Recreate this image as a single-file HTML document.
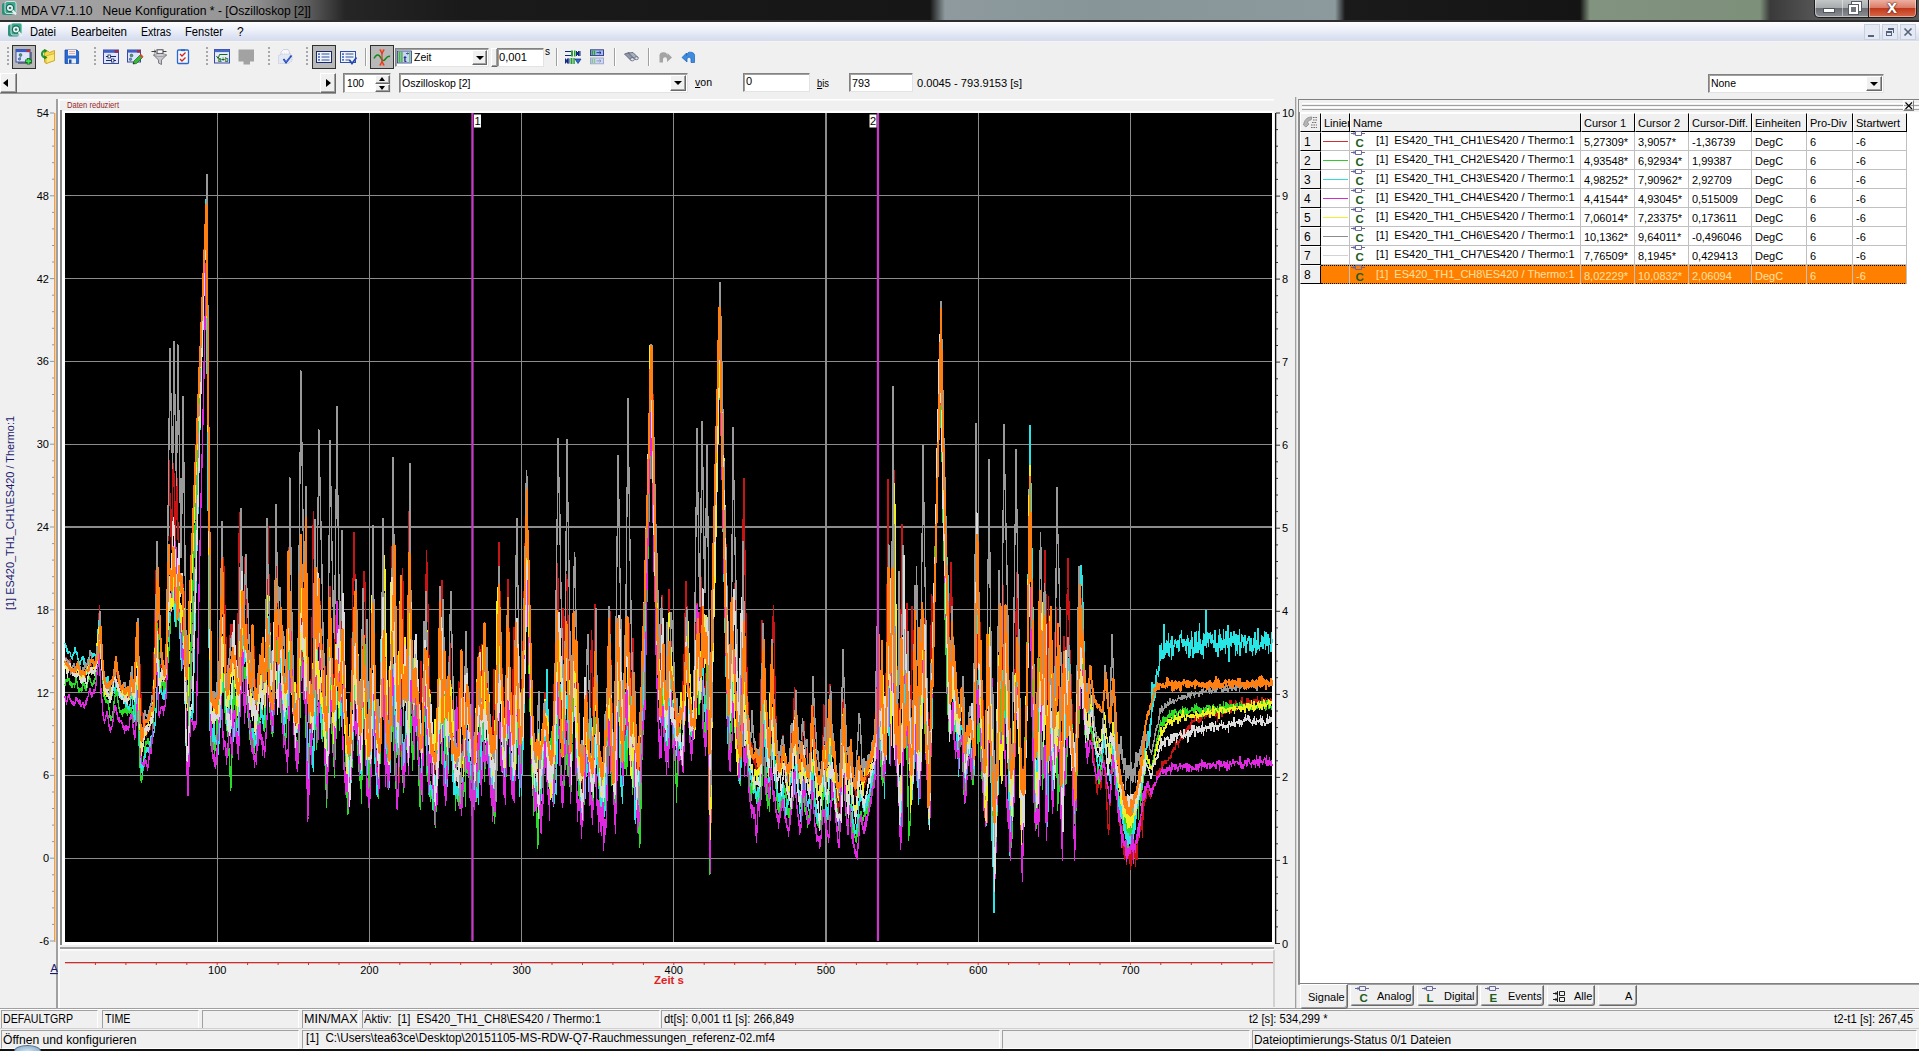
<!DOCTYPE html>
<html lang="de">
<head>
<meta charset="utf-8">
<title>MDA V7.1.10 Neue Konfiguration * - [Oszilloskop [2]]</title>
<style>
*{box-sizing:border-box;margin:0;padding:0}
html,body{width:1919px;height:1051px;overflow:hidden;background:#f0f0f0}
body{position:relative;font-family:"Liberation Sans",sans-serif;font-size:12px;color:#000}
.a{position:absolute}
.t{position:absolute;white-space:nowrap;line-height:1;transform-origin:0 0}
#title{left:0;top:0;width:1919px;height:21px;background:
 linear-gradient(90deg,#3c3c3c 0px,#2a2a2a 300px,#1a1a1a 460px,#161616 930px,#8e9a9e 945px,#879598 1100px,#8c9a9e 1335px,#1a1a1a 1345px,#141414 1580px,#82937f 1590px,#7d907a 1760px,#3a3a3a 1770px,#555 1815px)}
#titleglow{left:0;top:0;width:345px;height:21px;background:linear-gradient(90deg,rgba(185,185,185,.85) 0,rgba(175,175,175,.8) 250px,rgba(140,140,140,.5) 310px,rgba(80,80,80,0) 345px)}
#tline{left:0;top:20px;width:1919px;height:2px;background:#2e2e2e}
#menu{left:0;top:22px;width:1919px;height:19px;background:linear-gradient(#fdfdff 0%,#eef1f9 40%,#dde3f2 75%,#d6dcec 100%)}
#menuline{left:0;top:41px;width:1919px;height:1px;background:#f5f5f5}
.m{top:26px;font-size:12px}
.sunk{position:absolute;background:#fff;border:1px solid;border-color:#828282 #e3e3e3 #e3e3e3 #828282;box-shadow:inset 1px 1px 0 #a0a0a0}
.btn{position:absolute;background:#f0f0f0;border:1px solid;border-color:#fff #696969 #696969 #fff;box-shadow:inset -1px -1px 0 #a0a0a0}
.pressed{position:absolute;background:#b9b9b9;border:1px solid #303030}
.vsep{position:absolute;width:1px;background:#a0a0a0;box-shadow:1px 0 0 #fff}
.grip{position:absolute;width:2px;height:20px;background:repeating-linear-gradient(#a8a8a8 0 2px,transparent 2px 4px)}
.sb{position:absolute;font-size:12px;top:1013px}
.pan{position:absolute;border:1px solid;border-color:#a0a0a0 #fff #fff #a0a0a0;height:19px}
.hd{position:absolute;top:113px;height:19px;background:#f0f0f0;border:1px solid;border-color:#fff #000 #000 #fff;font-size:11px;padding:3px 0 0 2px;white-space:nowrap;overflow:hidden}
.rh{position:absolute;left:1300px;width:21px;height:19px;background:#f0f0f0;border:1px solid;border-color:#fff #000 #000 #fff;font-size:12px;padding:2px 0 0 3px}
.row{position:absolute;left:1321px;width:586px;height:19px;border-bottom:1px solid #c0c0c0;font-size:11px;white-space:nowrap}
.row span{position:absolute;top:4px;white-space:nowrap}
.row i{position:absolute;left:2px;top:9px;width:25px;height:1px}
.row b{position:absolute;left:30px;top:-1px;width:20px;height:19px;font-weight:normal}
.cl{position:absolute;top:132px;width:1px;height:152px;background:#c0c0c0}
.tab{position:absolute;top:985px;height:21px;background:#f0f0f0;border:1px solid;border-color:#f0f0f0 #696969 #696969 #fff;box-shadow:inset -1px -1px 0 #a0a0a0;border-radius:0 0 3px 3px;font-size:11px;white-space:nowrap}
.tab span{position:absolute;top:4px}
svg{position:absolute;left:0;top:0}
</style>
</head>
<body>
<!-- title bar -->
<div class="a" id="title"></div>
<div class="a" id="titleglow"></div>
<div class="a" id="tline"></div>
<div class="t" id="ttxt" style="transform:scaleX(1.011);left:21px;top:5px;font-size:12px;color:#000">MDA V7.1.10&nbsp;&nbsp; Neue Konfiguration * - [Oszilloskop [2]]</div>
<!-- window buttons -->
<div class="a" style="left:1814px;top:0;width:29px;height:18px;border:1px solid #1c1c1c;border-top:0;border-radius:0 0 0 5px;background:linear-gradient(#c2c6c6,#a6aaaa 48%,#6c7076 50%,#8c9094);box-shadow:inset 1px -1px 0 rgba(255,255,255,.45)"></div>
<div class="a" style="left:1842px;top:0;width:27px;height:18px;border:1px solid #1c1c1c;border-top:0;border-left:0;background:linear-gradient(#c2c6c6,#a6aaaa 48%,#6c7076 50%,#8c9094);box-shadow:inset 1px -1px 0 rgba(255,255,255,.45)"></div>
<div class="a" style="left:1869px;top:0;width:48px;height:18px;border:1px solid #1c1c1c;border-top:0;border-left:0;border-radius:0 0 5px 0;background:linear-gradient(#eeb0a0,#d87a66 48%,#c23a1c 50%,#d8684a);box-shadow:inset 1px -1px 0 rgba(255,255,255,.45),inset -1px 0 0 rgba(255,255,255,.45)"></div>
<div class="a" style="left:1823px;top:8px;width:12px;height:5px;background:#fff;border:1px solid #50545c"></div>
<div class="a" style="left:1852px;top:2px;width:9px;height:9px;border:2px solid #fff;outline:1px solid #585c64"></div>
<div class="a" style="left:1849px;top:5px;width:9px;height:9px;border:2.5px solid #fff;outline:1px solid #585c64;background:#70747a"></div>
<div class="t" style="left:1887px;top:-2px;font-size:18px;font-weight:bold;color:#fff;text-shadow:0 0 2px #501008,0 0 1px #501008">x</div>
<!-- menu bar -->
<div class="a" id="menu"></div>
<div class="a" id="menuline"></div>
<div class="t m" id="m1" style="transform:scaleX(0.928);left:30px">Datei</div>
<div class="t m" id="m2" style="transform:scaleX(0.965);left:71px">Bearbeiten</div>
<div class="t m" id="m3" style="transform:scaleX(0.882);left:141px">Extras</div>
<div class="t m" id="m4" style="transform:scaleX(0.934);left:185px">Fenster</div>
<div class="t m" id="m5" style="left:237px">?</div>
<!-- toolbar icons -->
<svg style="left:0;top:0;z-index:3;pointer-events:none" width="720" height="75" viewBox="0 0 720 75">
<!-- app icons (title + menu) -->
<g id="appico">
<rect x="2" y="3" width="11" height="12" rx="2" fill="#2f8f7d"/><rect x="5" y="1.5" width="11" height="12" rx="2" fill="#3aa890" stroke="#e8f4f0" stroke-width=".8"/><circle cx="10" cy="8" r="3.6" fill="#eef6f4" stroke="#1d6a5a" stroke-width="1.2"/><path d="M12.5 10.5 L16 14.5" stroke="#e8f0ee" stroke-width="2"/><circle cx="10" cy="8" r="1.3" fill="#2a7a6a"/>
</g>
<g transform="translate(6,21.5)">
<rect x="2" y="3" width="11" height="12" rx="2" fill="#2f8f7d"/><rect x="5" y="1.5" width="11" height="12" rx="2" fill="#3aa890" stroke="#e8f4f0" stroke-width=".8"/><circle cx="10" cy="8" r="3.6" fill="#eef6f4" stroke="#1d6a5a" stroke-width="1.2"/><path d="M12.5 10.5 L16 14.5" stroke="#e8f0ee" stroke-width="2"/><circle cx="10" cy="8" r="1.3" fill="#2a7a6a"/>
</g>
<!-- 1 window+plus -->
<rect x="18" y="52" width="14" height="12" fill="#707078"/>
<rect x="16" y="49.5" width="14" height="12.5" fill="#dfe6fb" stroke="#3c50a8" stroke-width="1"/><rect x="16" y="49.5" width="14" height="2.6" fill="#3c5ac8"/><rect x="26.5" y="49.5" width="3.5" height="2.6" fill="#b03838"/>
<circle cx="20.5" cy="55" r="1.4" fill="#50a050" stroke="#305080" stroke-width=".6"/><circle cx="19.5" cy="59" r="1.2" fill="#7090c0" stroke="#305080" stroke-width=".6"/><path d="M21 56.5 L20 58" stroke="#305080" stroke-width=".6"/>
<path d="M28.5 58 V64.5 M25.2 61.2 H31.8" stroke="#0a6a1a" stroke-width="3.4"/><path d="M28.5 58.8 V63.7 M26 61.2 H31" stroke="#48e058" stroke-width="1.8"/>
<!-- 2 folder -->
<path d="M44.5 52.5 L48 51 L49.5 52.5 L54.5 50.5 V60.5 L46 63.5 L44.5 62 Z" fill="#f4d84a" stroke="#c09a18" stroke-width=".8"/><path d="M46 56 L54.5 53.5 V60.5 L46 63.5 Z" fill="#fbe878" stroke="#c09a18" stroke-width=".6"/>
<path d="M45.5 50.5 A3.4 3.4 0 1 0 45.5 57.5" fill="none" stroke="#2c9a2c" stroke-width="2.2"/><path d="M44 49 L47.5 50.5 L44.5 53 Z M44 59.5 L47.5 57.5 L44.5 55.5 Z" fill="#1c8a1c"/>
<!-- 3 floppy -->
<path d="M65 50 H77 L78.6 51.6 V63.5 H65 Z" fill="#2a6ad0" stroke="#1848a0" stroke-width=".8"/><rect x="68" y="50" width="8" height="5.5" fill="#f4f0f0"/><path d="M69 51.5 H75 M69 53.5 H75" stroke="#d89090" stroke-width=".7"/><rect x="68" y="58.5" width="8" height="5" fill="#e8eef8"/><rect x="69" y="59.5" width="2.5" height="4" fill="#2050a8"/>
<!-- 4 window sliders -->
<rect x="103.5" y="50" width="15" height="13.5" fill="#dfe6fb" stroke="#3848a0" stroke-width="1"/><rect x="103.5" y="50" width="15" height="2.8" fill="#4060c8"/><rect x="114.5" y="50" width="4" height="2.8" fill="#903050"/>
<path d="M106 56.5 H116 M106 60.5 H116" stroke="#182868" stroke-width="1.2"/><rect x="108" y="55" width="2.4" height="3" fill="#fff" stroke="#182868" stroke-width=".8"/><rect x="111.5" y="59" width="2.4" height="3" fill="#fff" stroke="#182868" stroke-width=".8"/>
<!-- 5 window pencil -->
<rect x="127.5" y="50" width="13" height="12" fill="#dfe6fb" stroke="#3848a0" stroke-width="1"/><rect x="127.5" y="50" width="13" height="2.6" fill="#4060c8"/><rect x="137" y="50" width="3.5" height="2.6" fill="#a03040"/>
<circle cx="131.5" cy="55.5" r="1.4" fill="#50a050" stroke="#305080" stroke-width=".6"/><circle cx="130.5" cy="59.3" r="1.2" fill="#7090c0" stroke="#305080" stroke-width=".6"/>
<path d="M133 64 L134 61 L140 55 L142.5 57.5 L136.5 63.5 Z" fill="#38b838" stroke="#186818" stroke-width=".7"/><path d="M139.5 55.5 L141 54 L143.5 56.5 L142 58 Z" fill="#e04828"/><path d="M133 64 L133.6 62.2 L134.8 63.4 Z" fill="#202020"/>
<!-- 6 funnel -->
<path d="M151.5 51.5 H156 M154.3 50 L156 51.5 L154.3 53" stroke="#404048" stroke-width="1" fill="none"/><rect x="157" y="49.8" width="6" height="3.6" fill="#fff" stroke="#404048" stroke-width="1"/><path d="M163 51.5 H166.5" stroke="#404048" stroke-width="1"/>
<path d="M153.5 55 H166.5 L161.5 60 V64.5 L158.5 63 V60 Z" fill="#c8c8cc" stroke="#707078" stroke-width=".9"/><ellipse cx="160" cy="55" rx="6.5" ry="1.2" fill="#e8e8ec" stroke="#707078" stroke-width=".7"/>
<!-- 7 checklist -->
<rect x="177.5" y="50" width="11" height="13.5" rx="1" fill="#f4f8ff" stroke="#2868d0" stroke-width="1.3"/><rect x="181" y="49.3" width="4" height="1.8" fill="#2868d0"/>
<path d="M180 54 L182 56 L185.5 52.5 M180 59 L182 61 L185.5 57.5" stroke="#d02818" stroke-width="1.3" fill="none"/>
<!-- 8 a+b window -->
<rect x="214.5" y="49.5" width="15" height="13.5" fill="#e4ecfc" stroke="#3848a0" stroke-width="1"/><rect x="214.5" y="49.5" width="15" height="2.6" fill="#4868c8"/>
<path d="M216.5 56 L218.2 58.5 L219.5 54.5 H227.5" stroke="#186818" stroke-width="1" fill="none"/><text x="218" y="62" font-family="Liberation Sans,sans-serif" font-weight="bold" font-size="6.5" fill="#186818" textLength="10.5" lengthAdjust="spacingAndGlyphs">a+b</text>
<!-- 9 grey disabled -->
<path d="M238.5 49.5 H254 V61.5 H250 V64.5 H243.5 V61.5 H238.5 Z" fill="#a2a2a2"/>
<!-- 10 printer + check -->
<path d="M281 52 L283.5 49.5 H288 L289.5 52 V55 H281 Z" fill="#f8f8fc" stroke="#c0c4d8" stroke-width=".7"/><path d="M278.5 55.5 L282 54 H291 L292 56 V61 L288 63.5 H278.5 Z" fill="#e4e8f4" stroke="#b8bcd0" stroke-width=".7" stroke-dasharray="1.2 .8"/>
<path d="M283.5 59 L286 62.5 L291.5 55.5" stroke="#2048b0" stroke-width="1.8" fill="none"/><path d="M284.5 60 L286 62 L290 57" stroke="#4878e0" stroke-width=".8" fill="none"/>
<!-- 11 list -->
<rect x="316.5" y="51.5" width="15" height="11" fill="#f0f4ff" stroke="#182868" stroke-width="1"/><rect x="318" y="53.3" width="2" height="1.6" fill="#4868c8"/><rect x="318" y="56.2" width="2" height="1.6" fill="#4868c8"/><rect x="318" y="59.1" width="2" height="1.6" fill="#4868c8"/>
<path d="M321.5 54 H329.5 M321.5 57 H329.5 M321.5 60 H329.5" stroke="#3050a0" stroke-width="1"/>
<!-- 12 list + check -->
<rect x="340.5" y="51.5" width="15" height="11" fill="#f0f4ff" stroke="#3050a0" stroke-width="1"/><rect x="342" y="53.3" width="2" height="1.6" fill="#4868c8"/><rect x="342" y="56.2" width="2" height="1.6" fill="#4868c8"/><rect x="342" y="59.1" width="2" height="1.6" fill="#4868c8"/>
<path d="M345.5 54 H353.5 M345.5 57 H353.5 M345.5 60 H350" stroke="#3050a0" stroke-width="1"/><path d="M349.5 60 L352 63.5 L356.5 57.5" stroke="#2048b0" stroke-width="1.8" fill="none"/>
<!-- 13 wave -->
<path d="M374 58.5 C376 54.5 378.5 54 380 56.5 S383 62 385 59.5 S388 55.5 390 56.5" stroke="#108818" stroke-width="1.5" fill="none"/>
<path d="M382 50 V65" stroke="#e03820" stroke-width="1.2"/><path d="M379.8 49.5 L382 53.5 L384.2 49.5 M379.8 65.5 L382 61.5 L384.2 65.5" stroke="#e03820" stroke-width="1.3" fill="#f08060"/>
<!-- 14 combo icon -->
<rect x="397.5" y="51" width="14" height="12" fill="#c8d4f4" stroke="#283880" stroke-width=".8"/><rect x="398.5" y="51.5" width="2" height="11" fill="#48b048"/><rect x="401.2" y="51.5" width="1.4" height="11" fill="#48b048"/><rect x="409" y="51.5" width="1.6" height="11" fill="#78c078"/>
<text x="403.5" y="61.5" font-family="Liberation Sans,sans-serif" font-weight="bold" font-size="9" fill="#182878">t</text><path d="M406 53.5 H408.5 M407.5 52.5 L408.6 53.5 L407.5 54.5" stroke="#182878" stroke-width=".7" fill="none"/>
<!-- 15 -->
<path d="M565 51.5 H571 M565 55.5 H571" stroke="#102880" stroke-width="1"/><rect x="571" y="50.5" width="2" height="6" fill="#28a038"/><rect x="574" y="50.5" width="1.5" height="6" fill="#28a038"/><path d="M576.5 51 V56 M576.5 53.5 L579 51 V56 Z M580 51 V56" stroke="#102880" stroke-width="1" fill="#102880"/>
<path d="M565.5 58.5 V63.5 M565.5 61 L568 58.5 V63.5 Z M569 58.5 V63.5" stroke="#102880" stroke-width="1" fill="#102880"/><rect x="570.5" y="58" width="2" height="6" fill="#28a038"/><rect x="573.3" y="58" width="1.5" height="6" fill="#28a038"/><path d="M575 59 H581 L578 63.5 Z" fill="#2870d8" stroke="#102880" stroke-width=".7"/>
<!-- 16 -->
<rect x="590.5" y="49.8" width="13" height="5.8" fill="#a8b8f0" stroke="#283880" stroke-width=".9"/><rect x="591.5" y="50.5" width="1.8" height="4.4" fill="#28a038"/><rect x="594" y="50.5" width="1.2" height="4.4" fill="#28a038"/><path d="M596.5 52.7 H601 M599.5 51.3 L601 52.7 L599.5 54.1" stroke="#102880" stroke-width=".9" fill="none"/>
<rect x="590.5" y="58" width="13" height="5.8" fill="#d0d8f4" stroke="#98a4c8" stroke-width=".9"/><rect x="591.5" y="58.7" width="1.8" height="4.4" fill="#88c890"/><rect x="594" y="58.7" width="1.2" height="4.4" fill="#88c890"/><path d="M596.5 60.9 H601 M599.5 59.5 L601 60.9 L599.5 62.3" stroke="#8090c0" stroke-width=".9" fill="none"/>
<!-- 17 binoculars -->
<path d="M624.5 54 L629 52.5 L634.5 58.5 L631 60.5 Z" fill="#9098a8" stroke="#505868" stroke-width=".8"/><path d="M628.5 53 L633 52.5 L638 57.5 L635 59.5 Z" fill="#a8b0c0" stroke="#505868" stroke-width=".8"/><ellipse cx="632.3" cy="59.3" rx="2" ry="1.6" fill="#dce4f4" stroke="#505868" stroke-width=".7"/><ellipse cx="636.5" cy="58.2" rx="1.8" ry="1.5" fill="#dce4f4" stroke="#505868" stroke-width=".7"/>
<!-- 18 redo grey -->
<path d="M659.5 62.5 V57 A4 4 0 0 1 667.5 55.5 L667.5 53 L672 57.5 L667 62 V59 A2 2 0 0 0 663 59.5 V62.5 Z" fill="#a4a4a4"/>
<!-- 19 undo blue -->
<path d="M694.5 62.5 V57 A4 4 0 0 0 686.5 55.5 L686.5 53 L682 57.5 L687 62 V59 A2 2 0 0 1 691 59.5 V62.5 Z" fill="#3c8ce0" stroke="#1c60b8" stroke-width=".7"/>
</svg>

<!-- toolbar row 1 -->
<div class="grip" style="left:7px;top:47px"></div>
<div class="pressed" style="left:12px;top:45px;width:24px;height:24px"></div>
<div class="grip" style="left:94px;top:47px"></div>
<div class="grip" style="left:206px;top:47px"></div>
<div class="grip" style="left:268px;top:47px"></div>
<div class="grip" style="left:306px;top:47px"></div>
<div class="pressed" style="left:312px;top:45px;width:24px;height:24px"></div>
<div class="vsep" style="left:365px;top:48px;height:18px"></div>
<div class="pressed" style="left:370px;top:45px;width:24px;height:24px"></div>
<div class="sunk" style="left:395px;top:48px;width:94px;height:19px"></div>
<div class="btn" style="left:472px;top:50px;width:15px;height:15px"></div>
<div class="a" style="left:476px;top:56px;border:4px solid transparent;border-top:4px solid #000;border-bottom:0"></div>
<div class="t" id="zeit" style="transform:scaleX(0.954);left:414px;top:52px;font-size:11px">Zeit</div>
<div class="btn" style="left:491px;top:48px;width:7px;height:19px"></div>
<div class="sunk" style="left:497px;top:48px;width:47px;height:19px"></div>
<div class="t" id="v001" style="transform:scaleX(1.017);left:499px;top:52px;font-size:11px">0,001</div>
<div class="t" style="left:545px;top:47px;font-size:10px">s</div>
<div class="vsep" style="left:556px;top:48px;height:18px"></div>
<div class="vsep" style="left:614px;top:48px;height:18px"></div>
<div class="vsep" style="left:648px;top:48px;height:18px"></div>
<!-- toolbar row 2 -->
<div class="a" style="left:0;top:73px;width:336px;height:21px;background:#f0f0f0;border-bottom:2px solid #9a9a9a"></div>
<div class="btn" style="left:0;top:73px;width:17px;height:20px"></div>
<div class="a" style="left:3px;top:79px;border:4px solid transparent;border-right:5px solid #000;border-left:0"></div>
<div class="btn" style="left:320px;top:73px;width:16px;height:20px"></div>
<div class="a" style="left:326px;top:79px;border:4px solid transparent;border-left:5px solid #000;border-right:0"></div>
<div class="sunk" style="left:343px;top:73px;width:48px;height:20px"></div>
<div class="t" id="v100" style="transform:scaleX(0.926);left:347px;top:78px;font-size:11px">100</div>
<div class="btn" style="left:375px;top:75px;width:15px;height:9px"></div>
<div class="btn" style="left:375px;top:84px;width:15px;height:8px"></div>
<div class="a" style="left:379px;top:77px;border:3.5px solid transparent;border-bottom:4px solid #000;border-top:0"></div>
<div class="a" style="left:379px;top:86px;border:3.5px solid transparent;border-top:4px solid #000;border-bottom:0"></div>
<div class="sunk" style="left:399px;top:73px;width:289px;height:20px"></div>
<div class="t" id="osz" style="transform:scaleX(0.958);left:402px;top:78px;font-size:11px">Oszilloskop [2]</div>
<div class="btn" style="left:670px;top:75px;width:16px;height:16px"></div>
<div class="a" style="left:674px;top:81px;border:4px solid transparent;border-top:4px solid #000;border-bottom:0"></div>
<div class="t" id="von" style="transform:scaleX(0.958);left:695px;top:77px;font-size:11px"><u>v</u>on</div>
<div class="sunk" style="left:743px;top:73px;width:67px;height:19px"></div>
<div class="t" style="left:746px;top:76px;font-size:11px">0</div>
<div class="t" id="bis" style="transform:scaleX(0.852);left:817px;top:78px;font-size:11px"><u>b</u>is</div>
<div class="sunk" style="left:849px;top:73px;width:64px;height:19px"></div>
<div class="t" id="v793" style="transform:scaleX(0.98);left:852px;top:78px;font-size:11px">793</div>
<div class="t" id="rng" style="transform:scaleX(1.01);left:917px;top:78px;font-size:11px">0.0045 - 793.9153 [s]</div>
<div class="sunk" style="left:1708px;top:74px;width:176px;height:19px"></div>
<div class="t" id="none" style="transform:scaleX(0.951);left:1711px;top:78px;font-size:11px">None</div>
<div class="btn" style="left:1866px;top:76px;width:16px;height:15px"></div>
<div class="a" style="left:1870px;top:82px;border:4px solid transparent;border-top:4px solid #000;border-bottom:0"></div>
<!-- MDI buttons -->
<div class="a" style="left:1864px;top:24px;width:16px;height:16px;border:1px solid #c8d0e0;background:#e4e9f4"></div>
<div class="a" style="left:1882px;top:24px;width:16px;height:16px;border:1px solid #c8d0e0;background:#e4e9f4"></div>
<div class="a" style="left:1900px;top:24px;width:16px;height:16px;border:1px solid #c8d0e0;background:#e4e9f4"></div>
<div class="a" style="left:1868px;top:35px;width:6px;height:2px;background:#55627c"></div>
<div class="a" style="left:1886px;top:31px;width:6px;height:5px;border:1px solid #55627c;border-top-width:2px"></div>
<div class="a" style="left:1888px;top:28px;width:6px;height:5px;border:1px solid #55627c;border-top-width:2px;border-left:0;border-bottom:0"></div>
<svg class="a" style="left:1903px;top:27px" width="10" height="10" viewBox="0 0 10 10"><path d="M1.5 1.5 L8.5 8.5 M8.5 1.5 L1.5 8.5" stroke="#55627c" stroke-width="1.6"/></svg>


<svg width="1296" height="1010" viewBox="0 0 1296 1010" font-family="Liberation Sans, sans-serif">
<rect x="56" y="99" width="2" height="909" fill="#a0a0a0"/>
<rect x="58" y="99" width="2" height="909" fill="#fbfbfb"/>
<rect x="58" y="99" width="1216" height="1.5" fill="#fff"/>
<rect x="60" y="110" width="2" height="835" fill="#868686"/>
<rect x="62" y="111" width="1212" height="834" fill="#fff"/>
<rect x="60" y="947" width="1214" height="2" fill="#a0a0a0"/>
<rect x="60" y="949" width="1214" height="1.6" fill="#fff"/>
<rect x="65" y="113" width="1207" height="829" fill="#000"/>
<text x="67" y="108" font-size="8.5" fill="#982828" textLength="52" lengthAdjust="spacingAndGlyphs">Daten reduziert</text>
<path d="M217.2 113V942 M369.4 113V942 M521.6 113V942 M673.8 113V942 M826.0 113V942 M978.2 113V942 M1130.4 113V942 M65 858.2H1272 M65 775.4H1272 M65 692.6H1272 M65 609.8H1272 M65 527.0H1272 M65 444.2H1272 M65 361.4H1272 M65 278.6H1272 M65 195.8H1272" stroke="#8c8c8c" stroke-width="1.2" fill="none" shape-rendering="crispEdges"/>
<polyline points="65,660.0 65.5,660.0 66,657.1 66.5,663.4 67,660.7 67.5,662.7 68,660.8 68.5,664.3 69,663.4 69.5,666.4 70,659.5 70.5,667.0 71,666.2 71.5,669.7 72,667.9 72.5,674.6 73,672.8 73.5,674.4 74,674.5 74.5,676.5 75,675.2 75.5,675.4 76,672.7 76.5,675.0 77,672.3 77.5,675.7 78,672.6 78.5,675.4 79,672.4 79.5,676.4 80,672.9 80.5,673.1 81,670.0 81.5,672.0 82,672.1 82.5,673.1 83,672.0 83.5,677.9 84,675.3 84.5,680.6 85,677.1 85.5,677.6 86,671.6 86.5,670.1 87,665.9 87.5,668.1 88,666.3 88.5,665.1 89,659.4 89.5,661.9 90,659.8 90.5,663.5 91,664.3 91.5,668.5 92,668.9 92.5,670.8 93,668.4 93.5,669.7 94,667.8 94.5,669.2 95,665.4 95.5,663.7 96,659.5 96.5,661.1 97,658.0 97.5,653.4 98,639.1 98.5,632.2 99,617.9 99.5,606.1 100,618.2 100.5,631.8 101,640.7 101.5,656.0 102,661.2 102.5,670.3 103,672.0 103.5,681.6 104,685.4 104.5,691.2 105,690.2 105.5,691.4 106,687.0 106.5,687.6 107,683.5 107.5,684.1 108,679.4 108.5,682.7 109,683.5 109.5,688.1 110,687.8 110.5,692.9 111,689.9 111.5,695.1 112,695.1 112.5,693.2 113,683.7 113.5,679.1 114,678.8 114.5,682.5 115,670.3 115.5,672.8 116,668.0 116.5,667.8 117,671.0 117.5,680.3 118,679.4 118.5,684.3 119,683.1 119.5,687.1 120,686.6 120.5,690.5 121,692.1 121.5,699.6 122,695.1 122.5,695.6 123,692.9 123.5,693.1 124,690.8 124.5,693.1 125,691.1 125.5,692.7 126,692.4 126.5,695.7 127,692.7 127.5,696.9 128,693.5 128.5,692.9 129,689.8 129.5,692.4 130,689.7 130.5,692.0 131,685.8 131.5,682.3 132,677.1 132.5,686.0 133,685.9 133.5,689.3 134,688.9 134.5,698.8 135,695.8 135.5,701.6 136,704.8 136.5,713.4 137,711.9 137.5,711.2 138,695.1 138.5,688.1 139,670.8 139.5,657.8 140,667.3 140.5,690.5 141,696.1 141.5,709.9 142,712.7 142.5,721.4 143,721.6 143.5,724.9 144,721.5 144.5,725.5 145,722.7 145.5,730.4 146,731.9 146.5,736.5 147,732.2 147.5,732.7 148,731.3 148.5,730.6 149,728.8 149.5,730.0 150,727.1 150.5,728.9 151,721.8 151.5,721.4 152,712.4 152.5,704.8 153,691.3 153.5,678.6 154,658.4 154.5,642.7 155,618.4 155.5,597.3 156,570.6 156.5,583.0 157,600.7 157.5,619.7 158,632.2 158.5,647.8 159,654.3 159.5,667.0 160,664.7 160.5,666.9 161,665.2 161.5,669.9 162,668.9 162.5,671.2 163,668.8 163.5,673.9 164,673.3 164.5,682.7 165,674.7 165.5,682.1 166,676.5 166.5,655.9 167,610.7 167.5,572.7 168,526.2 168.5,489.8 169,460.4 169.5,482.3 170,498.6 170.5,519.5 171,528.6 171.5,549.1 172,517.5 172.5,494.8 173,463.0 173.5,464.4 174,476.6 174.5,504.2 175,521.6 175.5,542.5 176,509.1 176.5,487.1 177,478.9 177.5,507.6 178,529.0 178.5,556.2 179,577.9 179.5,606.3 180,613.4 180.5,630.9 181,636.6 181.5,647.8 182,646.4 182.5,623.4 183,597.7 183.5,585.0 184,593.9 184.5,621.6 185,643.0 185.5,660.5 186,673.8 186.5,686.5 187,666.5 187.5,662.4 188,640.6 188.5,629.7 189,615.4 189.5,607.0 190,592.0 190.5,583.7 191,569.7 191.5,562.1 192,547.0 192.5,540.4 193,518.4 193.5,515.3 194,496.0 194.5,492.0 195,472.8 195.5,470.4 196,447.1 196.5,439.6 197,426.5 197.5,423.8 198,405.6 198.5,397.1 199,379.4 199.5,370.7 200,353.0 200.5,344.8 201,331.3 201.5,324.2 202,304.4 202.5,302.8 203,277.5 203.5,275.3 204,249.1 204.5,248.4 205,229.2 205.5,231.6 206,205.0 206.5,256.4 207,322.1 207.5,394.7 208,459.0 208.5,526.3 209,585.4 209.5,648.4 210,689.8 210.5,707.5 211,706.1 211.5,709.8 212,704.3 212.5,707.2 213,703.2 213.5,711.8 214,704.2 214.5,707.6 215,695.0 215.5,715.6 216,700.4 216.5,704.4 217,691.8 217.5,720.2 218,704.4 218.5,708.4 219,700.8 219.5,697.4 220,680.3 220.5,665.2 221,644.9 221.5,631.4 222,607.0 222.5,585.0 223,557.1 223.5,563.8 224,566.6 224.5,609.2 225,605.1 225.5,632.7 226,639.6 226.5,666.5 227,666.5 227.5,679.6 228,671.6 228.5,686.1 229,661.4 229.5,655.0 230,635.1 230.5,641.3 231,624.2 231.5,628.8 232,624.3 232.5,654.1 233,655.8 233.5,665.8 234,666.3 234.5,677.2 235,669.9 235.5,688.0 236,674.8 236.5,701.7 237,672.5 237.5,664.0 238,623.8 238.5,594.9 239,546.5 239.5,512.5 240,518.5 240.5,547.0 241,559.2 241.5,593.5 242,598.3 242.5,631.3 243,636.8 243.5,624.5 244,596.6 244.5,582.1 245,557.8 245.5,589.0 246,591.6 246.5,625.8 247,624.9 247.5,649.4 248,657.5 248.5,677.1 249,677.0 249.5,690.5 250,694.7 250.5,701.9 251,697.6 251.5,695.7 252,672.5 252.5,665.4 253,636.7 253.5,637.4 254,651.0 254.5,673.8 255,682.0 255.5,697.8 256,704.4 256.5,718.7 257,700.3 257.5,714.6 258,706.3 258.5,714.3 259,688.5 259.5,689.6 260,680.1 260.5,675.1 261,659.8 261.5,650.7 262,652.2 262.5,673.9 263,668.5 263.5,692.3 264,683.0 264.5,701.9 265,689.2 265.5,695.4 266,660.3 266.5,638.9 267,599.9 267.5,575.7 268,526.7 268.5,562.3 269,580.1 269.5,617.7 270,625.8 270.5,665.1 271,660.0 271.5,685.5 272,671.8 272.5,671.2 273,650.4 273.5,676.1 274,685.4 274.5,677.1 275,638.2 275.5,617.7 276,582.2 276.5,551.6 277,553.7 277.5,582.2 278,594.9 278.5,624.8 279,636.4 279.5,654.8 280,617.7 280.5,634.3 281,632.4 281.5,652.9 282,655.2 282.5,673.6 283,675.3 283.5,693.6 284,689.4 284.5,698.7 285,689.1 285.5,704.0 286,684.6 286.5,674.0 287,639.8 287.5,614.8 288,582.5 288.5,548.1 289,563.8 289.5,601.1 290,601.1 290.5,633.4 291,641.5 291.5,662.2 292,662.2 292.5,697.2 293,690.1 293.5,701.3 294,712.3 294.5,731.6 295,731.3 295.5,734.8 296,712.2 296.5,708.6 297,685.9 297.5,682.2 298,666.2 298.5,658.5 299,633.8 299.5,634.8 300,607.0 300.5,636.4 301,607.6 301.5,606.1 302,626.6 302.5,654.6 303,661.8 303.5,682.0 304,667.6 304.5,659.5 305,636.1 305.5,607.3 306,566.3 306.5,580.7 307,621.7 307.5,671.8 308,670.6 308.5,706.6 309,708.6 309.5,728.2 310,717.5 310.5,736.3 311,687.2 311.5,666.5 312,623.8 312.5,605.2 313,533.4 313.5,511.4 314,541.1 314.5,587.1 315,621.0 315.5,657.2 316,682.1 316.5,700.4 317,654.2 317.5,638.9 318,595.4 318.5,587.1 319,582.6 319.5,613.5 320,601.9 320.5,628.3 321,628.4 321.5,651.4 322,644.5 322.5,670.4 323,674.3 323.5,685.4 324,688.5 324.5,680.2 325,666.8 325.5,701.4 326,714.7 326.5,735.2 327,726.8 327.5,754.6 328,708.0 328.5,688.4 329,643.4 329.5,627.6 330,586.6 330.5,618.4 331,623.4 331.5,662.8 332,681.0 332.5,712.1 333,722.1 333.5,716.1 334,681.1 334.5,663.6 335,632.0 335.5,634.8 336,616.0 336.5,637.3 337,644.7 337.5,681.0 338,656.4 338.5,689.6 339,673.2 339.5,669.3 340,661.7 340.5,665.1 341,624.1 341.5,615.0 342,600.9 342.5,647.2 343,666.3 343.5,704.7 344,698.0 344.5,709.8 345,712.6 345.5,732.2 346,732.5 346.5,748.3 347,747.0 347.5,760.3 348,743.9 348.5,759.1 349,738.2 349.5,760.5 350,744.6 350.5,734.8 351,692.9 351.5,692.1 352,647.2 352.5,623.5 353,580.7 353.5,573.8 354,532.4 354.5,566.9 355,577.6 355.5,585.6 356,609.5 356.5,651.9 357,660.5 357.5,694.6 358,703.7 358.5,732.1 359,714.3 359.5,748.9 360,738.3 360.5,743.7 361,713.5 361.5,702.8 362,659.6 362.5,658.7 363,633.6 363.5,644.2 364,571.1 364.5,575.6 365,585.5 365.5,625.7 366,627.0 366.5,655.7 367,650.2 367.5,689.7 368,692.7 368.5,717.6 369,710.5 369.5,749.3 370,734.5 370.5,747.0 371,693.3 371.5,700.1 372,648.3 372.5,627.3 373,586.2 373.5,621.6 374,632.2 374.5,663.2 375,666.0 375.5,694.6 376,706.0 376.5,748.2 377,729.5 377.5,765.8 378,755.1 378.5,761.6 379,753.7 379.5,766.8 380,748.2 380.5,754.3 381,733.9 381.5,724.1 382,694.6 382.5,688.7 383,652.4 383.5,655.8 384,599.2 384.5,627.0 385,647.5 385.5,687.7 386,682.6 386.5,709.2 387,697.2 387.5,742.4 388,723.7 388.5,736.3 389,670.3 389.5,690.6 390,693.9 390.5,689.4 391,653.9 391.5,625.9 392,561.1 392.5,522.8 393,552.1 393.5,619.0 394,645.3 394.5,676.5 395,676.2 395.5,713.2 396,699.6 396.5,730.9 397,721.7 397.5,750.4 398,743.1 398.5,754.0 399,751.6 399.5,782.0 400,745.3 400.5,737.7 401,692.6 401.5,673.1 402,595.4 402.5,568.3 403,588.0 403.5,638.8 404,651.9 404.5,693.7 405,701.3 405.5,692.6 406,669.5 406.5,678.3 407,676.7 407.5,709.3 408,665.1 408.5,616.8 409,530.0 409.5,483.3 410,513.5 410.5,577.3 411,610.1 411.5,658.5 412,679.2 412.5,723.2 413,714.0 413.5,741.7 414,723.6 414.5,710.8 415,680.8 415.5,664.6 416,650.3 416.5,680.1 417,683.7 417.5,701.7 418,704.3 418.5,724.1 419,702.7 419.5,746.3 420,731.0 420.5,706.5 421,661.6 421.5,687.6 422,685.1 422.5,729.0 423,703.9 423.5,706.9 424,673.4 424.5,708.1 425,680.5 425.5,649.8 426,589.8 426.5,550.5 427,567.3 427.5,608.0 428,604.1 428.5,652.0 429,656.0 429.5,709.9 430,690.6 430.5,708.3 431,716.3 431.5,753.3 432,754.9 432.5,775.5 433,767.2 433.5,782.5 434,775.7 434.5,786.7 435,759.9 435.5,767.4 436,760.0 436.5,777.4 437,735.9 437.5,744.8 438,713.0 438.5,707.3 439,673.6 439.5,679.3 440,645.7 440.5,648.9 441,614.0 441.5,593.1 442,580.7 442.5,641.4 443,658.9 443.5,707.1 444,709.8 444.5,743.5 445,744.8 445.5,771.3 446,746.8 446.5,754.8 447,723.1 447.5,728.2 448,696.9 448.5,697.7 449,659.7 449.5,651.2 450,643.8 450.5,678.3 451,687.2 451.5,709.3 452,700.7 452.5,727.1 453,728.4 453.5,754.5 454,734.6 454.5,762.3 455,749.3 455.5,764.1 456,749.6 456.5,760.3 457,750.2 457.5,764.7 458,726.8 458.5,730.2 459,682.0 459.5,715.4 460,727.4 460.5,747.3 461,744.2 461.5,767.5 462,763.1 462.5,767.5 463,739.1 463.5,738.3 464,701.3 464.5,716.0 465,695.1 465.5,682.9 466,673.6 466.5,700.1 467,691.3 467.5,721.2 468,703.9 468.5,725.8 469,723.3 469.5,745.1 470,741.2 470.5,751.8 471,740.1 471.5,755.9 472,751.4 472.5,761.9 473,749.0 473.5,774.2 474,748.1 474.5,767.1 475,753.9 475.5,767.0 476,761.1 476.5,773.8 477,751.5 477.5,738.3 478,712.5 478.5,700.9 479,658.2 479.5,646.5 480,650.8 480.5,675.2 481,686.0 481.5,672.5 482,644.7 482.5,650.8 483,645.8 483.5,669.6 484,671.1 484.5,706.4 485,694.4 485.5,695.8 486,670.8 486.5,666.0 487,676.8 487.5,705.4 488,695.1 488.5,723.9 489,707.5 489.5,736.6 490,732.5 490.5,749.3 491,752.6 491.5,768.7 492,755.5 492.5,758.0 493,723.1 493.5,705.2 494,669.9 494.5,678.8 495,700.1 495.5,724.4 496,717.5 496.5,717.9 497,667.4 497.5,647.6 498,613.3 498.5,584.7 499,542.8 499.5,581.1 500,595.6 500.5,624.9 501,636.2 501.5,672.3 502,668.4 502.5,698.1 503,687.7 503.5,724.9 504,708.0 504.5,736.1 505,730.0 505.5,720.7 506,684.2 506.5,660.6 507,619.2 507.5,609.5 508,579.8 508.5,621.8 509,631.8 509.5,669.5 510,668.8 510.5,696.0 511,696.4 511.5,735.1 512,731.0 512.5,726.6 513,682.1 513.5,649.3 514,627.2 514.5,661.7 515,676.3 515.5,708.9 516,684.4 516.5,672.7 517,634.0 517.5,635.2 518,644.4 518.5,685.9 519,668.5 519.5,698.4 520,706.5 520.5,721.4 521,717.3 521.5,718.4 522,683.1 522.5,673.5 523,648.8 523.5,629.3 524,599.2 524.5,578.7 525,550.1 525.5,532.1 526,496.5 526.5,491.1 527,498.8 527.5,548.9 528,561.7 528.5,594.3 529,605.7 529.5,648.9 530,650.1 530.5,691.9 531,692.6 531.5,736.4 532,737.2 532.5,755.6 533,753.6 533.5,766.0 534,758.7 534.5,766.0 535,746.7 535.5,763.9 536,750.7 536.5,763.5 537,746.6 537.5,763.8 538,759.1 538.5,790.6 539,744.6 539.5,774.5 540,759.5 540.5,775.8 541,760.7 541.5,763.2 542,747.7 542.5,745.6 543,725.0 543.5,730.5 544,704.5 544.5,729.4 545,692.8 545.5,708.5 546,698.9 546.5,732.5 547,725.0 547.5,749.4 548,747.4 548.5,769.9 549,755.2 549.5,780.9 550,760.9 550.5,770.3 551,749.4 551.5,777.0 552,762.1 552.5,780.3 553,744.0 553.5,734.3 554,689.4 554.5,675.6 555,689.8 555.5,706.5 556,654.8 556.5,623.1 557,566.1 557.5,563.7 558,585.7 558.5,654.5 559,662.4 559.5,696.5 560,689.5 560.5,725.6 561,711.7 561.5,739.5 562,696.9 562.5,662.6 563,608.2 563.5,644.6 564,659.1 564.5,655.9 565,619.5 565.5,611.2 566,574.3 566.5,577.4 567,580.5 567.5,609.5 568,617.5 568.5,648.9 569,644.6 569.5,680.5 570,656.9 570.5,697.9 571,702.1 571.5,723.7 572,724.2 572.5,717.1 573,686.5 573.5,688.1 574,635.8 574.5,632.4 575,643.0 575.5,669.0 576,673.1 576.5,715.0 577,699.9 577.5,725.3 578,732.7 578.5,761.2 579,739.9 579.5,772.5 580,770.1 580.5,782.1 581,767.7 581.5,782.0 582,764.6 582.5,793.5 583,797.0 583.5,809.1 584,773.4 584.5,756.6 585,713.1 585.5,729.5 586,695.0 586.5,691.3 587,691.8 587.5,715.6 588,720.4 588.5,746.5 589,746.2 589.5,762.1 590,715.7 590.5,697.5 591,661.4 591.5,630.9 592,644.1 592.5,691.5 593,715.1 593.5,717.4 594,677.8 594.5,681.3 595,604.4 595.5,632.3 596,626.1 596.5,689.7 597,711.2 597.5,753.5 598,775.1 598.5,779.9 599,770.2 599.5,795.3 600,771.1 600.5,784.0 601,769.1 601.5,798.3 602,769.3 602.5,792.3 603,772.7 603.5,785.9 604,776.6 604.5,788.8 605,776.8 605.5,788.5 606,777.0 606.5,775.9 607,748.9 607.5,736.5 608,702.6 608.5,689.8 609,656.5 609.5,637.3 610,611.7 610.5,646.4 611,666.4 611.5,717.9 612,703.9 612.5,747.3 613,744.9 613.5,772.6 614,753.2 614.5,762.0 615,718.5 615.5,707.0 616,675.4 616.5,655.1 617,646.9 617.5,686.1 618,666.3 618.5,667.8 619,672.5 619.5,688.3 620,677.0 620.5,700.7 621,700.9 621.5,725.8 622,718.9 622.5,731.7 623,684.7 623.5,700.6 624,679.7 624.5,707.0 625,709.6 625.5,746.1 626,748.7 626.5,761.7 627,725.4 627.5,701.3 628,664.9 628.5,660.6 629,623.6 629.5,657.1 630,653.6 630.5,690.9 631,689.7 631.5,704.6 632,672.5 632.5,678.4 633,638.6 633.5,665.9 634,681.8 634.5,719.0 635,730.0 635.5,748.4 636,757.3 636.5,777.2 637,772.6 637.5,795.7 638,773.3 638.5,793.5 639,775.9 639.5,793.6 640,758.7 640.5,757.2 641,730.4 641.5,742.0 642,703.6 642.5,706.5 643,670.8 643.5,674.8 644,648.8 644.5,641.7 645,625.6 645.5,633.0 646,584.6 646.5,580.6 647,550.9 647.5,536.0 648,498.3 648.5,492.2 649,463.4 649.5,462.4 650,408.7 650.5,406.5 651,360.3 651.5,368.9 652,360.2 652.5,393.2 653,394.5 653.5,439.7 654,441.8 654.5,483.8 655,495.2 655.5,531.6 656,535.8 656.5,568.3 657,577.9 657.5,597.3 658,599.9 658.5,633.6 659,645.0 659.5,675.2 660,680.6 660.5,683.6 661,642.5 661.5,624.5 662,595.6 662.5,646.9 663,646.4 663.5,687.1 664,695.4 664.5,713.4 665,720.3 665.5,734.5 666,729.5 666.5,742.0 667,702.7 667.5,681.2 668,642.4 668.5,626.1 669,589.9 669.5,617.9 670,618.8 670.5,644.0 671,641.7 671.5,670.9 672,671.6 672.5,687.6 673,685.3 673.5,696.3 674,694.2 674.5,709.3 675,714.9 675.5,722.9 676,713.7 676.5,733.3 677,729.0 677.5,735.3 678,723.5 678.5,742.7 679,720.3 679.5,732.9 680,719.6 680.5,725.0 681,718.0 681.5,723.0 682,714.0 682.5,710.9 683,682.0 683.5,689.9 684,657.3 684.5,647.7 685,616.3 685.5,607.7 686,581.7 686.5,591.0 687,612.5 687.5,646.0 688,657.3 688.5,692.2 689,686.0 689.5,709.5 690,708.0 690.5,719.1 691,709.7 691.5,730.6 692,719.6 692.5,725.9 693,713.6 693.5,708.5 694,687.8 694.5,685.1 695,655.2 695.5,651.9 696,624.1 696.5,621.1 697,603.9 697.5,624.1 698,631.1 698.5,650.0 699,660.5 699.5,664.6 700,617.9 700.5,602.3 701,577.0 701.5,609.8 702,627.3 702.5,655.6 703,646.7 703.5,681.0 704,689.0 704.5,704.3 705,706.9 705.5,720.0 706,677.9 706.5,664.9 707,635.9 707.5,637.7 708,626.0 708.5,671.2 709,693.6 709.5,748.6 710,763.5 710.5,759.8 711,733.9 711.5,736.2 712,696.5 712.5,662.8 713,622.7 713.5,617.6 714,585.0 714.5,573.3 715,545.8 715.5,535.6 716,511.1 716.5,504.3 717,457.1 717.5,454.3 718,423.6 718.5,406.7 719,376.3 719.5,360.2 720,325.2 720.5,323.6 721,333.1 721.5,368.8 722,381.2 722.5,405.5 723,424.9 723.5,448.7 724,469.9 724.5,500.6 725,508.8 725.5,535.5 726,548.9 726.5,572.2 727,591.6 727.5,620.0 728,626.7 728.5,650.1 729,657.2 729.5,671.9 730,670.3 730.5,695.2 731,691.9 731.5,717.4 732,688.1 732.5,686.7 733,643.9 733.5,633.5 734,595.3 734.5,584.1 735,596.0 735.5,619.0 736,623.9 736.5,650.9 737,655.6 737.5,688.9 738,686.6 738.5,708.8 739,712.8 739.5,731.6 740,736.6 740.5,730.5 741,690.5 741.5,666.6 742,614.5 742.5,587.3 743,532.0 743.5,497.9 744,478.8 744.5,528.6 745,559.1 745.5,599.1 746,619.1 746.5,655.0 747,672.5 747.5,696.7 748,705.0 748.5,717.3 749,718.8 749.5,730.3 750,732.6 750.5,749.3 751,742.4 751.5,757.2 752,745.9 752.5,759.6 753,757.3 753.5,762.4 754,760.1 754.5,764.0 755,756.0 755.5,771.4 756,766.2 756.5,769.0 757,765.3 757.5,770.8 758,762.3 758.5,768.4 759,766.4 759.5,763.4 760,742.4 760.5,719.3 761,689.0 761.5,661.8 762,620.3 762.5,634.1 763,658.1 763.5,689.8 764,701.2 764.5,722.5 765,722.7 765.5,734.8 766,736.8 766.5,747.8 767,751.2 767.5,760.4 768,766.1 768.5,776.7 769,782.8 769.5,794.0 770,773.3 770.5,754.1 771,728.8 771.5,707.0 772,678.4 772.5,659.3 773,623.5 773.5,605.9 774,630.0 774.5,663.5 775,683.0 775.5,712.2 776,717.6 776.5,746.1 777,747.9 777.5,757.8 778,752.6 778.5,761.9 779,759.0 779.5,772.8 780,759.5 780.5,765.2 781,758.1 781.5,758.1 782,747.4 782.5,752.3 783,735.3 783.5,746.4 784,744.9 784.5,762.8 785,769.2 785.5,779.1 786,778.5 786.5,795.3 787,781.7 787.5,783.4 788,771.7 788.5,780.9 789,773.0 789.5,771.2 790,762.3 790.5,760.6 791,746.9 791.5,744.4 792,732.4 792.5,730.1 793,733.6 793.5,731.4 794,704.5 794.5,688.0 795,689.7 795.5,716.3 796,726.6 796.5,740.9 797,747.4 797.5,763.8 798,762.6 798.5,773.8 799,774.0 799.5,782.0 800,771.1 800.5,767.1 801,758.9 801.5,755.8 802,742.3 802.5,742.3 803,726.1 803.5,725.8 804,721.5 804.5,737.9 805,738.7 805.5,748.6 806,748.9 806.5,757.7 807,754.4 807.5,764.6 808,765.1 808.5,773.4 809,767.4 809.5,774.7 810,759.2 810.5,757.1 811,744.9 811.5,740.0 812,719.8 812.5,712.4 813,706.9 813.5,721.5 814,729.7 814.5,740.9 815,742.4 815.5,754.6 816,757.8 816.5,775.2 817,768.6 817.5,777.8 818,778.4 818.5,783.0 819,782.0 819.5,786.8 820,784.7 820.5,789.5 821,780.9 821.5,783.5 822,767.7 822.5,756.4 823,738.0 823.5,729.6 824,705.0 824.5,731.9 825,735.6 825.5,758.2 826,761.3 826.5,768.9 827,771.2 827.5,776.8 828,759.2 828.5,744.9 829,723.8 829.5,711.1 830,684.4 830.5,689.7 831,700.7 831.5,719.9 832,730.6 832.5,731.7 833,735.7 833.5,751.9 834,752.6 834.5,767.5 835,766.1 835.5,783.0 836,782.8 836.5,791.0 837,794.4 837.5,807.7 838,809.0 838.5,813.5 839,803.8 839.5,802.9 840,784.4 840.5,768.7 841,747.1 841.5,737.7 842,707.2 842.5,695.7 843,700.2 843.5,726.3 844,743.1 844.5,770.3 845,766.9 845.5,785.1 846,783.9 846.5,799.9 847,795.3 847.5,812.0 848,807.1 848.5,809.3 849,805.9 849.5,797.6 850,781.9 850.5,777.0 851,762.8 851.5,767.7 852,763.8 852.5,774.4 853,774.0 853.5,783.7 854,779.1 854.5,790.8 855,782.8 855.5,796.0 856,791.5 856.5,797.1 857,792.1 857.5,793.5 858,778.1 858.5,779.8 859,769.8 859.5,768.2 860,765.7 860.5,772.3 861,770.1 861.5,776.3 862,777.1 862.5,782.7 863,779.6 863.5,787.3 864,782.8 864.5,787.2 865,775.5 865.5,784.8 866,778.6 866.5,781.5 867,775.1 867.5,775.8 868,767.7 868.5,774.3 869,769.7 869.5,778.7 870,773.5 870.5,782.4 871,769.3 871.5,769.2 872,749.6 872.5,758.2 873,744.5 873.5,756.3 874,746.0 874.5,751.9 875,745.7 875.5,755.7 876,714.5 876.5,716.1 877,685.4 877.5,690.0 878,640.8 878.5,672.6 879,679.0 879.5,721.0 880,710.9 880.5,731.1 881,720.3 881.5,757.8 882,747.9 882.5,757.4 883,742.7 883.5,768.9 884,761.0 884.5,772.1 885,733.5 885.5,738.9 886,674.2 886.5,670.2 887,595.3 887.5,566.5 888,479.2 888.5,535.5 889,562.8 889.5,635.9 890,665.1 890.5,714.4 891,714.3 891.5,741.7 892,686.8 892.5,659.0 893,604.5 893.5,553.6 894,470.3 894.5,555.1 895,595.4 895.5,669.3 896,645.5 896.5,675.8 897,666.4 897.5,703.0 898,703.0 898.5,747.4 899,743.1 899.5,754.3 900,719.3 900.5,688.6 901,624.6 901.5,586.0 902,524.6 902.5,573.3 903,578.4 903.5,622.6 904,643.6 904.5,679.6 905,686.0 905.5,700.8 906,652.2 906.5,643.9 907,603.7 907.5,645.7 908,656.5 908.5,684.5 909,681.4 909.5,721.1 910,725.9 910.5,745.8 911,689.6 911.5,677.3 912,606.1 912.5,632.3 913,662.0 913.5,682.3 914,634.5 914.5,624.6 915,652.0 915.5,685.6 916,676.4 916.5,739.7 917,732.4 917.5,761.1 918,762.4 918.5,791.4 919,775.9 919.5,791.3 920,762.5 920.5,761.0 921,740.9 921.5,721.4 922,685.4 922.5,703.1 923,643.7 923.5,645.1 924,618.6 924.5,641.2 925,643.2 925.5,662.8 926,665.6 926.5,700.2 927,691.7 927.5,718.5 928,712.8 928.5,762.7 929,772.7 929.5,799.8 930,731.5 930.5,699.6 931,644.1 931.5,595.0 932,596.9 932.5,640.4 933,632.5 933.5,637.0 934,611.3 934.5,611.9 935,564.7 935.5,588.0 936,527.2 936.5,535.2 937,497.6 937.5,487.7 938,445.0 938.5,448.3 939,412.5 939.5,407.5 940,370.4 940.5,371.6 941,333.2 941.5,346.9 942,355.2 942.5,399.5 943,396.8 943.5,443.4 944,461.3 944.5,495.5 945,506.2 945.5,564.5 946,559.3 946.5,604.0 947,600.8 947.5,642.6 948,624.4 948.5,668.6 949,663.9 949.5,654.3 950,593.8 950.5,591.7 951,562.9 951.5,601.2 952,597.2 952.5,640.7 953,636.4 953.5,664.1 954,655.9 954.5,692.0 955,669.1 955.5,694.5 956,693.5 956.5,710.1 957,702.5 957.5,734.2 958,730.6 958.5,751.9 959,744.7 959.5,741.3 960,719.8 960.5,708.4 961,688.2 961.5,688.0 962,698.1 962.5,719.9 963,728.6 963.5,744.8 964,757.1 964.5,776.8 965,771.0 965.5,772.6 966,756.1 966.5,759.4 967,745.0 967.5,745.3 968,743.3 968.5,746.7 969,744.4 969.5,746.9 970,734.1 970.5,746.8 971,725.2 971.5,739.7 972,727.6 972.5,751.2 973,734.6 973.5,748.2 974,721.4 974.5,718.7 975,677.0 975.5,662.1 976,608.4 976.5,597.0 977,564.5 977.5,623.5 978,655.1 978.5,688.3 979,674.8 979.5,669.3 980,622.2 980.5,661.8 981,671.2 981.5,704.1 982,693.1 982.5,685.0 983,706.4 983.5,748.0 984,750.5 984.5,788.1 985,786.5 985.5,807.5 986,787.0 986.5,804.3 987,790.8 987.5,799.4 988,754.5 988.5,738.4 989,701.5 989.5,688.3 990,635.5 990.5,616.9 991,644.5 991.5,708.2 992,708.7 992.5,764.1 993,780.7 993.5,837.0 994,841.3 994.5,859.3 995,839.9 995.5,858.1 996,816.2 996.5,815.5 997,778.9 997.5,793.5 998,743.0 998.5,738.4 999,698.2 999.5,705.2 1000,653.1 1000.5,636.9 1001,656.6 1001.5,686.6 1002,676.1 1002.5,659.9 1003,585.8 1003.5,616.7 1004,634.0 1004.5,663.9 1005,657.7 1005.5,691.5 1006,695.1 1006.5,730.7 1007,736.8 1007.5,756.7 1008,758.8 1008.5,783.7 1009,757.3 1009.5,779.0 1010,755.8 1010.5,763.6 1011,744.5 1011.5,773.6 1012,762.0 1012.5,786.6 1013,766.8 1013.5,789.5 1014,744.3 1014.5,726.2 1015,673.5 1015.5,660.9 1016,621.6 1016.5,594.8 1017,572.8 1017.5,613.8 1018,621.9 1018.5,661.0 1019,676.5 1019.5,703.7 1020,717.1 1020.5,753.6 1021,756.5 1021.5,811.8 1022,768.5 1022.5,796.0 1023,779.8 1023.5,801.4 1024,766.4 1024.5,800.6 1025,745.6 1025.5,735.5 1026,703.8 1026.5,701.3 1027,659.9 1027.5,663.1 1028,610.8 1028.5,605.6 1029,566.8 1029.5,544.0 1030,507.8 1030.5,501.5 1031,505.6 1031.5,567.4 1032,592.9 1032.5,637.7 1033,654.4 1033.5,710.7 1034,708.6 1034.5,750.9 1035,759.5 1035.5,807.7 1036,800.2 1036.5,811.4 1037,798.4 1037.5,806.9 1038,789.3 1038.5,788.9 1039,751.7 1039.5,752.4 1040,725.2 1040.5,720.0 1041,672.3 1041.5,669.7 1042,654.6 1042.5,680.6 1043,695.9 1043.5,681.3 1044,636.5 1044.5,608.3 1045,550.9 1045.5,585.8 1046,598.0 1046.5,657.1 1047,694.4 1047.5,699.4 1048,638.9 1048.5,596.6 1049,624.5 1049.5,662.1 1050,671.5 1050.5,706.6 1051,724.2 1051.5,759.0 1052,764.3 1052.5,777.9 1053,738.3 1053.5,720.4 1054,692.3 1054.5,688.2 1055,635.6 1055.5,625.7 1056,608.0 1056.5,646.5 1057,633.2 1057.5,663.5 1058,664.6 1058.5,689.5 1059,683.4 1059.5,724.2 1060,705.8 1060.5,737.7 1061,732.9 1061.5,773.6 1062,741.6 1062.5,726.5 1063,679.0 1063.5,641.0 1064,636.4 1064.5,662.9 1065,647.8 1065.5,679.3 1066,667.8 1066.5,650.3 1067,597.5 1067.5,588.5 1068,558.3 1068.5,597.6 1069,603.1 1069.5,647.3 1070,651.3 1070.5,680.5 1071,674.2 1071.5,703.8 1072,704.5 1072.5,729.3 1073,737.3 1073.5,762.1 1074,761.5 1074.5,767.4 1075,746.8 1075.5,753.0 1076,712.3 1076.5,725.7 1077,719.1 1077.5,730.5 1078,693.3 1078.5,673.6 1079,607.1 1079.5,599.8 1080,591.4 1080.5,637.9 1081,598.1 1081.5,611.6 1082,615.7 1082.5,637.5 1083,639.8 1083.5,665.7 1084,664.1 1084.5,696.2 1085,691.1 1085.5,714.6 1086,713.1 1086.5,730.3 1087,720.6 1087.5,737.5 1088,732.5 1088.5,740.2 1089,727.1 1089.5,730.0 1090,719.7 1090.5,721.0 1091,723.4 1091.5,735.8 1092,737.7 1092.5,744.9 1093,748.4 1093.5,757.2 1094,759.3 1094.5,766.8 1095,766.9 1095.5,776.4 1096,778.2 1096.5,792.0 1097,790.7 1097.5,793.9 1098,784.5 1098.5,785.2 1099,778.7 1099.5,784.4 1100,780.2 1100.5,789.2 1101,787.7 1101.5,784.1 1102,772.3 1102.5,767.7 1103,758.1 1103.5,757.2 1104,761.7 1104.5,767.6 1105,772.0 1105.5,779.3 1106,784.1 1106.5,796.1 1107,804.4 1107.5,820.2 1108,825.6 1108.5,834.3 1109,828.2 1109.5,819.2 1110,800.2 1110.5,790.9 1111,772.4 1111.5,765.1 1112,749.0 1112.5,741.7 1113,734.7 1113.5,747.0 1114,750.7 1114.5,759.3 1115,757.1 1115.5,767.1 1116,762.1 1116.5,784.5 1117,782.9 1117.5,796.3 1118,801.3 1118.5,813.7 1119,813.7 1119.5,825.0 1120,816.6 1120.5,828.1 1121,824.9 1121.5,845.1 1122,825.5 1122.5,847.4 1123,839.7 1123.5,854.0 1124,848.2 1124.5,859.3 1125,841.1 1125.5,858.6 1126,855.1 1126.5,864.6 1127,847.8 1127.5,855.5 1128,840.8 1128.5,857.9 1129,851.4 1129.5,859.9 1130,859.7 1130.5,869.8 1131,846.0 1131.5,865.8 1132,857.0 1132.5,859.7 1133,838.9 1133.5,849.1 1134,844.8 1134.5,857.3 1135,843.8 1135.5,866.6 1136,857.0 1136.5,859.6 1137,845.1 1137.5,859.1 1138,832.3 1138.5,837.7 1139,824.4 1139.5,831.4 1140,821.4 1140.5,830.9 1141,817.7 1141.5,829.8 1142,817.1 1142.5,837.7 1143,812.3 1143.5,813.8 1144,802.6 1144.5,805.3 1145,799.2 1145.5,801.1 1146,797.5 1146.5,795.9 1147,791.0 1147.5,792.0 1148,789.1 1148.5,794.7 1149,793.3 1149.5,794.0 1150,795.8 1150.5,798.0 1151,788.9 1151.5,795.9 1152,791.3 1152.5,792.1 1153,785.1 1153.5,788.7 1154,785.4 1154.5,784.8 1155,782.7 1155.5,783.9 1156,782.8 1156.5,779.7 1157,771.6 1157.5,776.6 1158,774.2 1158.5,777.0 1159,771.2 1159.5,769.5 1160,768.7 1160.5,769.9 1161,769.3 1161.5,768.8 1162,761.5 1162.5,767.6 1163,765.7 1163.5,761.8 1164,763.7 1164.5,760.5 1165,763.3 1165.5,760.9 1166,763.5 1166.5,761.1 1167,760.0 1167.5,760.7 1168,760.7 1168.5,758.0 1169,758.8 1169.5,758.0 1170,758.2 1170.5,755.7 1171,757.8 1171.5,753.2 1172,752.2 1172.5,749.3 1173,751.7 1173.5,749.5 1174,747.4 1174.5,749.0 1175,749.5 1175.5,748.6 1176,742.8 1176.5,744.5 1177,744.1 1177.5,740.7 1178,742.6 1178.5,747.0 1179,741.1 1179.5,742.3 1180,740.1 1180.5,738.3 1181,731.3 1181.5,738.7 1182,736.0 1182.5,739.1 1183,736.0 1183.5,731.8 1184,733.7 1184.5,731.3 1185,729.4 1185.5,734.8 1186,731.2 1186.5,728.8 1187,734.1 1187.5,726.2 1188,727.7 1188.5,731.4 1189,725.6 1189.5,727.3 1190,728.2 1190.5,722.9 1191,725.9 1191.5,718.8 1192,720.8 1192.5,722.3 1193,722.0 1193.5,721.1 1194,721.2 1194.5,717.3 1195,719.1 1195.5,714.7 1196,720.8 1196.5,720.7 1197,716.3 1197.5,721.3 1198,718.8 1198.5,721.0 1199,722.1 1199.5,719.2 1200,713.4 1200.5,711.4 1201,721.0 1201.5,716.1 1202,715.5 1202.5,718.1 1203,716.2 1203.5,715.7 1204,715.7 1204.5,718.3 1205,716.8 1205.5,709.9 1206,712.7 1206.5,716.1 1207,709.9 1207.5,709.5 1208,713.9 1208.5,713.5 1209,716.4 1209.5,714.3 1210,712.8 1210.5,712.5 1211,710.0 1211.5,708.5 1212,714.6 1212.5,714.4 1213,714.3 1213.5,714.0 1214,712.5 1214.5,714.9 1215,710.5 1215.5,716.0 1216,713.8 1216.5,712.6 1217,712.6 1217.5,721.6 1218,716.1 1218.5,711.7 1219,709.7 1219.5,708.5 1220,708.8 1220.5,710.1 1221,709.7 1221.5,711.7 1222,716.6 1222.5,710.6 1223,711.9 1223.5,710.3 1224,706.0 1224.5,713.7 1225,713.2 1225.5,710.9 1226,709.6 1226.5,707.1 1227,704.5 1227.5,711.9 1228,706.7 1228.5,709.4 1229,710.0 1229.5,709.6 1230,700.9 1230.5,706.2 1231,712.3 1231.5,701.0 1232,706.3 1232.5,707.8 1233,709.0 1233.5,708.0 1234,703.7 1234.5,704.7 1235,706.5 1235.5,700.4 1236,710.9 1236.5,701.2 1237,709.2 1237.5,708.7 1238,706.9 1238.5,708.8 1239,707.5 1239.5,707.6 1240,702.5 1240.5,710.6 1241,700.6 1241.5,705.1 1242,697.9 1242.5,701.1 1243,708.8 1243.5,704.4 1244,703.2 1244.5,706.5 1245,705.1 1245.5,704.4 1246,706.7 1246.5,698.2 1247,702.8 1247.5,702.8 1248,698.9 1248.5,705.7 1249,706.0 1249.5,707.4 1250,700.9 1250.5,700.4 1251,703.4 1251.5,705.5 1252,702.5 1252.5,703.6 1253,703.6 1253.5,701.2 1254,699.8 1254.5,705.3 1255,701.7 1255.5,700.0 1256,702.9 1256.5,702.7 1257,699.9 1257.5,696.7 1258,701.3 1258.5,705.3 1259,703.1 1259.5,701.1 1260,707.2 1260.5,703.4 1261,704.1 1261.5,701.2 1262,697.5 1262.5,707.4 1263,703.2 1263.5,704.5 1264,706.4 1264.5,700.1 1265,702.5 1265.5,698.4 1266,702.5 1266.5,703.5 1267,701.3 1267.5,698.3 1268,703.6 1268.5,702.8 1269,706.0 1269.5,702.3 1270,699.7 1270.5,698.4 1271,699.5 1271.5,703.1 1272,701.4" fill="none" stroke="#c81414" stroke-width="1.35" stroke-linejoin="round" shape-rendering="crispEdges"/>
<polyline points="65,684.0 65.5,685.8 66,679.9 66.5,681.5 67,680.5 67.5,681.6 68,678.7 68.5,679.4 69,678.7 69.5,684.3 70,681.4 70.5,684.9 71,682.3 71.5,687.2 72,685.9 72.5,686.9 73,684.0 73.5,684.5 74,683.9 74.5,687.3 75,683.9 75.5,682.2 76,677.2 76.5,679.8 77,681.2 77.5,685.8 78,687.2 78.5,692.6 79,690.6 79.5,691.9 80,688.1 80.5,690.7 81,688.9 81.5,691.1 82,687.8 82.5,690.7 83,682.9 83.5,685.6 84,683.4 84.5,688.7 85,685.6 85.5,690.0 86,688.0 86.5,690.4 87,686.8 87.5,687.6 88,679.3 88.5,678.8 89,676.3 89.5,679.1 90,678.9 90.5,682.6 91,682.4 91.5,685.2 92,684.3 92.5,686.0 93,683.2 93.5,684.3 94,680.8 94.5,683.2 95,678.3 95.5,678.1 96,670.1 96.5,672.7 97,670.4 97.5,671.0 98,665.5 98.5,663.3 99,652.3 99.5,651.5 100,642.8 100.5,643.6 101,651.8 101.5,665.3 102,667.4 102.5,675.6 103,680.2 103.5,690.2 104,694.3 104.5,699.7 105,696.8 105.5,702.1 106,699.5 106.5,701.9 107,700.7 107.5,703.1 108,700.9 108.5,707.9 109,707.2 109.5,715.1 110,715.4 110.5,720.8 111,718.3 111.5,720.6 112,716.2 112.5,717.3 113,711.9 113.5,710.3 114,701.1 114.5,700.0 115,696.1 115.5,694.3 116,689.9 116.5,690.5 117,692.6 117.5,699.8 118,700.1 118.5,706.2 119,707.9 119.5,711.9 120,710.5 120.5,712.5 121,710.2 121.5,714.4 122,713.1 122.5,716.5 123,709.9 123.5,713.2 124,710.2 124.5,712.0 125,708.9 125.5,712.0 126,706.8 126.5,713.1 127,710.1 127.5,714.9 128,709.9 128.5,712.2 129,709.5 129.5,713.4 130,709.6 130.5,712.1 131,707.9 131.5,713.8 132,711.6 132.5,720.2 133,718.0 133.5,722.6 134,713.2 134.5,712.4 135,702.5 135.5,699.1 136,688.7 136.5,689.1 137,694.0 137.5,709.8 138,717.0 138.5,731.4 139,740.4 139.5,756.2 140,764.1 140.5,775.6 141,780.6 141.5,782.8 142,778.0 142.5,773.9 143,769.2 143.5,766.1 144,756.3 144.5,755.0 145,746.7 145.5,744.0 146,741.1 146.5,744.4 147,742.7 147.5,743.4 148,738.5 148.5,744.3 149,742.0 149.5,743.4 150,742.5 150.5,747.7 151,740.8 151.5,740.6 152,736.2 152.5,735.1 153,725.8 153.5,719.9 154,706.2 154.5,697.0 155,683.7 155.5,673.0 156,654.1 156.5,640.6 157,623.7 157.5,626.7 158,637.5 158.5,653.4 159,662.6 159.5,675.2 160,679.5 160.5,688.8 161,687.6 161.5,692.4 162,681.0 162.5,685.8 163,684.4 163.5,689.2 164,681.5 164.5,690.2 165,682.6 165.5,687.7 166,682.8 166.5,689.9 167,675.0 167.5,670.7 168,658.5 168.5,655.8 169,648.1 169.5,644.1 170,628.9 170.5,621.3 171,606.8 171.5,601.3 172,580.5 172.5,573.2 173,580.2 173.5,599.3 174,599.3 174.5,600.7 175,609.0 175.5,621.4 176,626.2 176.5,619.3 177,595.9 177.5,582.3 178,582.6 178.5,601.3 179,586.3 179.5,594.6 180,607.5 180.5,627.0 181,639.0 181.5,651.4 182,630.7 182.5,632.4 183,638.1 183.5,650.5 184,657.1 184.5,674.8 185,692.0 185.5,713.7 186,728.5 186.5,747.9 187,765.3 187.5,776.4 188,760.1 188.5,741.9 189,709.7 189.5,697.5 190,671.2 190.5,661.2 191,645.2 191.5,637.9 192,616.4 192.5,606.0 193,584.8 193.5,573.4 194,550.0 194.5,550.3 195,528.4 195.5,520.5 196,497.7 196.5,492.0 197,476.7 197.5,466.8 198,449.1 198.5,436.8 199,418.7 199.5,411.7 200,392.4 200.5,379.7 201,362.7 201.5,351.2 202,333.0 202.5,324.5 203,300.0 203.5,298.9 204,267.8 204.5,268.2 205,255.1 205.5,245.5 206,224.4 206.5,247.9 207,314.7 207.5,384.6 208,450.4 208.5,524.7 209,579.7 209.5,649.7 210,691.4 210.5,745.0 211,735.2 211.5,738.0 212,735.9 212.5,742.8 213,736.2 213.5,749.2 214,742.3 214.5,754.3 215,735.9 215.5,750.3 216,742.7 216.5,744.2 217,720.9 217.5,716.7 218,692.0 218.5,717.6 219,693.9 219.5,681.1 220,657.6 220.5,645.0 221,627.8 221.5,648.8 222,652.1 222.5,673.3 223,673.2 223.5,690.6 224,684.8 224.5,704.5 225,707.6 225.5,721.7 226,719.9 226.5,730.1 227,726.5 227.5,736.3 228,732.8 228.5,742.2 229,751.0 229.5,762.8 230,768.3 230.5,790.5 231,786.6 231.5,780.8 232,748.1 232.5,735.4 233,703.9 233.5,690.1 234,680.8 234.5,704.6 235,696.7 235.5,705.9 236,706.3 236.5,722.3 237,718.5 237.5,726.5 238,722.4 238.5,736.0 239,719.7 239.5,715.6 240,692.7 240.5,692.2 241,667.3 241.5,659.7 242,652.6 242.5,681.7 243,671.3 243.5,696.9 244,670.1 244.5,673.3 245,667.6 245.5,688.7 246,681.4 246.5,695.8 247,697.3 247.5,717.7 248,711.3 248.5,727.8 249,717.7 249.5,739.0 250,720.2 250.5,744.8 251,728.3 251.5,744.9 252,733.7 252.5,745.6 253,743.4 253.5,757.5 254,740.4 254.5,753.3 255,742.3 255.5,745.2 256,735.0 256.5,734.2 257,721.6 257.5,713.7 258,714.4 258.5,730.6 259,720.6 259.5,727.3 260,717.1 260.5,719.2 261,702.8 261.5,714.1 262,699.5 262.5,719.8 263,718.9 263.5,730.2 264,716.6 264.5,731.0 265,726.8 265.5,720.0 266,679.8 266.5,675.0 267,638.0 267.5,652.9 268,664.4 268.5,685.2 269,686.9 269.5,707.3 270,708.2 270.5,721.3 271,720.1 271.5,732.2 272,732.4 272.5,736.4 273,715.3 273.5,717.6 274,681.3 274.5,676.8 275,653.0 275.5,644.7 276,617.7 276.5,634.5 277,650.1 277.5,681.8 278,676.7 278.5,707.8 279,699.9 279.5,701.8 280,690.3 280.5,712.3 281,699.5 281.5,722.1 282,715.6 282.5,723.8 283,714.5 283.5,730.1 284,731.1 284.5,736.7 285,737.5 285.5,743.3 286,733.6 286.5,737.0 287,710.5 287.5,711.1 288,686.2 288.5,676.4 289,633.9 289.5,629.7 290,595.6 290.5,601.5 291,615.1 291.5,642.8 292,649.0 292.5,674.5 293,679.9 293.5,703.6 294,709.8 294.5,726.6 295,728.6 295.5,744.2 296,737.5 296.5,755.3 297,740.0 297.5,755.9 298,745.7 298.5,763.4 299,747.9 299.5,737.3 300,707.6 300.5,709.0 301,667.7 301.5,655.8 302,630.3 302.5,623.7 303,631.8 303.5,659.1 304,656.2 304.5,655.7 305,648.5 305.5,693.6 306,720.8 306.5,764.7 307,758.5 307.5,768.8 308,759.6 308.5,766.0 309,743.6 309.5,754.4 310,732.6 310.5,749.0 311,745.9 311.5,755.9 312,717.6 312.5,727.3 313,699.5 313.5,688.6 314,662.1 314.5,683.1 315,683.8 315.5,710.5 316,716.9 316.5,749.7 317,708.5 317.5,706.5 318,679.9 318.5,679.2 319,677.2 319.5,693.4 320,698.1 320.5,711.5 321,707.1 321.5,723.1 322,715.2 322.5,741.4 323,718.9 323.5,711.6 324,698.8 324.5,750.2 325,740.5 325.5,785.2 326,779.5 326.5,807.4 327,773.0 327.5,771.2 328,735.8 328.5,720.4 329,697.4 329.5,695.7 330,683.3 330.5,715.2 331,718.1 331.5,733.6 332,726.5 332.5,744.1 333,746.6 333.5,762.2 334,759.7 334.5,777.7 335,746.4 335.5,759.3 336,729.0 336.5,718.4 337,694.9 337.5,704.0 338,691.2 338.5,715.3 339,711.0 339.5,730.7 340,706.2 340.5,711.1 341,673.2 341.5,668.9 342,630.9 342.5,644.7 343,653.2 343.5,684.5 344,684.4 344.5,719.3 345,718.2 345.5,754.0 346,757.7 346.5,781.4 347,787.1 347.5,814.2 348,804.5 348.5,813.3 349,786.0 349.5,779.9 350,750.3 350.5,747.5 351,703.0 351.5,716.4 352,719.9 352.5,766.9 353,743.4 353.5,738.8 354,726.2 354.5,725.6 355,692.5 355.5,694.2 356,687.6 356.5,727.3 357,726.3 357.5,745.0 358,745.8 358.5,771.4 359,763.5 359.5,774.1 360,776.1 360.5,788.8 361,776.6 361.5,803.2 362,768.7 362.5,768.9 363,711.3 363.5,690.8 364,653.3 364.5,641.4 365,645.2 365.5,677.7 366,692.5 366.5,715.6 367,729.6 367.5,747.2 368,745.4 368.5,789.1 369,748.7 369.5,779.7 370,770.7 370.5,782.7 371,753.6 371.5,758.9 372,739.0 372.5,744.1 373,719.5 373.5,714.6 374,696.4 374.5,734.2 375,726.8 375.5,760.1 376,756.8 376.5,776.9 377,774.0 377.5,795.0 378,780.5 378.5,798.2 379,784.9 379.5,784.9 380,755.3 380.5,741.9 381,714.4 381.5,696.4 382,670.2 382.5,661.4 383,654.5 383.5,687.7 384,704.5 384.5,744.2 385,741.1 385.5,761.3 386,749.3 386.5,752.0 387,751.2 387.5,764.9 388,761.4 388.5,789.0 389,758.6 389.5,769.9 390,737.5 390.5,724.5 391,697.7 391.5,696.0 392,678.9 392.5,708.8 393,723.7 393.5,745.1 394,739.3 394.5,769.7 395,768.7 395.5,788.7 396,744.2 396.5,712.0 397,714.7 397.5,733.6 398,733.4 398.5,728.7 399,698.7 399.5,694.7 400,695.7 400.5,734.9 401,735.5 401.5,760.5 402,765.5 402.5,778.3 403,776.7 403.5,792.8 404,751.5 404.5,770.0 405,739.1 405.5,748.8 406,726.5 406.5,749.2 407,749.0 407.5,747.0 408,723.0 408.5,709.0 409,683.3 409.5,673.8 410,681.8 410.5,709.1 411,719.8 411.5,752.5 412,741.9 412.5,770.3 413,755.2 413.5,748.6 414,717.0 414.5,717.2 415,677.5 415.5,713.7 416,707.5 416.5,729.2 417,726.2 417.5,752.5 418,751.5 418.5,773.4 419,773.1 419.5,806.3 420,799.5 420.5,809.2 421,787.1 421.5,793.9 422,769.5 422.5,766.8 423,741.0 423.5,738.2 424,714.2 424.5,710.1 425,694.7 425.5,732.5 426,728.0 426.5,774.9 427,760.1 427.5,779.4 428,773.9 428.5,794.4 429,787.4 429.5,795.5 430,781.9 430.5,801.3 431,788.9 431.5,798.3 432,793.5 432.5,796.0 433,784.6 433.5,800.9 434,803.4 434.5,823.9 435,805.1 435.5,827.5 436,803.9 436.5,810.0 437,790.9 437.5,793.8 438,759.6 438.5,756.4 439,729.8 439.5,730.8 440,705.1 440.5,720.3 441,731.2 441.5,763.8 442,716.1 442.5,701.9 443,663.0 443.5,671.2 444,677.3 444.5,707.6 445,703.9 445.5,753.7 446,726.9 446.5,757.0 447,759.6 447.5,784.1 448,769.3 448.5,772.1 449,735.4 449.5,746.9 450,735.6 450.5,738.2 451,723.4 451.5,745.8 452,746.9 452.5,760.1 453,764.3 453.5,787.2 454,770.5 454.5,784.5 455,780.9 455.5,810.2 456,786.4 456.5,798.2 457,786.9 457.5,801.6 458,796.1 458.5,805.1 459,784.8 459.5,797.5 460,792.1 460.5,807.9 461,792.9 461.5,804.7 462,789.0 462.5,801.7 463,787.9 463.5,796.7 464,790.1 464.5,791.2 465,782.5 465.5,806.4 466,758.6 466.5,764.3 467,744.8 467.5,773.2 468,769.4 468.5,777.0 469,769.2 469.5,776.2 470,766.9 470.5,780.5 471,773.6 471.5,781.9 472,771.8 472.5,797.2 473,781.6 473.5,792.2 474,780.3 474.5,792.0 475,788.8 475.5,798.0 476,793.7 476.5,801.7 477,783.3 477.5,782.3 478,769.2 478.5,771.2 479,738.8 479.5,743.2 480,714.7 480.5,739.9 481,733.3 481.5,748.6 482,723.6 482.5,710.1 483,709.3 483.5,746.6 484,741.9 484.5,781.8 485,763.0 485.5,763.1 486,745.3 486.5,754.6 487,738.6 487.5,751.6 488,746.5 488.5,766.1 489,767.4 489.5,774.4 490,769.8 490.5,788.5 491,776.6 491.5,793.4 492,779.1 492.5,804.0 493,783.6 493.5,812.4 494,811.1 494.5,823.6 495,812.1 495.5,816.6 496,786.4 496.5,769.8 497,744.1 497.5,732.3 498,699.5 498.5,691.7 499,653.1 499.5,647.7 500,652.0 500.5,681.7 501,679.7 501.5,699.9 502,710.1 502.5,730.2 503,732.0 503.5,749.4 504,749.8 504.5,763.5 505,760.1 505.5,785.7 506,772.9 506.5,761.1 507,736.8 507.5,723.5 508,686.1 508.5,718.4 509,707.3 509.5,743.2 510,759.1 510.5,779.8 511,772.0 511.5,790.6 512,764.3 512.5,797.7 513,784.1 513.5,793.0 514,774.6 514.5,787.6 515,773.3 515.5,775.7 516,758.4 516.5,744.8 517,721.6 517.5,718.9 518,718.0 518.5,754.5 519,747.4 519.5,779.6 520,760.5 520.5,758.2 521,723.8 521.5,748.6 522,738.0 522.5,733.0 523,713.4 523.5,704.6 524,684.0 524.5,676.1 525,634.0 525.5,644.0 526,609.9 526.5,599.6 527,571.8 527.5,597.3 528,594.4 528.5,647.0 529,664.1 529.5,689.5 530,697.9 530.5,733.0 531,737.4 531.5,758.7 532,771.7 532.5,785.0 533,784.1 533.5,815.0 534,789.5 534.5,805.0 535,778.5 535.5,803.8 536,780.5 536.5,809.7 537,814.5 537.5,848.4 538,842.8 538.5,835.7 539,811.4 539.5,812.3 540,772.3 540.5,798.3 541,777.9 541.5,787.7 542,777.5 542.5,787.8 543,769.1 543.5,766.7 544,741.7 544.5,754.5 545,715.5 545.5,736.4 546,741.9 546.5,758.8 547,761.0 547.5,779.1 548,763.3 548.5,786.2 549,772.7 549.5,786.6 550,771.0 550.5,771.5 551,738.1 551.5,749.6 552,732.0 552.5,754.3 553,756.6 553.5,780.3 554,781.7 554.5,792.6 555,773.1 555.5,768.5 556,743.5 556.5,737.4 557,698.3 557.5,707.1 558,710.6 558.5,738.4 559,726.1 559.5,745.0 560,750.1 560.5,770.2 561,765.9 561.5,780.8 562,781.3 562.5,794.9 563,785.3 563.5,792.7 564,782.5 564.5,780.6 565,765.4 565.5,761.7 566,740.4 566.5,764.2 567,756.1 567.5,774.6 568,752.0 568.5,770.6 569,771.3 569.5,786.4 570,768.8 570.5,802.6 571,787.0 571.5,778.0 572,753.4 572.5,743.5 573,712.3 573.5,693.4 574,676.7 574.5,709.6 575,703.6 575.5,738.1 576,743.2 576.5,764.3 577,764.5 577.5,777.0 578,772.0 578.5,795.2 579,780.4 579.5,797.7 580,793.6 580.5,806.6 581,804.0 581.5,808.3 582,800.8 582.5,806.3 583,797.7 583.5,813.2 584,800.7 584.5,802.2 585,776.4 585.5,787.3 586,760.7 586.5,758.9 587,744.9 587.5,761.4 588,763.3 588.5,780.4 589,778.3 589.5,799.3 590,775.9 590.5,798.3 591,773.6 591.5,787.6 592,773.0 592.5,805.7 593,793.6 593.5,794.1 594,779.2 594.5,772.6 595,744.2 595.5,736.1 596,717.7 596.5,740.9 597,747.5 597.5,770.6 598,747.3 598.5,783.4 599,780.5 599.5,801.3 600,799.8 600.5,814.3 601,809.9 601.5,826.6 602,813.9 602.5,821.1 603,808.0 603.5,823.4 604,801.7 604.5,810.5 605,781.8 605.5,786.6 606,761.1 606.5,758.1 607,734.2 607.5,752.3 608,725.0 608.5,715.3 609,716.5 609.5,741.0 610,750.1 610.5,764.7 611,765.9 611.5,785.4 612,766.2 612.5,755.5 613,740.8 613.5,770.3 614,763.3 614.5,799.5 615,803.8 615.5,799.1 616,745.3 616.5,765.2 617,730.5 617.5,731.3 618,691.6 618.5,698.3 619,679.2 619.5,705.5 620,709.2 620.5,743.0 621,735.6 621.5,744.7 622,734.6 622.5,765.0 623,757.3 623.5,771.0 624,759.7 624.5,767.9 625,735.8 625.5,768.4 626,762.0 626.5,775.0 627,736.7 627.5,766.1 628,721.5 628.5,722.2 629,705.3 629.5,725.7 630,732.4 630.5,751.4 631,749.7 631.5,767.5 632,766.9 632.5,794.5 633,759.5 633.5,760.6 634,744.0 634.5,763.2 635,753.1 635.5,785.6 636,772.2 636.5,795.4 637,792.7 637.5,809.9 638,794.9 638.5,817.2 639,825.2 639.5,847.2 640,842.5 640.5,828.3 641,799.5 641.5,784.0 642,749.3 642.5,747.5 643,728.2 643.5,725.6 644,699.4 644.5,707.6 645,660.6 645.5,656.5 646,623.4 646.5,619.3 647,592.8 647.5,580.8 648,549.4 648.5,545.8 649,504.9 649.5,521.3 650,458.7 650.5,461.4 651,427.9 651.5,416.2 652,383.9 652.5,424.2 653,426.9 653.5,466.2 654,465.8 654.5,490.0 655,496.1 655.5,530.2 656,537.8 656.5,572.7 657,584.9 657.5,613.4 658,618.4 658.5,673.7 659,649.6 659.5,674.3 660,688.2 660.5,703.9 661,697.2 661.5,692.4 662,650.2 662.5,693.9 663,707.4 663.5,724.8 664,721.1 664.5,739.2 665,743.4 665.5,758.3 666,750.5 666.5,757.5 667,730.2 667.5,740.6 668,708.5 668.5,701.8 669,681.2 669.5,675.8 670,676.2 670.5,699.4 671,688.6 671.5,702.1 672,708.6 672.5,723.4 673,713.6 673.5,732.1 674,733.2 674.5,749.9 675,750.5 675.5,775.5 676,773.3 676.5,801.9 677,780.4 677.5,774.9 678,752.3 678.5,756.8 679,730.5 679.5,747.5 680,728.0 680.5,758.9 681,747.2 681.5,757.8 682,745.0 682.5,747.9 683,734.9 683.5,729.9 684,709.4 684.5,714.5 685,695.1 685.5,696.1 686,660.9 686.5,664.3 687,631.9 687.5,668.9 688,679.1 688.5,700.7 689,709.0 689.5,729.5 690,717.8 690.5,740.8 691,740.0 691.5,751.6 692,747.7 692.5,750.8 693,731.5 693.5,726.1 694,711.3 694.5,708.0 695,689.5 695.5,684.1 696,670.0 696.5,680.9 697,684.4 697.5,695.5 698,688.3 698.5,714.4 699,703.0 699.5,714.6 700,697.1 700.5,698.4 701,684.5 701.5,695.6 702,692.3 702.5,712.3 703,704.6 703.5,729.6 704,722.1 704.5,737.2 705,742.5 705.5,734.9 706,700.4 706.5,687.3 707,657.3 707.5,677.3 708,701.8 708.5,750.8 709,788.3 709.5,840.5 710,874.0 710.5,847.4 711,793.8 711.5,754.3 712,700.7 712.5,669.4 713,624.9 713.5,615.4 714,595.3 714.5,591.2 715,558.5 715.5,542.4 716,520.4 716.5,505.2 717,467.4 717.5,458.0 718,430.5 718.5,418.1 719,390.8 719.5,378.2 720,349.1 720.5,369.0 721,376.5 721.5,420.2 722,432.3 722.5,472.5 723,485.8 723.5,517.1 724,536.0 724.5,572.1 725,582.3 725.5,611.8 726,625.1 726.5,666.4 727,676.2 727.5,714.2 728,716.1 728.5,747.8 729,745.7 729.5,760.8 730,731.9 730.5,749.2 731,723.3 731.5,726.0 732,699.4 732.5,694.8 733,671.1 733.5,669.8 734,649.1 734.5,667.9 735,667.0 735.5,691.6 736,699.8 736.5,719.3 737,720.4 737.5,741.2 738,741.3 738.5,761.1 739,764.7 739.5,783.2 740,780.6 740.5,785.2 741,760.0 741.5,758.7 742,741.0 742.5,729.3 743,700.2 743.5,693.1 744,668.6 744.5,693.5 745,698.3 745.5,718.4 746,721.8 746.5,744.7 747,750.2 747.5,764.0 748,766.3 748.5,774.8 749,769.1 749.5,786.9 750,783.9 750.5,798.1 751,786.9 751.5,800.4 752,789.3 752.5,786.3 753,776.2 753.5,782.3 754,781.0 754.5,789.8 755,785.0 755.5,796.5 756,791.1 756.5,797.2 757,795.4 757.5,801.5 758,798.0 758.5,802.9 759,792.4 759.5,804.1 760,788.2 760.5,800.2 761,799.0 761.5,797.8 762,779.9 762.5,766.3 763,743.6 763.5,727.7 764,696.6 764.5,714.4 765,735.4 765.5,758.4 766,771.1 766.5,790.3 767,795.5 767.5,808.5 768,798.1 768.5,803.4 769,802.7 769.5,811.0 770,792.9 770.5,793.0 771,773.0 771.5,764.9 772,747.0 772.5,738.0 773,717.4 773.5,727.2 774,735.7 774.5,756.9 775,761.9 775.5,777.9 776,782.4 776.5,800.1 777,790.8 777.5,809.0 778,805.2 778.5,812.8 779,803.4 779.5,813.5 780,808.9 780.5,813.2 781,797.4 781.5,809.1 782,797.0 782.5,803.1 783,791.0 783.5,792.7 784,788.0 784.5,785.4 785,789.6 785.5,797.3 786,794.7 786.5,803.8 787,804.4 787.5,813.9 788,811.7 788.5,816.9 789,808.9 789.5,817.1 790,808.5 790.5,817.0 791,807.4 791.5,809.2 792,800.4 792.5,802.1 793,791.7 793.5,799.9 794,792.2 794.5,783.6 795,768.3 795.5,762.6 796,754.8 796.5,770.5 797,769.9 797.5,782.2 798,782.0 798.5,793.3 799,793.0 799.5,799.1 800,797.8 800.5,806.3 801,798.8 801.5,796.7 802,790.3 802.5,799.5 803,796.0 803.5,802.3 804,796.1 804.5,811.3 805,807.4 805.5,814.2 806,808.7 806.5,818.3 807,815.1 807.5,827.4 808,815.6 808.5,822.3 809,817.6 809.5,819.5 810,809.5 810.5,809.6 811,801.8 811.5,795.7 812,778.1 812.5,775.1 813,760.8 813.5,778.9 814,782.0 814.5,795.4 815,799.1 815.5,811.7 816,813.0 816.5,823.4 817,820.9 817.5,825.7 818,818.2 818.5,827.4 819,822.9 819.5,825.5 820,823.9 820.5,829.6 821,817.5 821.5,821.8 822,810.5 822.5,808.3 823,795.7 823.5,789.9 824,774.7 824.5,786.7 825,789.7 825.5,801.2 826,800.3 826.5,815.4 827,811.2 827.5,819.3 828,817.1 828.5,819.7 829,795.1 829.5,790.5 830,769.1 830.5,762.6 831,767.8 831.5,779.2 832,784.1 832.5,794.5 833,796.1 833.5,799.8 834,787.1 834.5,786.9 835,788.6 835.5,796.9 836,798.1 836.5,810.6 837,808.0 837.5,815.9 838,817.5 838.5,830.3 839,823.1 839.5,833.5 840,816.9 840.5,818.8 841,803.6 841.5,791.2 842,772.0 842.5,760.5 843,743.8 843.5,762.6 844,771.2 844.5,789.4 845,795.3 845.5,810.2 846,810.7 846.5,824.1 847,822.4 847.5,831.4 848,823.1 848.5,819.3 849,812.8 849.5,808.5 850,804.1 850.5,815.6 851,812.9 851.5,822.1 852,819.5 852.5,832.8 853,825.8 853.5,834.1 854,834.4 854.5,837.8 855,836.0 855.5,841.6 856,836.1 856.5,842.0 857,830.0 857.5,836.0 858,825.1 858.5,831.7 859,817.9 859.5,818.4 860,814.1 860.5,818.6 861,812.0 861.5,821.4 862,817.4 862.5,821.1 863,817.3 863.5,820.8 864,815.7 864.5,816.5 865,810.2 865.5,819.8 866,808.9 866.5,813.4 867,809.2 867.5,814.7 868,804.6 868.5,806.0 869,800.0 869.5,799.9 870,793.7 870.5,795.8 871,787.9 871.5,788.7 872,779.1 872.5,789.6 873,775.6 873.5,780.2 874,771.6 874.5,771.9 875,752.1 875.5,765.9 876,743.4 876.5,742.0 877,721.8 877.5,709.1 878,687.1 878.5,713.2 879,715.6 879.5,728.9 880,740.5 880.5,766.7 881,754.0 881.5,779.1 882,747.0 882.5,785.3 883,759.4 883.5,782.4 884,753.3 884.5,773.2 885,724.5 885.5,720.4 886,712.9 886.5,731.6 887,688.1 887.5,671.0 888,634.8 888.5,608.6 889,565.0 889.5,653.7 890,657.0 890.5,703.3 891,716.9 891.5,714.6 892,685.6 892.5,710.0 893,662.5 893.5,706.8 894,711.8 894.5,730.9 895,728.2 895.5,752.7 896,727.5 896.5,751.4 897,733.5 897.5,776.7 898,755.0 898.5,795.6 899,796.9 899.5,813.3 900,807.5 900.5,820.9 901,794.2 901.5,782.3 902,725.9 902.5,717.3 903,665.6 903.5,665.4 904,605.5 904.5,662.6 905,663.1 905.5,692.2 906,689.1 906.5,740.5 907,746.9 907.5,782.5 908,786.9 908.5,839.9 909,829.2 909.5,835.3 910,821.0 910.5,820.4 911,794.5 911.5,803.3 912,782.3 912.5,786.3 913,749.8 913.5,761.2 914,739.2 914.5,761.5 915,707.4 915.5,748.1 916,734.2 916.5,756.4 917,749.8 917.5,775.0 918,738.8 918.5,716.2 919,672.6 919.5,693.9 920,703.3 920.5,739.2 921,729.5 921.5,734.2 922,706.9 922.5,697.1 923,669.2 923.5,689.5 924,687.7 924.5,726.7 925,723.5 925.5,749.7 926,731.3 926.5,763.8 927,759.2 927.5,773.3 928,764.7 928.5,788.9 929,769.7 929.5,781.1 930,765.9 930.5,790.2 931,742.0 931.5,728.3 932,691.0 932.5,666.4 933,626.8 933.5,624.6 934,587.1 934.5,590.7 935,546.4 935.5,559.9 936,531.0 936.5,511.3 937,478.0 937.5,486.3 938,423.5 938.5,417.3 939,377.7 939.5,367.4 940,350.2 940.5,400.8 941,407.0 941.5,461.0 942,439.3 942.5,499.7 943,501.1 943.5,558.9 944,543.5 944.5,587.3 945,602.9 945.5,647.1 946,643.5 946.5,674.9 947,680.5 947.5,714.4 948,703.4 948.5,731.7 949,725.9 949.5,732.4 950,697.4 950.5,711.4 951,675.2 951.5,688.9 952,660.6 952.5,681.9 953,666.8 953.5,706.3 954,686.1 954.5,741.6 955,695.9 955.5,719.9 956,708.3 956.5,730.4 957,727.1 957.5,741.0 958,733.1 958.5,747.3 959,738.5 959.5,742.7 960,741.5 960.5,742.8 961,737.4 961.5,743.0 962,739.2 962.5,754.3 963,764.1 963.5,784.4 964,790.0 964.5,803.2 965,785.8 965.5,783.4 966,770.3 966.5,773.8 967,754.3 967.5,757.3 968,750.9 968.5,754.2 969,751.0 969.5,752.5 970,744.9 970.5,759.1 971,764.7 971.5,776.8 972,765.8 972.5,778.8 973,784.6 973.5,778.1 974,740.6 974.5,729.2 975,655.7 975.5,637.4 976,620.9 976.5,677.6 977,681.2 977.5,717.2 978,735.5 978.5,756.2 979,735.3 979.5,739.4 980,723.5 980.5,752.5 981,752.0 981.5,778.4 982,768.7 982.5,782.8 983,766.1 983.5,771.1 984,759.3 984.5,791.8 985,779.9 985.5,803.3 986,795.6 986.5,794.3 987,773.2 987.5,773.6 988,731.5 988.5,737.8 989,662.9 989.5,692.2 990,661.9 990.5,684.6 991,690.7 991.5,725.6 992,747.4 992.5,788.5 993,806.3 993.5,850.6 994,856.3 994.5,864.0 995,837.7 995.5,856.0 996,823.3 996.5,836.5 997,800.0 997.5,815.5 998,772.1 998.5,760.2 999,726.2 999.5,712.8 1000,670.1 1000.5,715.6 1001,730.3 1001.5,763.5 1002,761.1 1002.5,735.8 1003,684.0 1003.5,672.2 1004,667.2 1004.5,684.6 1005,686.2 1005.5,710.0 1006,717.9 1006.5,733.2 1007,735.3 1007.5,756.9 1008,746.8 1008.5,787.9 1009,764.1 1009.5,802.2 1010,799.0 1010.5,817.2 1011,793.2 1011.5,847.6 1012,826.4 1012.5,838.6 1013,805.7 1013.5,781.5 1014,740.2 1014.5,719.7 1015,688.7 1015.5,684.3 1016,678.9 1016.5,696.7 1017,693.1 1017.5,696.2 1018,676.7 1018.5,720.4 1019,716.0 1019.5,771.2 1020,772.9 1020.5,817.1 1021,816.3 1021.5,843.1 1022,812.9 1022.5,821.8 1023,814.6 1023.5,823.6 1024,792.7 1024.5,783.6 1025,737.8 1025.5,738.0 1026,706.4 1026.5,689.4 1027,646.6 1027.5,634.9 1028,592.3 1028.5,570.5 1029,531.9 1029.5,517.2 1030,475.8 1030.5,523.1 1031,544.6 1031.5,598.8 1032,624.1 1032.5,663.4 1033,691.3 1033.5,748.5 1034,745.8 1034.5,786.5 1035,795.6 1035.5,813.0 1036,806.6 1036.5,828.8 1037,800.1 1037.5,793.2 1038,754.5 1038.5,748.0 1039,711.3 1039.5,714.0 1040,658.8 1040.5,662.4 1041,678.7 1041.5,739.7 1042,743.4 1042.5,789.4 1043,773.0 1043.5,772.1 1044,721.1 1044.5,731.0 1045,701.3 1045.5,698.8 1046,679.1 1046.5,704.0 1047,747.7 1047.5,775.9 1048,752.5 1048.5,794.7 1049,732.4 1049.5,722.2 1050,697.4 1050.5,727.3 1051,724.1 1051.5,745.6 1052,729.2 1052.5,767.9 1053,765.9 1053.5,786.9 1054,769.0 1054.5,764.6 1055,740.8 1055.5,744.5 1056,712.6 1056.5,738.5 1057,757.9 1057.5,810.4 1058,774.9 1058.5,803.0 1059,787.5 1059.5,788.9 1060,736.3 1060.5,723.9 1061,754.2 1061.5,799.7 1062,804.3 1062.5,815.6 1063,797.8 1063.5,804.3 1064,787.8 1064.5,785.9 1065,770.9 1065.5,783.9 1066,759.6 1066.5,783.2 1067,736.9 1067.5,756.0 1068,722.6 1068.5,724.6 1069,684.0 1069.5,678.4 1070,674.4 1070.5,703.6 1071,699.9 1071.5,731.9 1072,724.6 1072.5,754.2 1073,752.2 1073.5,782.1 1074,789.1 1074.5,822.8 1075,814.6 1075.5,840.2 1076,797.0 1076.5,806.5 1077,761.9 1077.5,753.6 1078,720.7 1078.5,705.5 1079,694.4 1079.5,723.4 1080,702.8 1080.5,701.4 1081,670.4 1081.5,688.3 1082,659.7 1082.5,691.7 1083,680.9 1083.5,706.3 1084,706.4 1084.5,734.4 1085,710.4 1085.5,723.1 1086,717.6 1086.5,735.1 1087,730.5 1087.5,748.4 1088,731.4 1088.5,738.7 1089,727.9 1089.5,733.0 1090,724.5 1090.5,731.5 1091,726.4 1091.5,731.2 1092,731.7 1092.5,738.4 1093,738.8 1093.5,744.6 1094,740.5 1094.5,748.7 1095,746.1 1095.5,749.2 1096,742.0 1096.5,753.2 1097,757.3 1097.5,769.4 1098,768.2 1098.5,779.9 1099,783.3 1099.5,781.5 1100,774.0 1100.5,775.0 1101,768.2 1101.5,761.4 1102,748.2 1102.5,742.9 1103,736.5 1103.5,731.7 1104,731.6 1104.5,738.7 1105,744.4 1105.5,754.0 1106,749.1 1106.5,758.3 1107,758.5 1107.5,763.4 1108,763.5 1108.5,765.6 1109,760.4 1109.5,761.5 1110,751.1 1110.5,748.8 1111,743.8 1111.5,744.0 1112,746.5 1112.5,755.4 1113,757.8 1113.5,766.1 1114,765.3 1114.5,783.9 1115,772.3 1115.5,783.4 1116,775.4 1116.5,789.2 1117,788.4 1117.5,805.0 1118,798.6 1118.5,805.5 1119,796.5 1119.5,809.3 1120,803.3 1120.5,810.8 1121,787.9 1121.5,817.8 1122,811.9 1122.5,817.7 1123,814.6 1123.5,827.9 1124,810.6 1124.5,829.0 1125,824.0 1125.5,828.0 1126,812.0 1126.5,833.2 1127,813.4 1127.5,847.9 1128,825.1 1128.5,850.1 1129,818.3 1129.5,836.8 1130,833.5 1130.5,842.1 1131,828.6 1131.5,838.0 1132,825.2 1132.5,833.4 1133,820.3 1133.5,830.4 1134,821.5 1134.5,829.9 1135,813.1 1135.5,818.6 1136,801.5 1136.5,812.2 1137,800.1 1137.5,808.8 1138,800.4 1138.5,819.5 1139,784.8 1139.5,795.6 1140,793.9 1140.5,805.6 1141,787.9 1141.5,800.4 1142,782.5 1142.5,789.1 1143,779.5 1143.5,778.7 1144,766.5 1144.5,771.3 1145,769.7 1145.5,773.1 1146,763.5 1146.5,766.4 1147,762.8 1147.5,761.1 1148,763.0 1148.5,762.1 1149,762.0 1149.5,767.1 1150,766.5 1150.5,764.3 1151,767.8 1151.5,769.7 1152,767.8 1152.5,761.1 1153,760.4 1153.5,759.2 1154,756.5 1154.5,753.9 1155,750.5 1155.5,747.4 1156,744.4 1156.5,743.0 1157,738.7 1157.5,738.4 1158,737.8 1158.5,731.7 1159,731.6 1159.5,728.3 1160,725.4 1160.5,720.6 1161,723.1 1161.5,725.5 1162,722.7 1162.5,726.0 1163,718.0 1163.5,716.7 1164,725.7 1164.5,722.8 1165,717.3 1165.5,719.6 1166,721.4 1166.5,718.0 1167,720.8 1167.5,719.7 1168,715.9 1168.5,714.9 1169,717.6 1169.5,710.6 1170,714.7 1170.5,717.1 1171,715.5 1171.5,714.2 1172,710.6 1172.5,712.9 1173,718.4 1173.5,710.5 1174,714.2 1174.5,714.5 1175,709.7 1175.5,712.5 1176,711.4 1176.5,711.4 1177,715.8 1177.5,713.8 1178,716.7 1178.5,711.9 1179,712.9 1179.5,710.3 1180,711.2 1180.5,713.3 1181,710.0 1181.5,711.3 1182,713.8 1182.5,706.6 1183,711.4 1183.5,710.3 1184,708.1 1184.5,715.4 1185,713.2 1185.5,708.0 1186,714.5 1186.5,709.9 1187,711.8 1187.5,708.7 1188,713.7 1188.5,711.7 1189,712.3 1189.5,710.2 1190,710.4 1190.5,711.1 1191,710.5 1191.5,710.0 1192,707.9 1192.5,710.0 1193,709.5 1193.5,708.4 1194,712.9 1194.5,710.7 1195,705.0 1195.5,713.6 1196,707.9 1196.5,703.7 1197,707.5 1197.5,706.3 1198,710.4 1198.5,711.0 1199,707.2 1199.5,711.1 1200,716.5 1200.5,712.7 1201,708.8 1201.5,712.2 1202,711.3 1202.5,714.0 1203,716.9 1203.5,707.5 1204,708.9 1204.5,710.5 1205,711.8 1205.5,707.6 1206,710.1 1206.5,709.0 1207,705.1 1207.5,705.7 1208,705.8 1208.5,710.2 1209,705.5 1209.5,711.4 1210,706.5 1210.5,708.9 1211,709.5 1211.5,710.7 1212,709.0 1212.5,710.0 1213,705.8 1213.5,705.1 1214,706.9 1214.5,708.8 1215,713.1 1215.5,708.0 1216,708.8 1216.5,709.3 1217,711.2 1217.5,706.6 1218,708.3 1218.5,710.7 1219,708.5 1219.5,710.0 1220,704.8 1220.5,708.2 1221,707.5 1221.5,708.6 1222,706.4 1222.5,709.0 1223,713.9 1223.5,702.1 1224,708.5 1224.5,710.5 1225,708.9 1225.5,710.8 1226,702.9 1226.5,710.3 1227,703.1 1227.5,711.2 1228,704.0 1228.5,708.1 1229,705.6 1229.5,705.8 1230,709.6 1230.5,706.7 1231,704.4 1231.5,706.3 1232,708.8 1232.5,705.3 1233,705.0 1233.5,708.6 1234,705.0 1234.5,710.6 1235,706.8 1235.5,710.8 1236,704.4 1236.5,705.7 1237,703.1 1237.5,705.6 1238,706.3 1238.5,707.5 1239,707.2 1239.5,703.0 1240,704.2 1240.5,704.8 1241,711.7 1241.5,701.2 1242,706.5 1242.5,704.4 1243,706.1 1243.5,707.7 1244,706.7 1244.5,707.2 1245,710.9 1245.5,706.6 1246,705.0 1246.5,706.4 1247,707.5 1247.5,704.5 1248,708.6 1248.5,705.5 1249,703.4 1249.5,704.0 1250,706.5 1250.5,707.6 1251,710.0 1251.5,705.4 1252,707.5 1252.5,707.1 1253,709.6 1253.5,707.9 1254,708.1 1254.5,703.6 1255,705.9 1255.5,707.1 1256,705.2 1256.5,706.1 1257,708.1 1257.5,702.5 1258,705.1 1258.5,704.9 1259,707.4 1259.5,708.1 1260,704.2 1260.5,707.4 1261,708.7 1261.5,708.9 1262,701.5 1262.5,704.2 1263,704.2 1263.5,703.2 1264,706.2 1264.5,706.6 1265,707.1 1265.5,702.3 1266,710.0 1266.5,700.9 1267,700.5 1267.5,701.7 1268,703.1 1268.5,706.1 1269,708.6 1269.5,704.9 1270,706.9 1270.5,704.0 1271,707.0 1271.5,708.9 1272,707.9" fill="none" stroke="#28dc28" stroke-width="1.35" stroke-linejoin="round" shape-rendering="crispEdges"/>
<polyline points="65,643.2 65.5,645.6 66,645.8 66.5,650.9 67,648.2 67.5,653.6 68,651.5 68.5,653.1 69,651.4 69.5,651.5 70,652.4 70.5,654.5 71,656.2 71.5,658.7 72,657.8 72.5,659.6 73,654.7 73.5,654.9 74,652.2 74.5,653.0 75,647.8 75.5,651.8 76,651.3 76.5,654.8 77,652.7 77.5,659.1 78,658.5 78.5,661.5 79,661.9 79.5,666.8 80,663.7 80.5,663.7 81,660.3 81.5,660.2 82,657.3 82.5,658.8 83,656.6 83.5,663.9 84,658.8 84.5,663.2 85,662.2 85.5,664.5 86,664.4 86.5,668.2 87,669.1 87.5,673.7 88,668.2 88.5,668.7 89,657.3 89.5,657.4 90,653.6 90.5,652.4 91,652.0 91.5,656.2 92,653.0 92.5,657.6 93,653.8 93.5,656.4 94,653.3 94.5,655.8 95,654.5 95.5,658.5 96,654.4 96.5,655.3 97,646.2 97.5,644.4 98,631.5 98.5,626.1 99,620.9 99.5,629.9 100,635.3 100.5,643.7 101,649.5 101.5,658.4 102,660.6 102.5,669.6 103,673.5 103.5,681.4 104,682.7 104.5,687.2 105,683.1 105.5,689.6 106,680.7 106.5,685.2 107,678.0 107.5,682.0 108,676.6 108.5,686.4 109,681.8 109.5,691.3 110,694.9 110.5,702.0 111,699.1 111.5,698.2 112,694.3 112.5,695.3 113,685.8 113.5,690.8 114,690.0 114.5,693.4 115,687.4 115.5,690.4 116,684.0 116.5,684.5 117,687.0 117.5,690.2 118,691.0 118.5,694.2 119,695.2 119.5,697.4 120,696.4 120.5,698.4 121,696.6 121.5,695.8 122,692.1 122.5,695.9 123,691.1 123.5,699.0 124,700.3 124.5,703.5 125,700.3 125.5,706.2 126,702.8 126.5,706.6 127,701.6 127.5,707.9 128,706.2 128.5,709.6 129,708.8 129.5,709.9 130,704.5 130.5,703.1 131,697.3 131.5,697.9 132,693.9 132.5,705.2 133,705.8 133.5,714.2 134,715.9 134.5,719.8 135,721.4 135.5,716.6 136,702.3 136.5,692.9 137,683.7 137.5,685.6 138,697.4 138.5,712.7 139,723.3 139.5,736.0 140,741.9 140.5,759.1 141,765.4 141.5,772.1 142,770.5 142.5,774.0 143,765.3 143.5,767.3 144,759.9 144.5,759.2 145,754.2 145.5,757.6 146,750.8 146.5,751.9 147,747.7 147.5,750.9 148,749.7 148.5,752.5 149,747.9 149.5,751.5 150,742.7 150.5,739.5 151,736.5 151.5,737.9 152,735.8 152.5,737.7 153,736.0 153.5,735.6 154,731.6 154.5,731.2 155,723.6 155.5,719.8 156,710.1 156.5,704.3 157,689.5 157.5,683.0 158,672.1 158.5,668.8 159,667.2 159.5,679.2 160,681.8 160.5,689.5 161,690.0 161.5,694.8 162,693.4 162.5,698.2 163,693.8 163.5,699.8 164,690.4 164.5,699.8 165,694.7 165.5,703.0 166,690.7 166.5,682.6 167,665.7 167.5,654.2 168,636.9 168.5,631.0 169,619.2 169.5,612.3 170,615.2 170.5,607.6 171,594.5 171.5,590.6 172,579.3 172.5,597.1 173,588.2 173.5,603.1 174,603.5 174.5,617.4 175,619.1 175.5,626.0 176,606.8 176.5,595.2 177,577.7 177.5,584.9 178,587.6 178.5,609.8 179,614.8 179.5,630.0 180,634.6 180.5,647.2 181,654.3 181.5,670.1 182,663.3 182.5,659.4 183,645.4 183.5,647.7 184,657.1 184.5,676.1 185,694.2 185.5,720.0 186,735.4 186.5,764.2 187,774.4 187.5,774.4 188,755.3 188.5,750.4 189,731.4 189.5,727.8 190,712.3 190.5,718.1 191,711.1 191.5,717.5 192,713.9 192.5,719.2 193,709.4 193.5,690.6 194,664.5 194.5,650.0 195,622.6 195.5,611.0 196,584.0 196.5,567.9 197,542.1 197.5,532.8 198,505.2 198.5,488.2 199,466.2 199.5,451.1 200,420.5 200.5,406.6 201,381.6 201.5,366.7 202,344.4 202.5,334.8 203,302.4 203.5,292.0 204,269.4 204.5,259.3 205,233.5 205.5,227.9 206,199.8 206.5,269.7 207,341.8 207.5,425.8 208,479.5 208.5,564.5 209,624.1 209.5,688.1 210,728.0 210.5,736.2 211,727.9 211.5,738.3 212,733.3 212.5,741.8 213,728.9 213.5,741.5 214,720.5 214.5,743.8 215,737.6 215.5,740.9 216,741.2 216.5,743.5 217,740.8 217.5,742.1 218,736.5 218.5,754.1 219,739.0 219.5,736.1 220,723.2 220.5,717.8 221,694.9 221.5,701.0 222,687.3 222.5,681.2 223,646.9 223.5,637.0 224,643.0 224.5,671.8 225,679.4 225.5,701.6 226,700.2 226.5,725.0 227,715.3 227.5,730.2 228,708.2 228.5,715.5 229,701.7 229.5,710.9 230,695.0 230.5,703.1 231,701.6 231.5,709.7 232,718.1 232.5,747.1 233,739.3 233.5,737.5 234,728.0 234.5,736.1 235,722.7 235.5,723.8 236,720.1 236.5,733.5 237,731.4 237.5,746.6 238,733.7 238.5,728.3 239,705.8 239.5,698.0 240,672.5 240.5,655.7 241,628.3 241.5,618.6 242,612.1 242.5,642.1 243,653.6 243.5,675.7 244,658.7 244.5,651.8 245,627.9 245.5,640.7 246,651.1 246.5,678.9 247,679.2 247.5,697.6 248,697.5 248.5,718.8 249,713.6 249.5,731.9 250,731.2 250.5,738.8 251,735.2 251.5,740.9 252,738.3 252.5,742.2 253,728.3 253.5,739.4 254,733.4 254.5,747.6 255,740.0 255.5,744.4 256,742.5 256.5,743.6 257,731.8 257.5,740.7 258,728.4 258.5,733.8 259,728.5 259.5,733.1 260,722.0 260.5,720.5 261,703.1 261.5,714.1 262,714.2 262.5,723.8 263,719.4 263.5,728.6 264,715.7 264.5,718.9 265,702.0 265.5,695.9 266,668.2 266.5,675.5 267,642.5 267.5,620.3 268,616.7 268.5,637.0 269,636.6 269.5,668.5 270,678.6 270.5,691.4 271,693.2 271.5,711.2 272,711.5 272.5,730.7 273,719.6 273.5,732.0 274,702.6 274.5,692.2 275,667.2 275.5,660.5 276,621.0 276.5,604.8 277,622.8 277.5,656.8 278,654.3 278.5,682.1 279,685.5 279.5,673.4 280,633.5 280.5,663.9 281,661.2 281.5,692.9 282,683.6 282.5,702.8 283,704.3 283.5,715.5 284,716.1 284.5,743.9 285,710.8 285.5,723.5 286,678.0 286.5,688.3 287,690.3 287.5,714.5 288,705.5 288.5,694.1 289,673.9 289.5,663.0 290,629.9 290.5,633.5 291,635.5 291.5,657.4 292,661.8 292.5,682.3 293,688.2 293.5,709.9 294,709.1 294.5,718.0 295,693.6 295.5,702.2 296,703.0 296.5,722.6 297,724.9 297.5,732.6 298,712.5 298.5,700.0 299,681.7 299.5,673.7 300,642.5 300.5,635.6 301,625.8 301.5,646.3 302,651.6 302.5,633.0 303,626.6 303.5,656.3 304,649.4 304.5,636.8 305,603.9 305.5,599.4 306,626.8 306.5,696.7 307,734.6 307.5,769.7 308,764.5 308.5,779.7 309,764.3 309.5,761.2 310,729.6 310.5,737.1 311,735.5 311.5,751.9 312,746.2 312.5,767.8 313,746.5 313.5,771.4 314,739.0 314.5,750.6 315,711.0 315.5,688.7 316,639.2 316.5,647.5 317,644.1 317.5,674.7 318,673.6 318.5,698.2 319,684.5 319.5,705.5 320,705.5 320.5,722.0 321,709.1 321.5,738.3 322,725.1 322.5,724.3 323,710.1 323.5,727.3 324,725.0 324.5,755.3 325,751.5 325.5,764.8 326,744.8 326.5,745.1 327,708.6 327.5,703.5 328,674.9 328.5,657.8 329,634.7 329.5,663.9 330,648.3 330.5,684.2 331,677.3 331.5,693.5 332,694.2 332.5,712.5 333,698.9 333.5,724.8 334,725.6 334.5,742.3 335,731.7 335.5,739.9 336,712.5 336.5,694.4 337,666.2 337.5,670.3 338,658.0 338.5,681.2 339,681.7 339.5,700.9 340,695.9 340.5,708.9 341,708.8 341.5,726.3 342,700.5 342.5,698.0 343,691.3 343.5,717.7 344,708.9 344.5,733.4 345,718.9 345.5,755.0 346,746.9 346.5,763.5 347,755.4 347.5,764.2 348,756.8 348.5,777.8 349,760.6 349.5,800.9 350,773.5 350.5,783.0 351,767.7 351.5,782.2 352,749.8 352.5,750.0 353,734.1 353.5,734.8 354,697.2 354.5,701.7 355,685.0 355.5,668.2 356,676.2 356.5,712.1 357,715.0 357.5,743.2 358,740.3 358.5,753.3 359,755.0 359.5,767.2 360,750.8 360.5,773.0 361,769.8 361.5,775.5 362,724.5 362.5,737.0 363,693.1 363.5,697.5 364,674.0 364.5,697.1 365,701.4 365.5,722.3 366,724.9 366.5,747.5 367,742.1 367.5,774.0 368,749.8 368.5,743.2 369,724.0 369.5,717.2 370,699.1 370.5,759.5 371,724.9 371.5,722.1 372,693.9 372.5,683.2 373,694.5 373.5,731.6 374,724.4 374.5,754.7 375,759.1 375.5,771.8 376,762.9 376.5,794.2 377,785.9 377.5,795.9 378,772.7 378.5,787.6 379,771.9 379.5,754.7 380,721.5 380.5,692.9 381,643.9 381.5,632.2 382,619.0 382.5,675.5 383,675.2 383.5,696.2 384,701.7 384.5,726.2 385,728.6 385.5,741.2 386,746.9 386.5,772.5 387,758.7 387.5,780.2 388,770.2 388.5,782.8 389,772.6 389.5,787.7 390,766.0 390.5,757.7 391,734.4 391.5,721.0 392,698.8 392.5,687.2 393,664.7 393.5,681.5 394,684.2 394.5,710.2 395,711.1 395.5,729.7 396,730.6 396.5,751.8 397,737.0 397.5,737.3 398,707.0 398.5,698.5 399,676.0 399.5,666.4 400,669.1 400.5,706.3 401,715.2 401.5,730.3 402,736.4 402.5,762.4 403,742.9 403.5,772.0 404,756.3 404.5,765.8 405,744.4 405.5,738.1 406,711.8 406.5,729.8 407,732.9 407.5,758.6 408,761.0 408.5,754.6 409,707.2 409.5,700.2 410,659.1 410.5,640.2 411,626.2 411.5,655.3 412,660.7 412.5,702.3 413,695.4 413.5,697.8 414,658.5 414.5,676.5 415,684.4 415.5,712.3 416,691.7 416.5,731.3 417,720.9 417.5,748.9 418,739.3 418.5,765.5 419,758.6 419.5,772.7 420,769.9 420.5,782.6 421,779.0 421.5,787.6 422,760.9 422.5,755.3 423,725.3 423.5,710.3 424,675.3 424.5,686.0 425,683.8 425.5,721.9 426,718.6 426.5,743.0 427,748.1 427.5,765.2 428,766.9 428.5,781.7 429,777.6 429.5,795.9 430,784.7 430.5,789.3 431,785.3 431.5,795.3 432,787.6 432.5,809.8 433,776.4 433.5,799.7 434,787.3 434.5,794.2 435,775.7 435.5,794.6 436,789.6 436.5,797.7 437,775.5 437.5,786.1 438,749.3 438.5,757.7 439,731.0 439.5,751.6 440,723.2 440.5,721.1 441,705.2 441.5,717.4 442,696.4 442.5,685.7 443,689.6 443.5,723.2 444,720.6 444.5,763.4 445,761.2 445.5,785.9 446,773.9 446.5,791.0 447,784.9 447.5,785.0 448,763.4 448.5,754.7 449,735.6 449.5,739.9 450,706.5 450.5,720.6 451,719.7 451.5,760.0 452,750.7 452.5,774.8 453,773.0 453.5,794.4 454,784.2 454.5,794.4 455,778.9 455.5,795.3 456,786.7 456.5,792.9 457,790.3 457.5,799.0 458,787.5 458.5,795.3 459,790.6 459.5,795.4 460,784.8 460.5,797.3 461,785.7 461.5,802.1 462,792.2 462.5,796.4 463,777.9 463.5,780.7 464,758.8 464.5,766.1 465,745.8 465.5,748.5 466,715.9 466.5,752.0 467,730.8 467.5,744.5 468,744.7 468.5,761.1 469,741.8 469.5,762.0 470,761.1 470.5,774.0 471,771.3 471.5,782.1 472,765.9 472.5,790.4 473,782.3 473.5,806.4 474,785.0 474.5,798.0 475,780.9 475.5,801.6 476,785.4 476.5,797.7 477,789.1 477.5,795.5 478,794.5 478.5,804.3 479,773.1 479.5,770.7 480,743.3 480.5,766.5 481,743.2 481.5,769.6 482,729.2 482.5,717.0 483,692.0 483.5,715.5 484,703.0 484.5,731.6 485,729.8 485.5,737.5 486,724.1 486.5,725.1 487,722.2 487.5,742.4 488,738.5 488.5,756.4 489,745.8 489.5,770.2 490,761.6 490.5,784.0 491,775.1 491.5,792.3 492,775.8 492.5,790.3 493,776.2 493.5,795.3 494,762.6 494.5,788.8 495,747.6 495.5,742.8 496,721.5 496.5,733.7 497,717.7 497.5,714.8 498,687.7 498.5,708.1 499,708.5 499.5,732.1 500,724.8 500.5,748.8 501,745.7 501.5,763.0 502,757.1 502.5,772.0 503,763.5 503.5,780.0 504,760.5 504.5,779.8 505,741.6 505.5,743.6 506,716.9 506.5,709.8 507,669.3 507.5,686.6 508,687.1 508.5,722.2 509,730.4 509.5,752.9 510,722.2 510.5,757.6 511,753.7 511.5,777.0 512,761.9 512.5,775.6 513,776.8 513.5,788.9 514,778.1 514.5,778.8 515,740.6 515.5,732.8 516,681.8 516.5,712.2 517,702.7 517.5,747.5 518,736.5 518.5,763.8 519,767.2 519.5,796.6 520,782.6 520.5,787.0 521,783.6 521.5,795.0 522,765.2 522.5,767.8 523,740.8 523.5,738.1 524,699.6 524.5,701.6 525,658.1 525.5,658.0 526,620.0 526.5,597.1 527,565.6 527.5,582.0 528,583.3 528.5,629.5 529,634.1 529.5,663.9 530,639.2 530.5,687.0 531,698.4 531.5,723.0 532,728.4 532.5,757.9 533,757.0 533.5,777.0 534,781.9 534.5,797.1 535,787.6 535.5,797.8 536,780.1 536.5,774.3 537,747.9 537.5,749.4 538,729.6 538.5,755.5 539,745.2 539.5,764.0 540,767.3 540.5,782.8 541,774.7 541.5,800.4 542,763.4 542.5,774.8 543,752.2 543.5,752.4 544,727.2 544.5,757.6 545,740.3 545.5,758.2 546,731.8 546.5,717.7 547,669.8 547.5,716.0 548,709.5 548.5,743.0 549,741.8 549.5,779.9 550,778.5 550.5,787.8 551,771.9 551.5,791.5 552,779.7 552.5,801.0 553,787.9 553.5,806.7 554,791.5 554.5,803.0 555,786.4 555.5,793.7 556,783.6 556.5,794.2 557,750.2 557.5,726.0 558,684.9 558.5,672.4 559,640.4 559.5,695.1 560,684.3 560.5,732.9 561,719.3 561.5,754.4 562,738.6 562.5,712.9 563,668.1 563.5,715.1 564,711.8 564.5,751.6 565,718.9 565.5,712.3 566,697.4 566.5,708.4 567,695.4 567.5,723.9 568,719.8 568.5,747.1 569,734.3 569.5,755.6 570,742.0 570.5,763.3 571,739.3 571.5,734.4 572,698.7 572.5,699.4 573,648.6 573.5,655.6 574,668.3 574.5,695.4 575,698.1 575.5,731.9 576,735.0 576.5,760.7 577,753.4 577.5,772.4 578,760.7 578.5,766.5 579,745.8 579.5,773.8 580,780.0 580.5,793.5 581,790.7 581.5,821.8 582,806.0 582.5,805.6 583,798.6 583.5,806.2 584,790.0 584.5,796.3 585,770.2 585.5,798.2 586,767.3 586.5,766.0 587,747.2 587.5,768.7 588,762.2 588.5,791.1 589,772.7 589.5,754.7 590,718.0 590.5,708.7 591,723.1 591.5,758.3 592,755.4 592.5,778.5 593,775.8 593.5,774.8 594,759.7 594.5,764.9 595,737.7 595.5,749.5 596,735.5 596.5,764.4 597,754.0 597.5,769.7 598,772.5 598.5,781.3 599,777.1 599.5,793.1 600,793.4 600.5,805.0 601,798.4 601.5,813.5 602,801.7 602.5,809.4 603,792.4 603.5,830.3 604,806.5 604.5,815.9 605,808.4 605.5,806.3 606,777.9 606.5,783.0 607,771.0 607.5,760.5 608,741.4 608.5,745.7 609,722.1 609.5,709.2 610,688.0 610.5,714.0 611,722.6 611.5,744.3 612,746.4 612.5,771.2 613,758.6 613.5,785.8 614,780.4 614.5,799.8 615,769.2 615.5,766.6 616,746.0 616.5,745.2 617,710.2 617.5,720.6 618,687.4 618.5,710.1 619,702.8 619.5,752.1 620,740.5 620.5,786.7 621,776.8 621.5,795.7 622,793.2 622.5,803.5 623,778.2 623.5,785.0 624,752.3 624.5,746.3 625,715.4 625.5,721.1 626,692.2 626.5,713.6 627,727.6 627.5,749.0 628,725.8 628.5,719.6 629,686.6 629.5,694.2 630,687.4 630.5,708.3 631,696.3 631.5,734.0 632,721.9 632.5,743.4 633,742.1 633.5,775.4 634,772.0 634.5,812.7 635,817.8 635.5,823.1 636,795.4 636.5,803.2 637,794.6 637.5,805.1 638,797.6 638.5,807.4 639,803.2 639.5,808.0 640,771.6 640.5,788.6 641,758.1 641.5,753.4 642,723.3 642.5,723.4 643,690.8 643.5,704.1 644,657.3 644.5,662.0 645,615.9 645.5,629.5 646,587.6 646.5,569.8 647,539.3 647.5,530.9 648,486.5 648.5,489.4 649,456.1 649.5,455.2 650,409.1 650.5,397.4 651,367.4 651.5,391.6 652,395.0 652.5,428.1 653,439.6 653.5,463.6 654,479.6 654.5,506.5 655,512.1 655.5,552.2 656,557.8 656.5,582.3 657,593.1 657.5,620.6 658,628.1 658.5,661.0 659,660.2 659.5,685.6 660,686.1 660.5,722.2 661,713.1 661.5,726.2 662,682.1 662.5,683.2 663,671.3 663.5,698.9 664,703.8 664.5,739.0 665,733.5 665.5,759.2 666,757.3 666.5,767.2 667,759.2 667.5,757.0 668,732.6 668.5,720.3 669,698.8 669.5,686.5 670,660.0 670.5,678.9 671,682.8 671.5,698.8 672,701.2 672.5,723.0 673,717.3 673.5,725.8 674,729.4 674.5,740.6 675,733.9 675.5,743.2 676,739.7 676.5,755.5 677,742.4 677.5,753.4 678,735.9 678.5,745.9 679,735.8 679.5,748.5 680,742.9 680.5,751.8 681,746.7 681.5,752.7 682,742.5 682.5,751.0 683,742.4 683.5,740.1 684,717.1 684.5,712.1 685,687.4 685.5,676.8 686,651.4 686.5,646.6 687,644.7 687.5,666.2 688,679.0 688.5,696.5 689,695.2 689.5,718.9 690,712.7 690.5,727.7 691,729.2 691.5,736.1 692,726.6 692.5,737.2 693,730.7 693.5,739.0 694,730.9 694.5,735.1 695,711.8 695.5,704.1 696,683.3 696.5,680.4 697,651.9 697.5,663.9 698,652.9 698.5,675.4 699,678.8 699.5,695.2 700,670.8 700.5,662.9 701,651.4 701.5,654.5 702,650.9 702.5,674.2 703,668.0 703.5,687.5 704,688.2 704.5,707.1 705,706.8 705.5,720.9 706,704.9 706.5,713.3 707,681.6 707.5,695.5 708,699.6 708.5,741.8 709,752.8 709.5,775.0 710,764.0 710.5,773.9 711,721.0 711.5,689.6 712,643.7 712.5,613.1 713,578.6 713.5,574.5 714,525.3 714.5,518.2 715,487.4 715.5,471.9 716,446.2 716.5,436.0 717,405.4 717.5,397.6 718,366.1 718.5,350.9 719,313.8 719.5,331.2 720,351.3 720.5,383.7 721,405.4 721.5,448.7 722,459.1 722.5,500.5 723,516.9 723.5,554.6 724,568.7 724.5,602.0 725,621.2 725.5,652.9 726,665.0 726.5,694.5 727,705.8 727.5,738.7 728,743.1 728.5,743.6 729,727.0 729.5,723.4 730,703.2 730.5,700.5 731,685.4 731.5,682.4 732,683.1 732.5,692.4 733,697.3 733.5,711.3 734,708.8 734.5,732.6 735,724.6 735.5,743.5 736,737.7 736.5,754.2 737,753.0 737.5,769.0 738,761.7 738.5,780.6 739,772.9 739.5,782.9 740,778.2 740.5,780.8 741,760.1 741.5,759.0 742,722.1 742.5,727.9 743,701.1 743.5,690.1 744,661.9 744.5,652.2 745,665.0 745.5,693.8 746,701.5 746.5,723.8 747,727.9 747.5,746.2 748,747.4 748.5,769.8 749,768.0 749.5,774.7 750,768.7 750.5,778.2 751,776.8 751.5,784.2 752,784.0 752.5,789.8 753,785.8 753.5,793.5 754,789.3 754.5,792.5 755,789.7 755.5,798.4 756,792.3 756.5,803.7 757,794.1 757.5,795.6 758,787.1 758.5,799.1 759,788.9 759.5,784.6 760,764.8 760.5,755.8 761,730.1 761.5,721.1 762,690.7 762.5,680.1 763,694.0 763.5,712.4 764,716.6 764.5,735.0 765,740.5 765.5,757.2 766,748.4 766.5,756.0 767,755.3 767.5,772.1 768,766.6 768.5,782.2 769,777.9 769.5,792.1 770,782.4 770.5,789.6 771,774.4 771.5,772.3 772,754.2 772.5,741.7 773,733.0 773.5,753.2 774,746.6 774.5,761.0 775,765.0 775.5,773.4 776,777.8 776.5,789.6 777,788.5 777.5,794.1 778,794.1 778.5,801.4 779,793.9 779.5,806.6 780,798.1 780.5,800.0 781,792.5 781.5,796.4 782,791.1 782.5,796.3 783,782.8 783.5,792.9 784,795.6 784.5,809.4 785,811.6 785.5,820.1 786,808.0 786.5,814.5 787,803.2 787.5,805.1 788,799.9 788.5,804.4 789,793.6 789.5,788.8 790,783.3 790.5,778.5 791,771.3 791.5,782.5 792,775.9 792.5,783.8 793,788.9 793.5,795.4 794,793.4 794.5,786.1 795,771.4 795.5,759.3 796,735.4 796.5,748.4 797,756.7 797.5,769.2 798,774.5 798.5,786.8 799,792.0 799.5,809.5 800,810.1 800.5,821.6 801,812.4 801.5,804.9 802,787.5 802.5,780.8 803,765.6 803.5,762.0 804,765.7 804.5,779.7 805,779.8 805.5,795.4 806,793.6 806.5,800.6 807,801.2 807.5,806.5 808,805.8 808.5,810.3 809,799.3 809.5,803.4 810,789.5 810.5,790.9 811,776.0 811.5,778.5 812,759.7 812.5,770.3 813,777.1 813.5,786.2 814,789.5 814.5,802.9 815,802.9 815.5,814.5 816,804.4 816.5,818.0 817,813.3 817.5,823.7 818,814.5 818.5,820.6 819,819.9 819.5,826.3 820,814.3 820.5,811.0 821,800.6 821.5,799.3 822,784.5 822.5,784.7 823,771.9 823.5,784.1 824,777.9 824.5,795.3 825,793.3 825.5,803.1 826,807.7 826.5,813.1 827,815.8 827.5,819.3 828,812.4 828.5,799.1 829,781.2 829.5,772.6 830,740.8 830.5,754.2 831,759.6 831.5,776.7 832,779.3 832.5,800.1 833,785.6 833.5,786.8 834,783.4 834.5,797.9 835,790.9 835.5,808.1 836,805.8 836.5,811.8 837,812.7 837.5,821.7 838,819.7 838.5,824.3 839,817.2 839.5,826.1 840,815.8 840.5,808.3 841,789.4 841.5,782.2 842,763.7 842.5,753.9 843,732.9 843.5,724.6 844,732.8 844.5,756.0 845,760.4 845.5,774.5 846,778.4 846.5,790.3 847,794.3 847.5,807.5 848,804.6 848.5,816.2 849,807.2 849.5,798.6 850,784.7 850.5,784.2 851,788.7 851.5,803.6 852,807.0 852.5,815.9 853,820.1 853.5,829.2 854,824.5 854.5,834.4 855,830.2 855.5,833.1 856,831.4 856.5,833.4 857,825.0 857.5,827.3 858,814.7 858.5,814.8 859,801.9 859.5,804.4 860,790.1 860.5,801.3 861,790.2 861.5,799.9 862,795.7 862.5,807.7 863,801.2 863.5,811.7 864,803.8 864.5,811.5 865,803.4 865.5,810.4 866,799.7 866.5,807.4 867,795.9 867.5,805.0 868,797.2 868.5,800.8 869,794.3 869.5,797.4 870,789.8 870.5,788.3 871,783.8 871.5,787.5 872,774.8 872.5,781.7 873,771.5 873.5,774.6 874,770.9 874.5,773.5 875,763.9 875.5,767.3 876,744.7 876.5,755.0 877,729.4 877.5,735.0 878,707.6 878.5,719.0 879,703.9 879.5,724.8 880,729.3 880.5,752.6 881,738.6 881.5,756.4 882,744.9 882.5,761.2 883,753.3 883.5,776.7 884,760.1 884.5,798.0 885,762.9 885.5,767.4 886,739.6 886.5,725.5 887,694.2 887.5,710.6 888,660.4 888.5,697.9 889,718.7 889.5,763.1 890,734.7 890.5,745.0 891,691.4 891.5,690.8 892,635.5 892.5,639.1 893,583.9 893.5,617.5 894,647.2 894.5,679.6 895,687.3 895.5,732.2 896,713.0 896.5,770.0 897,754.1 897.5,776.4 898,777.2 898.5,796.8 899,777.7 899.5,833.2 900,824.7 900.5,831.2 901,804.8 901.5,808.4 902,747.8 902.5,741.0 903,707.9 903.5,688.7 904,669.6 904.5,724.6 905,722.3 905.5,737.6 906,691.9 906.5,717.4 907,706.7 907.5,744.6 908,738.3 908.5,763.2 909,754.6 909.5,772.9 910,774.6 910.5,783.2 911,785.0 911.5,798.6 912,797.2 912.5,799.4 913,777.1 913.5,779.3 914,763.0 914.5,732.5 915,719.8 915.5,747.4 916,739.7 916.5,759.1 917,756.9 917.5,785.5 918,776.7 918.5,804.3 919,788.0 919.5,797.9 920,780.6 920.5,773.3 921,743.6 921.5,734.4 922,706.0 922.5,697.5 923,634.1 923.5,660.4 924,658.7 924.5,709.9 925,700.1 925.5,727.4 926,717.4 926.5,742.9 927,741.6 927.5,776.4 928,773.8 928.5,821.3 929,822.1 929.5,829.0 930,796.6 930.5,782.3 931,737.4 931.5,755.1 932,716.0 932.5,712.3 933,664.4 933.5,667.9 934,624.7 934.5,613.6 935,582.0 935.5,569.0 936,543.8 936.5,533.1 937,492.9 937.5,490.6 938,457.1 938.5,449.5 939,420.6 939.5,404.7 940,356.0 940.5,360.6 941,319.7 941.5,364.9 942,351.0 942.5,395.4 943,414.1 943.5,446.3 944,458.8 944.5,494.2 945,493.3 945.5,538.7 946,516.5 946.5,552.2 947,560.2 947.5,597.2 948,575.0 948.5,643.3 949,639.4 949.5,658.5 950,679.2 950.5,686.5 951,653.0 951.5,674.6 952,667.6 952.5,690.6 953,670.0 953.5,712.4 954,697.0 954.5,716.8 955,715.5 955.5,731.2 956,707.3 956.5,745.1 957,733.2 957.5,746.2 958,749.3 958.5,776.4 959,765.6 959.5,758.7 960,740.0 960.5,732.0 961,725.2 961.5,727.5 962,726.5 962.5,736.8 963,737.5 963.5,763.5 964,774.2 964.5,787.9 965,780.0 965.5,782.3 966,769.3 966.5,768.1 967,757.5 967.5,760.6 968,753.7 968.5,753.6 969,745.7 969.5,743.6 970,739.2 970.5,745.4 971,748.8 971.5,755.2 972,756.8 972.5,764.7 973,743.3 973.5,768.6 974,764.3 974.5,774.8 975,727.3 975.5,735.9 976,671.1 976.5,651.4 977,599.1 977.5,597.9 978,616.9 978.5,661.0 979,669.4 979.5,710.8 980,697.2 980.5,703.0 981,645.4 981.5,719.1 982,714.5 982.5,734.3 983,721.4 983.5,767.8 984,763.0 984.5,787.5 985,765.4 985.5,801.3 986,794.3 986.5,825.2 987,813.3 987.5,793.5 988,752.7 988.5,735.2 989,680.3 989.5,702.3 990,724.9 990.5,749.6 991,750.0 991.5,840.5 992,816.9 992.5,849.7 993,846.4 993.5,900.5 994,912.9 994.5,908.9 995,862.9 995.5,854.5 996,829.2 996.5,831.8 997,800.3 997.5,811.1 998,787.2 998.5,779.9 999,742.1 999.5,732.1 1000,668.9 1000.5,654.8 1001,656.0 1001.5,694.0 1002,670.0 1002.5,727.0 1003,731.6 1003.5,747.2 1004,711.4 1004.5,715.8 1005,671.6 1005.5,673.1 1006,667.7 1006.5,685.4 1007,687.3 1007.5,733.0 1008,744.5 1008.5,786.5 1009,790.1 1009.5,855.2 1010,835.8 1010.5,859.8 1011,808.8 1011.5,797.1 1012,783.7 1012.5,782.8 1013,771.3 1013.5,787.5 1014,758.6 1014.5,760.4 1015,739.5 1015.5,727.2 1016,688.6 1016.5,701.5 1017,680.8 1017.5,695.6 1018,670.9 1018.5,724.8 1019,712.3 1019.5,749.3 1020,730.9 1020.5,790.7 1021,765.1 1021.5,801.9 1022,804.9 1022.5,813.1 1023,788.5 1023.5,816.7 1024,784.0 1024.5,796.5 1025,777.2 1025.5,770.9 1026,724.4 1026.5,710.2 1027,672.5 1027.5,665.4 1028,580.4 1028.5,563.9 1029,495.1 1029.5,480.5 1030,425.3 1030.5,477.5 1031,485.6 1031.5,529.8 1032,556.0 1032.5,595.1 1033,612.6 1033.5,655.4 1034,668.7 1034.5,713.7 1035,731.4 1035.5,770.9 1036,792.1 1036.5,816.1 1037,771.3 1037.5,740.8 1038,699.4 1038.5,683.1 1039,639.7 1039.5,633.2 1040,637.9 1040.5,685.7 1041,691.6 1041.5,717.6 1042,719.6 1042.5,725.0 1043,677.9 1043.5,678.2 1044,629.5 1044.5,618.7 1045,607.5 1045.5,663.0 1046,698.6 1046.5,750.7 1047,789.3 1047.5,826.7 1048,805.4 1048.5,801.9 1049,743.4 1049.5,729.9 1050,712.0 1050.5,739.6 1051,734.1 1051.5,763.0 1052,768.2 1052.5,797.2 1053,769.9 1053.5,778.2 1054,747.6 1054.5,746.9 1055,725.6 1055.5,730.2 1056,717.5 1056.5,740.8 1057,725.0 1057.5,753.1 1058,745.6 1058.5,723.3 1059,711.5 1059.5,750.0 1060,744.2 1060.5,804.5 1061,801.6 1061.5,808.7 1062,793.0 1062.5,814.5 1063,760.2 1063.5,750.8 1064,729.1 1064.5,732.1 1065,713.0 1065.5,731.1 1066,736.7 1066.5,745.5 1067,735.7 1067.5,724.7 1068,699.3 1068.5,696.9 1069,658.1 1069.5,692.5 1070,681.9 1070.5,743.6 1071,727.8 1071.5,770.5 1072,751.3 1072.5,791.2 1073,771.9 1073.5,813.4 1074,782.9 1074.5,813.0 1075,800.1 1075.5,810.3 1076,777.4 1076.5,773.4 1077,727.6 1077.5,721.5 1078,679.9 1078.5,698.0 1079,681.8 1079.5,619.6 1080,595.4 1080.5,594.5 1081,565.5 1081.5,569.8 1082,577.5 1082.5,599.4 1083,603.3 1083.5,642.0 1084,641.0 1084.5,664.6 1085,679.8 1085.5,715.7 1086,693.3 1086.5,714.6 1087,686.8 1087.5,703.3 1088,708.1 1088.5,717.5 1089,698.1 1089.5,722.7 1090,709.9 1090.5,711.6 1091,706.0 1091.5,715.5 1092,711.7 1092.5,722.8 1093,725.7 1093.5,732.8 1094,733.6 1094.5,741.8 1095,744.0 1095.5,752.8 1096,752.8 1096.5,759.3 1097,760.5 1097.5,763.5 1098,764.5 1098.5,767.3 1099,764.7 1099.5,763.1 1100,756.1 1100.5,760.3 1101,759.6 1101.5,766.8 1102,760.5 1102.5,757.8 1103,751.2 1103.5,748.4 1104,739.4 1104.5,742.8 1105,746.2 1105.5,750.4 1106,751.2 1106.5,759.0 1107,758.4 1107.5,764.8 1108,764.9 1108.5,767.4 1109,769.3 1109.5,776.5 1110,779.6 1110.5,783.2 1111,776.0 1111.5,770.8 1112,760.7 1112.5,757.3 1113,746.5 1113.5,758.0 1114,755.3 1114.5,762.4 1115,758.3 1115.5,771.6 1116,769.3 1116.5,794.1 1117,775.9 1117.5,795.9 1118,790.7 1118.5,804.8 1119,804.9 1119.5,816.3 1120,799.3 1120.5,825.6 1121,804.3 1121.5,818.0 1122,812.9 1122.5,823.0 1123,820.7 1123.5,827.2 1124,828.8 1124.5,833.4 1125,824.8 1125.5,838.5 1126,831.2 1126.5,840.7 1127,837.8 1127.5,844.4 1128,833.7 1128.5,843.9 1129,840.5 1129.5,842.9 1130,836.8 1130.5,849.4 1131,836.2 1131.5,844.7 1132,833.7 1132.5,840.1 1133,830.9 1133.5,839.4 1134,808.0 1134.5,833.6 1135,812.4 1135.5,829.1 1136,804.1 1136.5,818.0 1137,803.5 1137.5,808.5 1138,788.2 1138.5,805.2 1139,793.5 1139.5,798.9 1140,791.5 1140.5,796.0 1141,785.8 1141.5,790.1 1142,778.0 1142.5,786.9 1143,758.1 1143.5,775.1 1144,763.6 1144.5,764.9 1145,750.1 1145.5,752.6 1146,748.6 1146.5,748.3 1147,739.6 1147.5,747.0 1148,731.9 1148.5,736.7 1149,744.9 1149.5,737.8 1150,724.7 1150.5,736.3 1151,719.6 1151.5,714.9 1152,682.5 1152.5,711.0 1153,687.2 1153.5,706.2 1154,684.3 1154.5,700.4 1155,696.2 1155.5,675.6 1156,690.7 1156.5,670.0 1157,671.6 1157.5,672.2 1158,674.0 1158.5,676.0 1159,666.6 1159.5,670.6 1160,645.1 1160.5,660.5 1161,657.9 1161.5,643.4 1162,655.1 1162.5,650.3 1163,658.8 1163.5,649.0 1164,624.6 1164.5,657.8 1165,653.1 1165.5,651.5 1166,644.3 1166.5,640.3 1167,652.4 1167.5,641.9 1168,651.2 1168.5,633.2 1169,656.0 1169.5,656.1 1170,643.1 1170.5,647.3 1171,640.4 1171.5,659.3 1172,636.5 1172.5,644.4 1173,655.4 1173.5,645.9 1174,646.6 1174.5,644.4 1175,640.4 1175.5,640.0 1176,643.6 1176.5,641.6 1177,647.9 1177.5,645.8 1178,640.4 1178.5,651.6 1179,650.3 1179.5,640.3 1180,635.8 1180.5,637.2 1181,635.8 1181.5,630.6 1182,642.4 1182.5,644.9 1183,646.6 1183.5,639.4 1184,639.9 1184.5,643.2 1185,645.2 1185.5,642.1 1186,650.0 1186.5,653.4 1187,641.0 1187.5,635.9 1188,645.5 1188.5,638.5 1189,657.8 1189.5,644.9 1190,642.5 1190.5,655.7 1191,645.0 1191.5,631.6 1192,639.2 1192.5,643.2 1193,657.1 1193.5,647.3 1194,653.1 1194.5,639.6 1195,632.4 1195.5,652.6 1196,652.8 1196.5,631.9 1197,646.9 1197.5,648.6 1198,652.7 1198.5,644.3 1199,636.6 1199.5,623.7 1200,646.9 1200.5,653.3 1201,651.0 1201.5,644.3 1202,654.3 1202.5,641.0 1203,649.2 1203.5,658.7 1204,634.0 1204.5,645.5 1205,635.8 1205.5,645.2 1206,610.9 1206.5,647.7 1207,632.6 1207.5,639.4 1208,641.4 1208.5,646.5 1209,633.1 1209.5,636.0 1210,638.5 1210.5,632.8 1211,642.2 1211.5,643.3 1212,636.1 1212.5,634.4 1213,642.6 1213.5,643.7 1214,647.1 1214.5,640.1 1215,630.7 1215.5,640.6 1216,651.4 1216.5,647.4 1217,643.5 1217.5,648.3 1218,656.9 1218.5,635.7 1219,647.7 1219.5,629.6 1220,635.7 1220.5,642.9 1221,650.0 1221.5,638.5 1222,649.5 1222.5,640.9 1223,647.4 1223.5,629.8 1224,643.8 1224.5,643.0 1225,644.8 1225.5,653.1 1226,631.1 1226.5,639.7 1227,642.7 1227.5,647.6 1228,625.7 1228.5,641.1 1229,661.5 1229.5,638.3 1230,642.2 1230.5,644.9 1231,632.2 1231.5,646.0 1232,641.7 1232.5,636.7 1233,642.2 1233.5,639.3 1234,631.8 1234.5,634.0 1235,637.6 1235.5,655.2 1236,634.9 1236.5,643.2 1237,650.0 1237.5,653.8 1238,635.1 1238.5,644.3 1239,638.3 1239.5,630.0 1240,655.6 1240.5,642.7 1241,647.8 1241.5,635.0 1242,637.0 1242.5,636.0 1243,637.9 1243.5,647.7 1244,644.4 1244.5,639.2 1245,635.2 1245.5,642.4 1246,652.2 1246.5,645.0 1247,642.8 1247.5,638.5 1248,640.2 1248.5,637.4 1249,636.0 1249.5,637.5 1250,650.9 1250.5,641.3 1251,638.7 1251.5,650.5 1252,650.6 1252.5,655.6 1253,649.2 1253.5,638.2 1254,640.8 1254.5,647.5 1255,633.0 1255.5,654.3 1256,640.0 1256.5,652.0 1257,648.8 1257.5,647.4 1258,628.4 1258.5,637.1 1259,648.4 1259.5,650.0 1260,645.3 1260.5,643.8 1261,646.4 1261.5,635.5 1262,637.1 1262.5,639.4 1263,648.8 1263.5,638.5 1264,641.1 1264.5,631.3 1265,640.4 1265.5,649.6 1266,632.6 1266.5,634.6 1267,645.8 1267.5,634.8 1268,634.6 1268.5,653.4 1269,638.2 1269.5,644.8 1270,644.7 1270.5,646.6 1271,651.5 1271.5,632.8 1272,642.7" fill="none" stroke="#28e6e6" stroke-width="1.35" stroke-linejoin="round" shape-rendering="crispEdges"/>
<polyline points="65,696.0 65.5,700.7 66,700.4 66.5,704.4 67,701.0 67.5,701.4 68,696.9 68.5,697.3 69,694.1 69.5,698.6 70,698.7 70.5,701.3 71,700.3 71.5,703.1 72,701.9 72.5,704.1 73,701.9 73.5,705.2 74,702.5 74.5,705.6 75,702.5 75.5,702.8 76,697.9 76.5,700.2 77,698.3 77.5,700.7 78,700.4 78.5,703.7 79,701.5 79.5,704.3 80,700.0 80.5,706.4 81,705.2 81.5,705.9 82,704.0 82.5,704.0 83,702.9 83.5,707.2 84,704.4 84.5,708.6 85,705.0 85.5,705.6 86,700.1 86.5,704.0 87,698.7 87.5,700.1 88,696.3 88.5,696.3 89,692.0 89.5,689.4 90,688.6 90.5,694.4 91,693.6 91.5,697.0 92,696.4 92.5,696.5 93,692.6 93.5,692.3 94,689.4 94.5,692.9 95,689.9 95.5,690.0 96,683.7 96.5,680.8 97,672.6 97.5,670.1 98,665.6 98.5,664.5 99,653.7 99.5,667.0 100,670.7 100.5,684.7 101,689.3 101.5,700.0 102,699.7 102.5,709.0 103,713.6 103.5,720.3 104,719.2 104.5,723.4 105,719.9 105.5,719.7 106,715.3 106.5,715.9 107,711.9 107.5,713.7 108,716.3 108.5,722.3 109,724.7 109.5,730.1 110,728.7 110.5,732.5 111,727.2 111.5,728.9 112,726.2 112.5,724.7 113,720.4 113.5,717.4 114,710.1 114.5,709.6 115,705.8 115.5,706.7 116,707.9 116.5,714.5 117,712.3 117.5,718.9 118,717.4 118.5,721.2 119,717.2 119.5,722.8 120,720.0 120.5,721.6 121,720.5 121.5,723.6 122,722.2 122.5,727.7 123,725.9 123.5,729.4 124,728.6 124.5,733.1 125,726.2 125.5,729.9 126,725.3 126.5,730.8 127,727.7 127.5,729.3 128,726.8 128.5,730.5 129,726.2 129.5,725.8 130,717.4 130.5,718.4 131,714.6 131.5,718.6 132,715.6 132.5,722.2 133,724.4 133.5,734.4 134,730.1 134.5,739.5 135,735.4 135.5,737.5 136,720.7 136.5,720.3 137,706.7 137.5,700.0 138,691.5 138.5,686.0 139,681.4 139.5,704.7 140,721.9 140.5,745.8 141,754.0 141.5,763.1 142,762.8 142.5,764.5 143,762.2 143.5,764.9 144,763.8 144.5,765.9 145,759.8 145.5,763.7 146,760.5 146.5,766.2 147,764.6 147.5,770.7 148,766.7 148.5,765.7 149,756.9 149.5,757.5 150,748.0 150.5,753.0 151,749.6 151.5,753.0 152,739.4 152.5,734.4 153,712.4 153.5,705.3 154,683.4 154.5,672.4 155,653.1 155.5,637.2 156,632.2 156.5,655.1 157,668.1 157.5,685.6 158,694.5 158.5,709.1 159,714.2 159.5,717.6 160,711.8 160.5,710.8 161,707.4 161.5,708.3 162,706.7 162.5,709.2 163,708.1 163.5,715.5 164,706.2 164.5,710.7 165,705.9 165.5,706.8 166,695.2 166.5,692.9 167,674.0 167.5,657.1 168,627.5 168.5,606.4 169,580.7 169.5,592.6 170,597.2 170.5,612.7 171,596.9 171.5,590.3 172,572.7 172.5,563.8 173,549.7 173.5,553.8 174,568.7 174.5,600.7 175,567.6 175.5,541.2 176,550.8 176.5,573.5 177,583.3 177.5,602.9 178,600.8 178.5,617.8 179,603.6 179.5,600.8 180,604.3 180.5,623.8 181,627.0 181.5,642.6 182,650.7 182.5,668.3 183,656.0 183.5,649.7 184,642.3 184.5,658.5 185,672.8 185.5,696.9 186,714.3 186.5,741.9 187,763.9 187.5,793.8 188,795.5 188.5,779.7 189,760.8 189.5,747.5 190,732.3 190.5,727.3 191,719.3 191.5,720.9 192,720.8 192.5,723.0 193,722.2 193.5,730.1 194,721.1 194.5,728.9 195,727.2 195.5,725.8 196,723.9 196.5,717.0 197,686.2 197.5,672.9 198,643.8 198.5,629.6 199,588.5 199.5,576.9 200,545.7 200.5,532.0 201,497.2 201.5,485.8 202,459.5 202.5,444.3 203,416.3 203.5,398.3 204,368.9 204.5,349.7 205,321.6 205.5,306.1 206,271.0 206.5,250.7 207,244.9 207.5,319.2 208,381.5 208.5,456.3 209,507.0 209.5,576.7 210,623.7 210.5,686.7 211,725.5 211.5,751.8 212,742.9 212.5,758.8 213,756.1 213.5,761.3 214,754.9 214.5,766.7 215,757.7 215.5,768.3 216,759.4 216.5,763.9 217,748.2 217.5,756.5 218,734.1 218.5,735.1 219,716.8 219.5,716.2 220,694.5 220.5,694.2 221,696.6 221.5,717.9 222,709.3 222.5,736.8 223,731.2 223.5,749.3 224,740.1 224.5,745.4 225,741.9 225.5,755.8 226,748.2 226.5,764.2 227,750.7 227.5,757.5 228,744.6 228.5,741.7 229,715.0 229.5,717.4 230,709.1 230.5,743.1 231,737.0 231.5,753.3 232,748.8 232.5,755.5 233,713.5 233.5,715.6 234,710.0 234.5,715.9 235,710.1 235.5,732.6 236,731.8 236.5,743.6 237,732.6 237.5,753.6 238,750.7 238.5,759.1 239,740.2 239.5,730.9 240,709.5 240.5,712.3 241,685.5 241.5,679.4 242,654.4 242.5,649.6 243,649.1 243.5,693.2 244,694.7 244.5,722.9 245,708.9 245.5,707.2 246,679.6 246.5,682.6 247,685.2 247.5,710.4 248,702.9 248.5,711.8 249,713.8 249.5,725.4 250,723.2 250.5,739.8 251,732.8 251.5,751.5 252,738.4 252.5,753.1 253,748.7 253.5,753.9 254,755.4 254.5,767.1 255,756.1 255.5,761.0 256,753.6 256.5,764.1 257,744.6 257.5,747.4 258,725.8 258.5,745.8 259,725.3 259.5,738.4 260,723.4 260.5,739.5 261,734.9 261.5,740.0 262,737.8 262.5,755.3 263,741.5 263.5,749.6 264,746.1 264.5,756.9 265,749.0 265.5,751.3 266,733.6 266.5,729.6 267,715.3 267.5,713.3 268,690.5 268.5,677.7 269,681.6 269.5,699.7 270,700.0 270.5,712.0 271,712.5 271.5,731.5 272,716.7 272.5,719.0 273,722.7 273.5,731.1 274,707.5 274.5,703.5 275,667.8 275.5,661.7 276,628.5 276.5,629.4 277,620.2 277.5,664.3 278,661.2 278.5,685.4 279,687.3 279.5,707.6 280,683.1 280.5,686.5 281,692.8 281.5,705.6 282,704.1 282.5,726.2 283,725.2 283.5,747.3 284,736.3 284.5,742.6 285,741.1 285.5,750.7 286,750.1 286.5,761.0 287,754.2 287.5,771.9 288,749.8 288.5,752.0 289,706.4 289.5,717.7 290,678.6 290.5,657.5 291,625.0 291.5,653.9 292,670.6 292.5,691.0 293,705.3 293.5,728.2 294,730.1 294.5,741.8 295,739.6 295.5,760.0 296,754.5 296.5,768.4 297,741.1 297.5,771.3 298,756.1 298.5,752.7 299,720.1 299.5,711.9 300,683.0 300.5,677.1 301,643.4 301.5,655.5 302,660.4 302.5,658.1 303,664.1 303.5,699.0 304,695.4 304.5,703.3 305,672.3 305.5,680.6 306,696.3 306.5,744.7 307,768.8 307.5,821.8 308,817.9 308.5,816.5 309,784.8 309.5,771.5 310,747.2 310.5,746.5 311,733.9 311.5,764.7 312,727.5 312.5,712.7 313,681.1 313.5,663.2 314,623.9 314.5,661.9 315,657.6 315.5,686.9 316,675.1 316.5,713.5 317,717.2 317.5,742.0 318,738.5 318.5,735.9 319,702.3 319.5,701.1 320,643.8 320.5,654.4 321,658.3 321.5,690.0 322,665.0 322.5,708.0 323,709.3 323.5,734.3 324,713.5 324.5,765.6 325,746.6 325.5,759.9 326,757.1 326.5,775.9 327,773.8 327.5,798.5 328,759.8 328.5,769.6 329,746.4 329.5,736.8 330,717.7 330.5,709.4 331,690.5 331.5,697.7 332,701.7 332.5,727.5 333,714.0 333.5,756.7 334,738.5 334.5,768.0 335,727.8 335.5,700.2 336,653.1 336.5,633.1 337,601.6 337.5,629.1 338,625.8 338.5,682.3 339,659.9 339.5,694.5 340,685.3 340.5,685.2 341,640.8 341.5,683.3 342,686.6 342.5,728.1 343,740.6 343.5,766.7 344,762.8 344.5,782.3 345,771.3 345.5,794.0 346,782.1 346.5,791.0 347,764.2 347.5,789.8 348,782.6 348.5,808.1 349,777.9 349.5,798.1 350,794.7 350.5,793.9 351,773.7 351.5,774.2 352,752.7 352.5,753.2 353,720.7 353.5,731.8 354,700.2 354.5,715.1 355,724.6 355.5,735.4 356,733.5 356.5,718.4 357,700.7 357.5,736.0 358,729.9 358.5,759.2 359,756.5 359.5,775.6 360,767.9 360.5,755.2 361,715.5 361.5,721.5 362,707.5 362.5,737.7 363,692.1 363.5,685.0 364,696.9 364.5,719.1 365,728.5 365.5,759.0 366,747.1 366.5,795.6 367,778.1 367.5,790.9 368,789.7 368.5,807.2 369,795.9 369.5,801.9 370,787.7 370.5,798.2 371,767.2 371.5,766.3 372,740.0 372.5,723.3 373,691.4 373.5,691.0 374,679.3 374.5,717.4 375,731.0 375.5,745.5 376,752.2 376.5,764.5 377,768.0 377.5,780.2 378,779.7 378.5,793.0 379,786.3 379.5,775.5 380,736.8 380.5,729.6 381,690.1 381.5,686.2 382,636.8 382.5,632.5 383,596.0 383.5,680.0 384,702.6 384.5,744.0 385,751.2 385.5,786.4 386,754.9 386.5,767.6 387,765.6 387.5,787.1 388,762.4 388.5,788.5 389,777.0 389.5,772.3 390,739.2 390.5,729.9 391,685.4 391.5,689.1 392,635.0 392.5,666.7 393,681.2 393.5,718.8 394,715.9 394.5,744.4 395,744.6 395.5,760.7 396,764.2 396.5,808.1 397,794.7 397.5,809.4 398,790.7 398.5,786.7 399,758.2 399.5,748.0 400,714.5 400.5,716.7 401,709.5 401.5,749.9 402,743.8 402.5,763.3 403,767.6 403.5,786.2 404,777.7 404.5,786.9 405,765.6 405.5,758.6 406,741.7 406.5,735.4 407,737.8 407.5,754.1 408,755.1 408.5,775.5 409,749.3 409.5,731.9 410,687.1 410.5,689.7 411,676.6 411.5,713.2 412,710.0 412.5,720.4 413,716.9 413.5,739.9 414,735.8 414.5,758.9 415,718.7 415.5,712.8 416,697.1 416.5,715.3 417,716.5 417.5,740.3 418,719.9 418.5,755.2 419,757.4 419.5,776.3 420,769.0 420.5,795.7 421,773.3 421.5,789.0 422,779.2 422.5,800.9 423,750.7 423.5,743.6 424,690.7 424.5,662.2 425,674.3 425.5,711.8 426,704.7 426.5,731.9 427,724.3 427.5,751.6 428,751.1 428.5,792.3 429,761.8 429.5,783.9 430,753.3 430.5,742.0 431,735.1 431.5,767.3 432,765.6 432.5,787.7 433,783.8 433.5,798.3 434,786.9 434.5,804.6 435,800.8 435.5,825.6 436,797.2 436.5,801.2 437,787.1 437.5,804.4 438,767.4 438.5,772.8 439,755.8 439.5,753.7 440,734.8 440.5,738.8 441,730.0 441.5,745.6 442,713.8 442.5,745.7 443,753.5 443.5,784.9 444,768.3 444.5,789.4 445,790.5 445.5,805.4 446,784.5 446.5,800.0 447,768.6 447.5,761.8 448,744.2 448.5,751.4 449,720.8 449.5,732.0 450,707.8 450.5,712.8 451,701.4 451.5,718.7 452,722.9 452.5,752.8 453,747.1 453.5,767.1 454,752.9 454.5,774.3 455,769.9 455.5,760.4 456,717.0 456.5,697.0 457,711.7 457.5,736.6 458,743.1 458.5,766.2 459,775.3 459.5,808.7 460,793.5 460.5,807.5 461,794.6 461.5,815.5 462,784.9 462.5,807.6 463,782.4 463.5,785.3 464,760.5 464.5,771.1 465,751.6 465.5,750.7 466,728.4 466.5,768.2 467,756.7 467.5,769.1 468,766.9 468.5,771.4 469,763.0 469.5,797.1 470,780.9 470.5,800.3 471,789.9 471.5,815.8 472,792.4 472.5,803.8 473,796.6 473.5,804.0 474,790.9 474.5,809.8 475,797.4 475.5,797.3 476,781.2 476.5,782.0 477,766.6 477.5,758.5 478,745.7 478.5,739.9 479,732.4 479.5,750.7 480,760.0 480.5,784.7 481,777.3 481.5,795.7 482,770.8 482.5,778.1 483,751.1 483.5,760.9 484,741.5 484.5,761.0 485,755.8 485.5,766.7 486,757.9 486.5,755.7 487,741.3 487.5,762.1 488,756.1 488.5,775.1 489,768.2 489.5,781.4 490,777.3 490.5,797.6 491,791.3 491.5,805.6 492,785.6 492.5,821.5 493,799.6 493.5,803.9 494,790.0 494.5,811.3 495,800.0 495.5,811.0 496,781.2 496.5,779.9 497,730.0 497.5,734.0 498,688.7 498.5,702.2 499,705.1 499.5,738.7 500,722.4 500.5,762.6 501,763.5 501.5,771.1 502,747.9 502.5,767.8 503,756.1 503.5,794.7 504,777.6 504.5,797.0 505,794.5 505.5,804.4 506,760.2 506.5,756.7 507,723.1 507.5,702.4 508,670.5 508.5,703.0 509,713.0 509.5,746.2 510,729.7 510.5,759.8 511,769.9 511.5,794.0 512,784.5 512.5,798.5 513,781.1 513.5,800.6 514,796.1 514.5,802.5 515,770.8 515.5,762.1 516,730.0 516.5,723.4 517,683.8 517.5,696.9 518,707.2 518.5,746.5 519,740.4 519.5,779.2 520,773.3 520.5,787.2 521,768.2 521.5,756.2 522,732.0 522.5,730.7 523,694.5 523.5,692.8 524,645.5 524.5,650.1 525,613.9 525.5,613.5 526,573.1 526.5,583.3 527,568.7 527.5,609.4 528,614.3 528.5,647.9 529,655.1 529.5,681.5 530,685.6 530.5,715.5 531,720.8 531.5,763.5 532,745.7 532.5,779.9 533,787.6 533.5,794.7 534,788.6 534.5,811.5 535,797.9 535.5,810.7 536,792.3 536.5,806.7 537,793.0 537.5,806.0 538,796.2 538.5,809.7 539,794.7 539.5,808.8 540,794.8 540.5,832.3 541,804.4 541.5,833.5 542,807.2 542.5,813.5 543,799.0 543.5,786.1 544,768.0 544.5,771.4 545,741.9 545.5,755.8 546,759.5 546.5,780.0 547,776.6 547.5,790.5 548,789.2 548.5,804.0 549,793.5 549.5,820.8 550,784.1 550.5,794.4 551,767.0 551.5,775.3 552,783.3 552.5,792.0 553,788.2 553.5,804.9 554,779.9 554.5,792.7 555,748.3 555.5,746.0 556,714.0 556.5,702.6 557,671.5 557.5,687.0 558,702.9 558.5,732.5 559,729.0 559.5,744.7 560,756.7 560.5,780.1 561,775.0 561.5,802.1 562,785.7 562.5,807.5 563,801.5 563.5,788.4 564,775.9 564.5,775.6 565,744.9 565.5,744.8 566,720.0 566.5,730.3 567,723.4 567.5,742.6 568,746.8 568.5,764.9 569,754.0 569.5,784.8 570,759.1 570.5,803.4 571,765.1 571.5,758.9 572,715.7 572.5,704.6 573,657.4 573.5,650.0 574,662.2 574.5,705.0 575,701.6 575.5,749.6 576,762.9 576.5,793.0 577,791.5 577.5,821.2 578,801.8 578.5,810.5 579,799.4 579.5,805.7 580,801.8 580.5,824.8 581,813.2 581.5,838.4 582,817.4 582.5,826.6 583,818.8 583.5,812.7 584,795.0 584.5,800.5 585,768.8 585.5,766.4 586,747.8 586.5,753.9 587,724.6 587.5,753.9 588,757.5 588.5,773.6 589,759.7 589.5,805.7 590,783.4 590.5,803.4 591,796.0 591.5,817.4 592,812.4 592.5,824.6 593,803.0 593.5,797.0 594,765.7 594.5,768.8 595,758.4 595.5,786.2 596,774.8 596.5,797.3 597,800.3 597.5,814.2 598,800.3 598.5,832.0 599,801.2 599.5,821.3 600,816.5 600.5,831.7 601,807.7 601.5,835.2 602,809.1 602.5,825.7 603,802.1 603.5,850.6 604,820.8 604.5,842.4 605,819.3 605.5,834.0 606,820.7 606.5,826.9 607,787.7 607.5,781.1 608,746.8 608.5,773.2 609,719.4 609.5,739.9 610,738.3 610.5,758.2 611,769.2 611.5,773.6 612,736.6 612.5,732.8 613,748.0 613.5,783.8 614,792.7 614.5,824.0 615,809.4 615.5,833.2 616,803.7 616.5,809.2 617,767.3 617.5,741.5 618,682.3 618.5,664.0 619,668.7 619.5,712.3 620,700.5 620.5,738.8 621,727.0 621.5,753.0 622,757.2 622.5,784.5 623,771.6 623.5,761.3 624,730.6 624.5,726.3 625,703.9 625.5,694.3 626,710.8 626.5,729.1 627,683.3 627.5,718.7 628,713.3 628.5,746.7 629,739.1 629.5,760.8 630,754.9 630.5,766.6 631,762.8 631.5,768.9 632,737.4 632.5,742.3 633,715.3 633.5,737.5 634,749.7 634.5,770.4 635,778.5 635.5,799.5 636,785.6 636.5,817.3 637,800.4 637.5,832.5 638,805.1 638.5,826.0 639,806.4 639.5,821.0 640,789.0 640.5,798.8 641,764.9 641.5,782.4 642,744.9 642.5,742.8 643,724.4 643.5,717.3 644,708.1 644.5,719.0 645,706.3 645.5,691.3 646,638.3 646.5,621.4 647,575.3 647.5,563.6 648,537.5 648.5,519.1 649,482.2 649.5,477.2 650,445.9 650.5,438.4 651,409.3 651.5,442.6 652,462.6 652.5,504.3 653,506.2 653.5,552.4 654,556.9 654.5,595.8 655,586.9 655.5,626.1 656,642.2 656.5,674.6 657,680.1 657.5,703.2 658,710.3 658.5,741.4 659,729.2 659.5,758.5 660,757.1 660.5,754.9 661,736.5 661.5,756.9 662,712.2 662.5,716.5 663,706.9 663.5,735.9 664,728.4 664.5,750.4 665,742.2 665.5,761.6 666,753.2 666.5,775.4 667,746.9 667.5,760.2 668,749.5 668.5,767.2 669,739.8 669.5,735.9 670,708.5 670.5,700.9 671,692.7 671.5,711.6 672,713.5 672.5,743.6 673,745.8 673.5,750.5 674,750.1 674.5,760.7 675,738.4 675.5,736.9 676,713.9 676.5,727.6 677,734.0 677.5,756.9 678,750.9 678.5,774.3 679,754.8 679.5,759.5 680,751.8 680.5,758.2 681,749.6 681.5,763.5 682,761.6 682.5,771.3 683,758.4 683.5,771.9 684,743.1 684.5,738.3 685,713.1 685.5,708.1 686,672.8 686.5,655.7 687,637.9 687.5,675.2 688,681.2 688.5,705.5 689,719.7 689.5,740.1 690,736.3 690.5,753.7 691,741.5 691.5,760.8 692,747.4 692.5,753.6 693,731.0 693.5,727.2 694,711.1 694.5,703.8 695,690.3 695.5,675.2 696,652.3 696.5,644.3 697,605.2 697.5,604.7 698,615.5 698.5,639.9 699,655.4 699.5,679.4 700,685.5 700.5,694.1 701,673.9 701.5,689.9 702,680.2 702.5,713.0 703,724.4 703.5,737.4 704,732.5 704.5,745.9 705,733.6 705.5,755.4 706,743.4 706.5,736.0 707,710.6 707.5,706.2 708,711.0 708.5,759.2 709,788.7 709.5,842.1 710,849.6 710.5,872.5 711,799.6 711.5,766.7 712,705.6 712.5,674.1 713,619.3 713.5,594.9 714,567.3 714.5,556.9 715,526.1 715.5,525.4 716,495.3 716.5,499.2 717,462.0 717.5,452.2 718,427.6 718.5,413.6 719,374.5 719.5,374.5 720,364.0 720.5,421.9 721,421.5 721.5,457.4 722,468.3 722.5,499.2 723,519.3 723.5,545.6 724,555.4 724.5,605.7 725,608.6 725.5,633.3 726,641.3 726.5,680.7 727,686.8 727.5,704.3 728,718.6 728.5,741.7 729,753.9 729.5,770.6 730,763.8 730.5,771.2 731,744.0 731.5,740.6 732,734.1 732.5,739.9 733,706.7 733.5,690.7 734,651.7 734.5,654.3 735,651.4 735.5,686.5 736,693.9 736.5,720.8 737,731.2 737.5,759.9 738,762.5 738.5,779.7 739,776.6 739.5,776.1 740,738.5 740.5,739.1 741,698.5 741.5,703.2 742,664.5 742.5,694.4 743,702.9 743.5,738.8 744,751.8 744.5,776.5 745,761.7 745.5,753.9 746,745.9 746.5,759.2 747,758.2 747.5,771.8 748,772.3 748.5,784.1 749,788.2 749.5,801.5 750,794.3 750.5,803.5 751,804.4 751.5,817.1 752,805.7 752.5,813.0 753,807.7 753.5,818.3 754,807.4 754.5,815.4 755,814.6 755.5,827.2 756,831.1 756.5,842.8 757,828.4 757.5,819.8 758,802.1 758.5,809.9 759,805.1 759.5,815.9 760,801.2 760.5,792.2 761,769.8 761.5,751.0 762,723.6 762.5,713.9 763,729.8 763.5,747.8 764,760.7 764.5,775.4 765,781.6 765.5,794.6 766,779.0 766.5,782.1 767,778.8 767.5,786.1 768,788.0 768.5,800.4 769,796.2 769.5,796.1 770,782.3 770.5,782.8 771,768.0 771.5,769.6 772,773.9 772.5,786.5 773,790.9 773.5,800.9 774,791.1 774.5,796.9 775,797.7 775.5,805.8 776,810.4 776.5,817.1 777,814.5 777.5,820.9 778,815.3 778.5,828.6 779,818.0 779.5,822.2 780,813.0 780.5,817.2 781,808.3 781.5,807.9 782,801.4 782.5,807.0 783,800.0 783.5,808.9 784,808.7 784.5,815.4 785,816.0 785.5,822.6 786,818.7 786.5,827.3 787,825.6 787.5,828.6 788,827.0 788.5,836.4 789,828.0 789.5,830.1 790,818.9 790.5,824.0 791,810.4 791.5,812.9 792,806.6 792.5,803.5 793,793.8 793.5,786.9 794,773.0 794.5,769.6 795,772.2 795.5,789.0 796,792.8 796.5,804.8 797,805.0 797.5,815.3 798,814.3 798.5,821.8 799,820.8 799.5,834.2 800,828.1 800.5,832.8 801,824.8 801.5,826.2 802,810.8 802.5,808.3 803,793.0 803.5,786.5 804,779.1 804.5,788.4 805,790.4 805.5,805.6 806,801.3 806.5,811.0 807,811.8 807.5,823.1 808,819.7 808.5,824.3 809,818.1 809.5,823.4 810,820.2 810.5,815.8 811,805.2 811.5,805.7 812,780.6 812.5,790.2 813,793.3 813.5,809.6 814,810.6 814.5,820.1 815,824.2 815.5,831.3 816,828.9 816.5,841.6 817,835.1 817.5,840.3 818,838.0 818.5,841.1 819,836.3 819.5,848.0 820,839.7 820.5,845.9 821,836.4 821.5,832.8 822,821.4 822.5,820.9 823,810.1 823.5,816.4 824,810.0 824.5,820.4 825,821.0 825.5,826.8 826,823.7 826.5,836.3 827,830.2 827.5,836.5 828,834.0 828.5,842.6 829,836.0 829.5,830.4 830,815.7 830.5,817.1 831,801.1 831.5,798.3 832,780.4 832.5,792.2 833,797.3 833.5,792.7 834,790.9 834.5,801.8 835,806.3 835.5,816.1 836,818.8 836.5,829.1 837,826.7 837.5,839.7 838,839.8 838.5,847.2 839,839.1 839.5,846.9 840,824.6 840.5,810.2 841,783.3 841.5,769.4 842,741.0 842.5,740.1 843,745.1 843.5,767.1 844,769.9 844.5,787.8 845,786.0 845.5,805.2 846,807.6 846.5,820.5 847,819.0 847.5,834.7 848,834.2 848.5,825.5 849,809.2 849.5,805.8 850,809.2 850.5,823.0 851,823.4 851.5,832.9 852,836.7 852.5,843.0 853,833.3 853.5,845.5 854,844.8 854.5,853.2 855,849.0 855.5,856.4 856,853.5 856.5,857.2 857,851.6 857.5,859.5 858,843.6 858.5,843.5 859,833.0 859.5,830.7 860,818.3 860.5,819.7 861,815.3 861.5,824.8 862,820.9 862.5,829.8 863,826.4 863.5,832.9 864,826.9 864.5,833.0 865,822.2 865.5,830.3 866,816.5 866.5,826.5 867,818.6 867.5,818.1 868,815.0 868.5,815.2 869,808.9 869.5,811.5 870,802.3 870.5,805.9 871,797.6 871.5,803.8 872,788.7 872.5,794.9 873,786.5 873.5,787.2 874,779.1 874.5,787.6 875,776.3 875.5,771.1 876,753.1 876.5,744.2 877,720.3 877.5,722.2 878,682.2 878.5,688.9 879,663.2 879.5,717.3 880,691.3 880.5,739.9 881,731.8 881.5,751.7 882,755.3 882.5,768.3 883,756.1 883.5,772.2 884,776.0 884.5,781.8 885,767.9 885.5,758.7 886,725.4 886.5,702.6 887,644.7 887.5,644.8 888,583.4 888.5,640.8 889,670.3 889.5,710.6 890,704.0 890.5,765.0 891,714.0 891.5,705.9 892,640.3 892.5,656.2 893,660.3 893.5,701.7 894,713.4 894.5,756.2 895,756.5 895.5,765.8 896,740.8 896.5,768.2 897,763.9 897.5,786.2 898,777.8 898.5,797.9 899,796.5 899.5,821.4 900,828.5 900.5,849.8 901,839.6 901.5,835.9 902,822.3 902.5,799.6 903,750.3 903.5,721.6 904,665.6 904.5,654.6 905,659.6 905.5,720.5 906,711.5 906.5,735.6 907,714.3 907.5,728.2 908,737.5 908.5,760.1 909,753.5 909.5,777.7 910,768.3 910.5,786.6 911,782.3 911.5,784.7 912,742.7 912.5,743.1 913,702.2 913.5,697.0 914,663.2 914.5,715.0 915,720.9 915.5,751.5 916,751.2 916.5,780.2 917,724.6 917.5,714.2 918,688.3 918.5,740.7 919,757.2 919.5,797.4 920,795.6 920.5,798.3 921,758.4 921.5,746.3 922,707.1 922.5,696.9 923,648.5 923.5,669.2 924,676.5 924.5,706.1 925,704.7 925.5,737.7 926,747.8 926.5,779.1 927,762.0 927.5,804.5 928,788.2 928.5,817.8 929,792.0 929.5,822.7 930,815.7 930.5,786.1 931,742.3 931.5,729.1 932,683.2 932.5,684.9 933,637.8 933.5,639.8 934,609.1 934.5,598.9 935,563.1 935.5,566.6 936,515.4 936.5,516.9 937,492.7 937.5,485.7 938,455.1 938.5,440.4 939,414.3 939.5,406.8 940,371.9 940.5,378.9 941,390.4 941.5,428.6 942,434.7 942.5,470.8 943,488.1 943.5,524.2 944,517.9 944.5,563.9 945,567.5 945.5,605.6 946,607.0 946.5,633.7 947,629.6 947.5,674.3 948,678.0 948.5,720.0 949,695.7 949.5,721.7 950,697.7 950.5,706.5 951,711.6 951.5,733.0 952,718.7 952.5,730.0 953,702.4 953.5,737.0 954,734.6 954.5,749.0 955,743.5 955.5,758.3 956,741.2 956.5,751.2 957,750.5 957.5,753.3 958,750.9 958.5,769.2 959,752.1 959.5,752.6 960,740.7 960.5,746.7 961,739.3 961.5,741.7 962,735.4 962.5,746.7 963,755.6 963.5,771.1 964,782.0 964.5,801.9 965,802.4 965.5,802.3 966,792.3 966.5,788.1 967,775.9 967.5,774.5 968,761.8 968.5,762.5 969,757.7 969.5,755.1 970,749.7 970.5,771.0 971,758.3 971.5,779.3 972,776.8 972.5,777.9 973,747.6 973.5,754.0 974,723.8 974.5,717.5 975,681.4 975.5,675.7 976,657.8 976.5,686.3 977,691.0 977.5,724.8 978,713.8 978.5,710.9 979,689.1 979.5,713.4 980,706.9 980.5,735.4 981,738.3 981.5,760.8 982,766.7 982.5,778.8 983,782.0 983.5,810.4 984,803.9 984.5,817.6 985,800.0 985.5,826.0 986,817.9 986.5,823.7 987,816.4 987.5,822.5 988,757.5 988.5,754.9 989,716.4 989.5,694.7 990,639.7 990.5,626.4 991,640.8 991.5,676.3 992,678.8 992.5,728.0 993,752.9 993.5,802.8 994,825.7 994.5,868.1 995,878.5 995.5,868.5 996,845.5 996.5,837.4 997,790.1 997.5,766.7 998,730.4 998.5,717.5 999,693.8 999.5,748.7 1000,740.2 1000.5,761.1 1001,757.1 1001.5,750.0 1002,726.2 1002.5,717.1 1003,694.1 1003.5,713.3 1004,720.3 1004.5,750.5 1005,750.1 1005.5,774.5 1006,776.6 1006.5,803.4 1007,799.6 1007.5,821.5 1008,801.2 1008.5,828.6 1009,810.8 1009.5,846.9 1010,847.2 1010.5,859.9 1011,832.4 1011.5,841.3 1012,805.0 1012.5,821.3 1013,790.8 1013.5,806.5 1014,802.0 1014.5,782.7 1015,746.4 1015.5,739.2 1016,710.2 1016.5,696.8 1017,696.3 1017.5,700.8 1018,687.9 1018.5,721.5 1019,724.8 1019.5,755.9 1020,763.2 1020.5,808.2 1021,813.4 1021.5,857.2 1022,867.9 1022.5,881.4 1023,843.8 1023.5,847.5 1024,785.8 1024.5,787.4 1025,750.7 1025.5,755.0 1026,707.1 1026.5,696.4 1027,647.4 1027.5,644.6 1028,596.5 1028.5,602.9 1029,555.7 1029.5,581.1 1030,590.1 1030.5,638.8 1031,629.5 1031.5,682.8 1032,704.9 1032.5,736.0 1033,738.9 1033.5,798.4 1034,790.2 1034.5,822.3 1035,816.7 1035.5,830.6 1036,812.2 1036.5,823.4 1037,808.7 1037.5,823.2 1038,817.6 1038.5,836.2 1039,810.0 1039.5,821.0 1040,769.2 1040.5,764.9 1041,717.9 1041.5,709.8 1042,674.3 1042.5,725.8 1043,717.7 1043.5,747.7 1044,771.9 1044.5,777.4 1045,745.3 1045.5,764.2 1046,810.8 1046.5,840.7 1047,811.4 1047.5,821.0 1048,755.0 1048.5,728.7 1049,705.8 1049.5,739.8 1050,734.6 1050.5,768.3 1051,756.3 1051.5,794.1 1052,791.7 1052.5,813.5 1053,803.3 1053.5,793.4 1054,756.0 1054.5,753.3 1055,728.0 1055.5,718.2 1056,717.1 1056.5,756.4 1057,719.5 1057.5,755.8 1058,737.5 1058.5,751.2 1059,742.6 1059.5,759.3 1060,769.8 1060.5,807.6 1061,803.1 1061.5,843.9 1062,841.2 1062.5,860.0 1063,808.6 1063.5,799.7 1064,784.2 1064.5,795.6 1065,771.7 1065.5,768.4 1066,748.3 1066.5,753.0 1067,730.4 1067.5,745.0 1068,691.5 1068.5,717.1 1069,698.6 1069.5,724.6 1070,721.0 1070.5,742.5 1071,743.8 1071.5,760.1 1072,757.4 1072.5,783.3 1073,789.5 1073.5,831.7 1074,826.0 1074.5,860.1 1075,845.9 1075.5,829.3 1076,798.4 1076.5,784.3 1077,737.9 1077.5,725.2 1078,680.9 1078.5,674.5 1079,655.3 1079.5,708.9 1080,707.6 1080.5,703.3 1081,668.4 1081.5,667.2 1082,671.4 1082.5,687.6 1083,687.1 1083.5,719.5 1084,714.9 1084.5,729.2 1085,720.2 1085.5,738.5 1086,742.0 1086.5,757.1 1087,743.0 1087.5,763.1 1088,752.3 1088.5,755.9 1089,747.7 1089.5,752.0 1090,740.8 1090.5,743.5 1091,742.8 1091.5,744.1 1092,742.7 1092.5,757.5 1093,762.0 1093.5,765.0 1094,764.5 1094.5,768.7 1095,768.7 1095.5,776.4 1096,774.8 1096.5,780.5 1097,778.7 1097.5,779.1 1098,772.8 1098.5,775.8 1099,769.5 1099.5,778.0 1100,776.9 1100.5,781.7 1101,778.9 1101.5,778.8 1102,772.5 1102.5,771.2 1103,766.4 1103.5,763.6 1104,762.9 1104.5,769.5 1105,767.6 1105.5,774.1 1106,773.3 1106.5,783.6 1107,782.2 1107.5,786.6 1108,786.8 1108.5,792.3 1109,795.3 1109.5,804.7 1110,802.2 1110.5,798.2 1111,785.7 1111.5,784.4 1112,769.3 1112.5,760.6 1113,755.7 1113.5,762.9 1114,762.7 1114.5,776.2 1115,776.1 1115.5,795.2 1116,789.5 1116.5,799.6 1117,791.4 1117.5,805.8 1118,807.6 1118.5,821.0 1119,810.0 1119.5,822.1 1120,817.5 1120.5,832.0 1121,826.4 1121.5,847.7 1122,833.7 1122.5,842.3 1123,834.6 1123.5,845.1 1124,841.7 1124.5,843.9 1125,841.5 1125.5,855.3 1126,840.6 1126.5,861.3 1127,848.8 1127.5,858.2 1128,850.6 1128.5,855.8 1129,848.7 1129.5,853.0 1130,846.2 1130.5,853.6 1131,845.0 1131.5,848.9 1132,834.5 1132.5,851.1 1133,839.9 1133.5,863.2 1134,844.1 1134.5,847.7 1135,846.2 1135.5,851.9 1136,840.2 1136.5,843.1 1137,834.8 1137.5,842.2 1138,827.8 1138.5,835.2 1139,823.7 1139.5,836.9 1140,821.2 1140.5,818.7 1141,814.1 1141.5,813.3 1142,803.7 1142.5,811.1 1143,793.9 1143.5,800.6 1144,792.0 1144.5,799.0 1145,786.3 1145.5,797.0 1146,787.5 1146.5,784.7 1147,783.5 1147.5,787.4 1148,781.3 1148.5,784.2 1149,786.2 1149.5,790.7 1150,789.8 1150.5,794.3 1151,788.8 1151.5,795.9 1152,792.5 1152.5,793.8 1153,787.7 1153.5,788.1 1154,785.2 1154.5,782.6 1155,785.6 1155.5,783.4 1156,782.5 1156.5,782.0 1157,776.9 1157.5,779.7 1158,777.3 1158.5,775.2 1159,775.8 1159.5,776.1 1160,774.0 1160.5,772.4 1161,771.7 1161.5,769.6 1162,771.7 1162.5,767.4 1163,773.8 1163.5,769.9 1164,772.6 1164.5,769.6 1165,769.9 1165.5,774.7 1166,775.2 1166.5,767.6 1167,771.0 1167.5,771.4 1168,767.7 1168.5,770.2 1169,770.6 1169.5,766.1 1170,768.2 1170.5,774.2 1171,769.1 1171.5,771.3 1172,763.0 1172.5,769.2 1173,765.8 1173.5,766.7 1174,764.7 1174.5,766.7 1175,769.5 1175.5,767.7 1176,764.2 1176.5,768.8 1177,767.2 1177.5,771.8 1178,770.9 1178.5,769.8 1179,766.2 1179.5,765.0 1180,763.7 1180.5,768.0 1181,765.5 1181.5,765.9 1182,765.7 1182.5,769.2 1183,767.3 1183.5,764.8 1184,765.7 1184.5,765.1 1185,767.4 1185.5,765.7 1186,763.0 1186.5,771.5 1187,769.9 1187.5,763.5 1188,764.9 1188.5,765.4 1189,771.1 1189.5,764.9 1190,765.5 1190.5,765.4 1191,766.9 1191.5,771.0 1192,766.8 1192.5,769.3 1193,767.9 1193.5,767.4 1194,770.0 1194.5,768.4 1195,769.3 1195.5,765.4 1196,764.1 1196.5,764.4 1197,770.0 1197.5,764.3 1198,764.7 1198.5,771.1 1199,766.8 1199.5,766.6 1200,763.4 1200.5,764.9 1201,763.0 1201.5,770.5 1202,760.0 1202.5,765.5 1203,766.2 1203.5,766.7 1204,762.8 1204.5,767.6 1205,766.6 1205.5,763.0 1206,764.3 1206.5,766.4 1207,768.3 1207.5,763.9 1208,763.0 1208.5,764.2 1209,764.7 1209.5,764.0 1210,768.3 1210.5,763.4 1211,764.9 1211.5,767.0 1212,766.7 1212.5,765.3 1213,763.6 1213.5,763.1 1214,765.1 1214.5,766.7 1215,766.8 1215.5,764.9 1216,768.7 1216.5,762.1 1217,762.2 1217.5,761.9 1218,763.1 1218.5,764.0 1219,760.7 1219.5,770.2 1220,761.7 1220.5,766.6 1221,763.5 1221.5,761.3 1222,766.9 1222.5,764.4 1223,764.5 1223.5,765.5 1224,761.8 1224.5,764.7 1225,767.2 1225.5,766.7 1226,762.6 1226.5,769.1 1227,770.1 1227.5,761.0 1228,768.5 1228.5,768.4 1229,764.6 1229.5,769.1 1230,761.6 1230.5,761.6 1231,764.4 1231.5,766.3 1232,763.5 1232.5,762.2 1233,759.6 1233.5,763.2 1234,761.7 1234.5,765.5 1235,762.1 1235.5,762.2 1236,761.8 1236.5,761.7 1237,761.8 1237.5,763.4 1238,763.7 1238.5,763.3 1239,765.0 1239.5,757.0 1240,756.6 1240.5,767.8 1241,762.8 1241.5,768.2 1242,764.9 1242.5,765.9 1243,768.3 1243.5,766.9 1244,765.3 1244.5,760.8 1245,760.3 1245.5,763.2 1246,760.4 1246.5,766.0 1247,765.6 1247.5,758.7 1248,761.6 1248.5,759.0 1249,760.0 1249.5,761.1 1250,763.7 1250.5,763.4 1251,763.3 1251.5,767.5 1252,762.9 1252.5,760.9 1253,760.9 1253.5,764.8 1254,764.2 1254.5,759.4 1255,761.0 1255.5,767.2 1256,762.5 1256.5,755.2 1257,760.7 1257.5,763.5 1258,765.2 1258.5,759.8 1259,765.3 1259.5,767.5 1260,756.3 1260.5,761.9 1261,761.5 1261.5,760.6 1262,761.3 1262.5,764.5 1263,762.2 1263.5,762.3 1264,759.3 1264.5,757.3 1265,758.1 1265.5,763.4 1266,759.5 1266.5,756.1 1267,765.3 1267.5,764.7 1268,760.3 1268.5,765.1 1269,762.5 1269.5,757.2 1270,764.2 1270.5,765.0 1271,761.3 1271.5,760.4 1272,765.7" fill="none" stroke="#e028e0" stroke-width="1.35" stroke-linejoin="round" shape-rendering="crispEdges"/>
<polyline points="65,664.3 65.5,668.4 66,665.2 66.5,667.1 67,666.2 67.5,671.0 68,667.7 68.5,668.5 69,666.5 69.5,668.3 70,665.1 70.5,667.9 71,667.1 71.5,669.3 72,667.9 72.5,670.1 73,668.7 73.5,669.7 74,669.1 74.5,674.0 75,673.4 75.5,676.0 76,674.4 76.5,675.8 77,668.9 77.5,668.0 78,668.1 78.5,672.4 79,674.8 79.5,677.4 80,676.5 80.5,681.2 81,676.5 81.5,680.0 82,676.0 82.5,678.4 83,674.9 83.5,678.9 84,676.9 84.5,675.3 85,672.0 85.5,671.8 86,669.4 86.5,673.9 87,671.2 87.5,670.7 88,666.7 88.5,667.0 89,665.8 89.5,670.0 90,667.5 90.5,672.5 91,670.7 91.5,674.1 92,670.6 92.5,671.3 93,667.5 93.5,667.1 94,666.5 94.5,668.2 95,665.4 95.5,668.1 96,661.0 96.5,655.2 97,645.1 97.5,640.9 98,634.8 98.5,633.4 99,627.2 99.5,625.9 100,633.5 100.5,642.2 101,647.7 101.5,655.1 102,658.7 102.5,670.5 103,676.6 103.5,685.6 104,689.2 104.5,695.0 105,690.7 105.5,693.5 106,693.7 106.5,696.3 107,689.8 107.5,694.0 108,688.9 108.5,689.8 109,689.5 109.5,694.1 110,692.6 110.5,696.6 111,690.7 111.5,693.9 112,687.4 112.5,686.6 113,677.4 113.5,674.2 114,670.2 114.5,668.1 115,667.8 115.5,678.2 116,679.8 116.5,683.2 117,684.0 117.5,690.1 118,684.7 118.5,688.9 119,688.3 119.5,695.7 120,691.1 120.5,696.5 121,693.4 121.5,694.4 122,688.9 122.5,693.4 123,688.9 123.5,692.4 124,693.0 124.5,701.0 125,694.9 125.5,698.5 126,697.4 126.5,698.4 127,694.2 127.5,694.8 128,691.9 128.5,697.0 129,692.7 129.5,698.9 130,695.2 130.5,696.0 131,689.2 131.5,691.2 132,688.1 132.5,692.7 133,694.5 133.5,699.0 134,694.7 134.5,694.0 135,681.0 135.5,677.3 136,661.8 136.5,655.6 137,662.0 137.5,677.6 138,685.4 138.5,698.3 139,703.9 139.5,718.8 140,725.5 140.5,737.3 141,742.9 141.5,755.0 142,750.6 142.5,747.8 143,743.8 143.5,742.0 144,737.9 144.5,737.8 145,734.8 145.5,735.2 146,730.7 146.5,734.1 147,727.3 147.5,729.0 148,725.0 148.5,723.5 149,719.1 149.5,720.2 150,715.2 150.5,716.9 151,714.8 151.5,715.3 152,712.2 152.5,714.3 153,703.6 153.5,699.3 154,683.6 154.5,673.4 155,652.2 155.5,641.6 156,626.7 156.5,644.0 157,655.4 157.5,667.6 158,668.8 158.5,676.8 159,679.1 159.5,687.1 160,687.1 160.5,687.7 161,679.1 161.5,679.3 162,673.3 162.5,679.3 163,674.2 163.5,679.0 164,677.0 164.5,679.7 165,675.1 165.5,677.5 166,673.7 166.5,668.0 167,651.1 167.5,645.7 168,621.2 168.5,618.5 169,607.2 169.5,601.3 170,594.0 170.5,604.1 171,607.7 171.5,610.8 172,598.4 172.5,601.7 173,606.9 173.5,600.7 174,576.0 174.5,562.2 175,565.5 175.5,587.1 176,592.5 176.5,608.2 177,597.6 177.5,586.6 178,572.5 178.5,587.8 179,592.3 179.5,600.5 180,604.7 180.5,616.1 181,617.2 181.5,631.0 182,610.6 182.5,596.9 183,588.7 183.5,603.4 184,610.9 184.5,627.8 185,641.1 185.5,661.2 186,672.2 186.5,693.8 187,700.2 187.5,710.8 188,689.7 188.5,677.8 189,657.7 189.5,650.5 190,624.7 190.5,618.2 191,595.4 191.5,584.3 192,567.7 192.5,561.4 193,545.7 193.5,537.9 194,515.8 194.5,517.2 195,496.3 195.5,486.0 196,470.5 196.5,464.4 197,443.5 197.5,430.7 198,415.9 198.5,410.1 199,391.8 199.5,382.5 200,361.1 200.5,356.3 201,334.3 201.5,332.3 202,312.6 202.5,309.7 203,293.1 203.5,284.6 204,265.8 204.5,261.8 205,238.0 205.5,228.6 206,210.6 206.5,233.8 207,292.8 207.5,358.3 208,405.4 208.5,474.7 209,529.8 209.5,595.2 210,639.1 210.5,694.6 211,708.0 211.5,720.3 212,714.0 212.5,723.7 213,711.7 213.5,718.8 214,708.4 214.5,719.6 215,711.7 215.5,715.5 216,709.6 216.5,712.4 217,698.6 217.5,712.6 218,711.1 218.5,717.2 219,705.7 219.5,713.3 220,701.6 220.5,700.6 221,690.6 221.5,691.4 222,676.8 222.5,663.6 223,637.8 223.5,634.2 224,640.6 224.5,658.5 225,663.5 225.5,679.8 226,685.9 226.5,701.5 227,701.4 227.5,706.8 228,691.9 228.5,707.3 229,680.1 229.5,699.5 230,676.6 230.5,682.2 231,674.8 231.5,673.3 232,662.7 232.5,676.5 233,656.5 233.5,673.4 234,669.0 234.5,686.4 235,677.8 235.5,688.8 236,677.0 236.5,705.6 237,693.6 237.5,715.8 238,695.7 238.5,704.9 239,674.8 239.5,659.8 240,634.3 240.5,615.6 241,579.1 241.5,574.4 242,583.5 242.5,612.9 243,624.9 243.5,651.4 244,639.2 244.5,644.7 245,627.4 245.5,642.0 246,643.2 246.5,657.0 247,659.3 247.5,669.6 248,662.4 248.5,672.3 249,652.5 249.5,673.3 250,667.2 250.5,696.2 251,693.4 251.5,705.2 252,698.3 252.5,708.8 253,700.6 253.5,712.0 254,706.3 254.5,731.1 255,710.2 255.5,715.6 256,715.3 256.5,725.0 257,710.9 257.5,709.2 258,695.8 258.5,705.9 259,692.3 259.5,695.2 260,681.9 260.5,683.6 261,675.8 261.5,695.2 262,692.0 262.5,709.6 263,690.3 263.5,701.1 264,695.7 264.5,707.2 265,698.6 265.5,705.1 266,687.1 266.5,676.5 267,651.5 267.5,640.6 268,599.5 268.5,589.4 269,599.9 269.5,633.6 270,632.9 270.5,668.9 271,662.7 271.5,682.9 272,688.4 272.5,693.1 273,666.2 273.5,662.9 274,627.8 274.5,622.5 275,588.7 275.5,601.0 276,590.7 276.5,619.8 277,626.7 277.5,645.2 278,657.3 278.5,672.6 279,669.7 279.5,659.4 280,633.0 280.5,633.6 281,641.2 281.5,659.5 282,650.0 282.5,675.7 283,680.5 283.5,693.1 284,685.3 284.5,704.9 285,696.6 285.5,705.6 286,699.3 286.5,707.7 287,687.5 287.5,679.3 288,639.4 288.5,635.3 289,593.1 289.5,607.0 290,621.8 290.5,646.2 291,654.2 291.5,681.7 292,685.5 292.5,709.9 293,704.5 293.5,702.1 294,682.8 294.5,690.3 295,682.4 295.5,706.5 296,702.0 296.5,721.2 297,716.4 297.5,728.4 298,719.3 298.5,723.3 299,686.3 299.5,681.3 300,658.0 300.5,638.4 301,607.6 301.5,599.1 302,588.7 302.5,614.9 303,608.8 303.5,649.5 304,648.1 304.5,671.2 305,659.2 305.5,678.0 306,635.0 306.5,646.0 307,654.7 307.5,697.9 308,690.0 308.5,700.9 309,697.7 309.5,709.8 310,698.4 310.5,723.2 311,707.2 311.5,722.8 312,721.7 312.5,705.2 313,672.0 313.5,650.2 314,600.4 314.5,577.4 315,583.0 315.5,610.0 316,625.6 316.5,657.4 317,663.5 317.5,693.2 318,661.5 318.5,699.1 319,670.6 319.5,670.3 320,679.8 320.5,702.9 321,695.3 321.5,706.7 322,693.1 322.5,712.2 323,707.4 323.5,725.2 324,728.0 324.5,747.5 325,728.9 325.5,728.6 326,697.7 326.5,706.2 327,675.8 327.5,675.5 328,645.8 328.5,646.2 329,634.3 329.5,653.4 330,648.5 330.5,670.5 331,666.6 331.5,694.1 332,690.9 332.5,713.6 333,711.3 333.5,742.9 334,717.1 334.5,720.2 335,678.4 335.5,694.9 336,644.3 336.5,648.2 337,648.4 337.5,686.0 338,665.0 338.5,696.6 339,703.0 339.5,717.1 340,688.5 340.5,676.0 341,639.4 341.5,647.4 342,641.8 342.5,681.6 343,674.2 343.5,699.4 344,703.2 344.5,725.6 345,721.7 345.5,752.6 346,739.9 346.5,773.1 347,743.6 347.5,773.0 348,742.7 348.5,770.1 349,744.8 349.5,747.3 350,724.3 350.5,726.5 351,721.5 351.5,710.0 352,681.9 352.5,691.8 353,651.5 353.5,649.7 354,638.2 354.5,664.9 355,674.9 355.5,699.9 356,642.2 356.5,642.9 357,640.2 357.5,665.7 358,654.9 358.5,693.0 359,688.0 359.5,709.0 360,706.5 360.5,714.3 361,679.5 361.5,678.7 362,650.3 362.5,656.1 363,653.7 363.5,682.5 364,685.1 364.5,716.9 365,710.5 365.5,733.5 366,736.1 366.5,759.3 367,734.0 367.5,729.7 368,715.9 368.5,733.6 369,733.4 369.5,746.2 370,738.3 370.5,720.0 371,680.2 371.5,647.9 372,598.0 372.5,591.7 373,606.6 373.5,655.3 374,662.9 374.5,689.2 375,702.9 375.5,722.3 376,725.2 376.5,744.1 377,741.7 377.5,758.2 378,752.2 378.5,776.6 379,757.3 379.5,763.1 380,737.2 380.5,751.5 381,727.2 381.5,718.9 382,689.6 382.5,666.9 383,626.3 383.5,607.4 384,555.4 384.5,557.8 385,575.3 385.5,615.6 386,642.5 386.5,679.4 387,680.7 387.5,723.6 388,726.7 388.5,764.5 389,748.7 389.5,729.3 390,674.6 390.5,652.0 391,587.6 391.5,573.8 392,595.5 392.5,645.0 393,627.1 393.5,648.1 394,645.3 394.5,675.8 395,674.2 395.5,701.4 396,686.3 396.5,715.5 397,701.0 397.5,733.4 398,703.5 398.5,685.8 399,657.5 399.5,642.4 400,601.7 400.5,605.7 401,607.6 401.5,656.7 402,636.4 402.5,672.0 403,664.2 403.5,704.8 404,673.6 404.5,675.8 405,637.9 405.5,681.3 406,694.3 406.5,717.2 407,723.6 407.5,748.2 408,726.0 408.5,704.9 409,654.6 409.5,622.7 410,569.8 410.5,593.6 411,599.9 411.5,633.2 412,651.7 412.5,674.3 413,686.9 413.5,709.7 414,702.2 414.5,703.8 415,676.9 415.5,685.2 416,656.8 416.5,675.6 417,682.5 417.5,697.0 418,701.1 418.5,714.7 419,715.1 419.5,728.5 420,723.0 420.5,740.3 421,743.0 421.5,751.4 422,752.7 422.5,750.0 423,727.3 423.5,720.3 424,697.9 424.5,691.5 425,666.5 425.5,652.7 426,618.1 426.5,627.4 427,631.1 427.5,659.9 428,658.2 428.5,683.4 429,692.5 429.5,714.5 430,694.3 430.5,742.7 431,721.3 431.5,747.8 432,743.0 432.5,753.1 433,747.5 433.5,762.6 434,735.0 434.5,749.9 435,719.2 435.5,747.0 436,745.5 436.5,761.8 437,743.3 437.5,749.1 438,711.4 438.5,716.6 439,683.9 439.5,688.4 440,676.1 440.5,706.8 441,711.3 441.5,741.7 442,708.3 442.5,723.9 443,685.7 443.5,694.6 444,697.3 444.5,710.4 445,710.8 445.5,730.1 446,729.5 446.5,746.8 447,741.0 447.5,748.8 448,729.9 448.5,729.5 449,714.0 449.5,703.1 450,688.3 450.5,680.5 451,689.9 451.5,714.0 452,718.3 452.5,731.9 453,709.6 453.5,725.9 454,730.8 454.5,743.7 455,746.1 455.5,756.1 456,756.2 456.5,776.5 457,757.5 457.5,766.1 458,752.1 458.5,759.0 459,739.5 459.5,761.3 460,747.0 460.5,766.9 461,756.2 461.5,766.8 462,759.2 462.5,762.3 463,755.5 463.5,776.3 464,748.0 464.5,746.7 465,737.4 465.5,734.8 466,707.2 466.5,704.0 467,678.2 467.5,708.3 468,691.7 468.5,722.1 469,702.4 469.5,727.3 470,709.9 470.5,741.0 471,734.3 471.5,760.2 472,746.4 472.5,760.2 473,738.8 473.5,755.9 474,752.4 474.5,760.2 475,733.7 475.5,733.5 476,709.4 476.5,704.7 477,679.5 477.5,678.5 478,680.0 478.5,703.0 479,693.3 479.5,696.2 480,652.8 480.5,689.9 481,688.1 481.5,705.7 482,679.8 482.5,670.3 483,645.8 483.5,670.1 484,660.4 484.5,691.9 485,705.0 485.5,731.7 486,709.5 486.5,710.4 487,688.2 487.5,701.5 488,688.2 488.5,705.1 489,694.4 489.5,717.7 490,723.9 490.5,745.5 491,732.4 491.5,747.6 492,746.6 492.5,775.0 493,741.1 493.5,778.3 494,746.8 494.5,759.1 495,725.7 495.5,711.7 496,674.5 496.5,664.1 497,603.9 497.5,596.8 498,588.0 498.5,624.2 499,632.7 499.5,654.1 500,669.9 500.5,689.9 501,694.8 501.5,717.1 502,724.0 502.5,737.0 503,713.8 503.5,755.1 504,718.8 504.5,757.9 505,746.5 505.5,767.0 506,724.3 506.5,724.0 507,656.4 507.5,650.4 508,611.2 508.5,621.6 509,637.8 509.5,657.9 510,672.1 510.5,695.3 511,694.4 511.5,737.5 512,716.1 512.5,747.4 513,732.5 513.5,753.7 514,735.9 514.5,764.2 515,749.2 515.5,768.9 516,725.5 516.5,715.5 517,684.7 517.5,671.1 518,635.6 518.5,677.0 519,677.5 519.5,720.4 520,693.8 520.5,738.3 521,705.0 521.5,729.0 522,717.4 522.5,717.1 523,680.2 523.5,682.7 524,641.0 524.5,637.9 525,605.6 525.5,592.9 526,563.5 526.5,551.4 527,511.0 527.5,554.4 528,560.7 528.5,605.4 529,623.1 529.5,660.4 530,659.1 530.5,698.2 531,707.4 531.5,729.8 532,739.9 532.5,788.8 533,753.0 533.5,770.4 534,757.4 534.5,764.3 535,762.3 535.5,772.4 536,768.8 536.5,777.8 537,749.4 537.5,768.4 538,733.6 538.5,757.7 539,750.2 539.5,757.9 540,746.7 540.5,770.1 541,741.6 541.5,752.3 542,730.0 542.5,742.8 543,729.9 543.5,734.5 544,715.8 544.5,710.6 545,699.9 545.5,732.5 546,730.9 546.5,738.3 547,716.0 547.5,742.6 548,722.3 548.5,752.8 549,749.5 549.5,772.8 550,774.1 550.5,799.5 551,784.2 551.5,797.2 552,769.2 552.5,774.8 553,755.5 553.5,768.1 554,756.2 554.5,763.2 555,750.1 555.5,741.3 556,716.5 556.5,710.1 557,669.0 557.5,666.2 558,626.8 558.5,653.7 559,631.2 559.5,648.5 560,653.3 560.5,680.9 561,663.8 561.5,680.6 562,688.7 562.5,716.4 563,713.8 563.5,756.8 564,728.1 564.5,736.0 565,684.5 565.5,677.2 566,640.8 566.5,642.2 567,627.4 567.5,660.7 568,663.1 568.5,678.9 569,680.5 569.5,723.4 570,715.9 570.5,735.0 571,728.9 571.5,752.0 572,716.4 572.5,703.1 573,665.7 573.5,665.2 574,629.9 574.5,665.6 575,668.1 575.5,705.8 576,689.5 576.5,720.4 577,720.6 577.5,756.6 578,738.1 578.5,765.2 579,751.8 579.5,772.6 580,763.9 580.5,787.5 581,770.0 581.5,780.3 582,756.9 582.5,778.0 583,764.1 583.5,769.7 584,740.4 584.5,765.5 585,735.5 585.5,732.0 586,729.3 586.5,753.7 587,735.3 587.5,754.2 588,740.1 588.5,761.2 589,757.1 589.5,764.4 590,763.1 590.5,770.0 591,769.5 591.5,780.7 592,756.9 592.5,758.8 593,727.6 593.5,736.2 594,703.1 594.5,718.9 595,684.4 595.5,691.6 596,697.0 596.5,733.7 597,722.8 597.5,756.1 598,747.2 598.5,763.8 599,747.0 599.5,780.4 600,779.4 600.5,796.3 601,796.4 601.5,796.4 602,784.1 602.5,790.1 603,762.7 603.5,784.6 604,750.6 604.5,794.9 605,762.2 605.5,767.6 606,736.8 606.5,741.6 607,724.1 607.5,714.0 608,700.4 608.5,717.4 609,670.9 609.5,700.0 610,709.8 610.5,738.7 611,728.8 611.5,759.6 612,761.9 612.5,784.3 613,770.7 613.5,785.4 614,768.3 614.5,772.0 615,756.7 615.5,751.0 616,730.6 616.5,734.3 617,693.2 617.5,687.1 618,664.4 618.5,689.8 619,683.6 619.5,725.0 620,710.7 620.5,735.7 621,736.8 621.5,755.6 622,755.1 622.5,743.3 623,722.7 623.5,708.6 624,680.0 624.5,687.7 625,659.7 625.5,688.6 626,642.2 626.5,626.5 627,645.4 627.5,668.9 628,680.9 628.5,704.4 629,712.3 629.5,738.2 630,747.6 630.5,767.1 631,774.8 631.5,778.5 632,767.4 632.5,786.3 633,748.6 633.5,746.5 634,708.5 634.5,716.0 635,709.9 635.5,743.0 636,732.9 636.5,747.3 637,746.1 637.5,760.2 638,755.1 638.5,771.6 639,763.2 639.5,756.4 640,728.5 640.5,736.7 641,711.6 641.5,714.4 642,671.1 642.5,676.1 643,654.9 643.5,648.4 644,615.7 644.5,612.2 645,588.7 645.5,570.9 646,549.5 646.5,532.3 647,504.4 647.5,490.9 648,454.1 648.5,456.4 649,419.1 649.5,420.9 650,345.4 650.5,363.1 651,373.2 651.5,399.1 652,405.1 652.5,443.6 653,455.8 653.5,477.7 654,488.3 654.5,517.7 655,520.6 655.5,554.6 656,549.2 656.5,583.1 657,582.2 657.5,612.7 658,607.7 658.5,651.2 659,653.7 659.5,679.6 660,679.1 660.5,710.7 661,683.0 661.5,693.5 662,676.4 662.5,675.4 663,670.5 663.5,703.5 664,697.3 664.5,714.3 665,711.4 665.5,727.0 666,712.1 666.5,732.5 667,715.5 667.5,697.3 668,670.3 668.5,649.9 669,613.8 669.5,612.8 670,614.7 670.5,645.0 671,648.2 671.5,666.8 672,666.8 672.5,678.8 673,675.8 673.5,695.7 674,699.9 674.5,707.0 675,699.7 675.5,712.4 676,710.8 676.5,733.1 677,710.4 677.5,717.7 678,713.4 678.5,724.1 679,715.3 679.5,721.6 680,713.7 680.5,728.1 681,692.8 681.5,710.3 682,708.9 682.5,721.7 683,714.1 683.5,732.7 684,720.5 684.5,720.6 685,699.2 685.5,696.2 686,676.7 686.5,668.1 687,632.9 687.5,632.6 688,621.6 688.5,646.3 689,656.8 689.5,670.6 690,675.5 690.5,694.9 691,697.7 691.5,708.3 692,710.4 692.5,721.4 693,715.0 693.5,728.8 694,720.7 694.5,738.2 695,726.1 695.5,727.7 696,715.3 696.5,711.3 697,686.9 697.5,675.2 698,634.1 698.5,637.9 699,639.3 699.5,657.0 700,651.9 700.5,677.8 701,655.2 701.5,691.2 702,654.8 702.5,654.6 703,631.6 703.5,653.8 704,651.8 704.5,666.9 705,644.2 705.5,628.7 706,616.0 706.5,638.3 707,642.1 707.5,662.2 708,681.8 708.5,711.8 709,716.3 709.5,775.1 710,800.1 710.5,838.9 711,793.7 711.5,757.7 712,713.8 712.5,692.7 713,646.5 713.5,631.0 714,610.1 714.5,598.0 715,576.3 715.5,558.6 716,527.1 716.5,514.7 717,480.9 717.5,461.2 718,435.5 718.5,421.2 719,385.8 719.5,380.2 720,334.4 720.5,320.6 721,321.6 721.5,363.6 722,379.2 722.5,404.4 723,420.8 723.5,448.0 724,463.8 724.5,493.0 725,510.9 725.5,544.4 726,553.3 726.5,581.0 727,592.1 727.5,615.7 728,627.6 728.5,659.1 729,658.6 729.5,691.0 730,694.8 730.5,694.1 731,662.7 731.5,643.6 732,648.5 732.5,667.4 733,675.7 733.5,691.6 734,694.9 734.5,715.0 735,720.1 735.5,736.3 736,740.5 736.5,761.2 737,749.8 737.5,774.1 738,757.7 738.5,760.1 739,731.6 739.5,730.2 740,702.2 740.5,691.6 741,661.8 741.5,648.7 742,615.9 742.5,603.8 743,611.0 743.5,642.2 744,658.1 744.5,686.0 745,700.8 745.5,723.3 746,726.5 746.5,743.6 747,738.4 747.5,754.3 748,751.4 748.5,756.5 749,756.3 749.5,763.4 750,763.9 750.5,769.0 751,765.1 751.5,771.3 752,765.0 752.5,774.0 753,777.9 753.5,789.0 754,785.9 754.5,782.9 755,769.4 755.5,775.1 756,770.5 756.5,783.4 757,771.8 757.5,776.6 758,769.4 758.5,774.8 759,769.0 759.5,774.4 760,752.4 760.5,752.1 761,729.6 761.5,716.7 762,697.5 762.5,680.4 763,659.5 763.5,671.0 764,680.2 764.5,698.6 765,713.3 765.5,731.3 766,732.0 766.5,748.6 767,745.1 767.5,755.9 768,750.8 768.5,746.4 769,729.9 769.5,722.5 770,698.0 770.5,685.8 771,679.0 771.5,705.4 772,708.3 772.5,734.5 773,727.5 773.5,755.5 774,755.4 774.5,751.1 775,740.8 775.5,746.2 776,750.7 776.5,763.8 777,762.7 777.5,770.7 778,766.5 778.5,776.3 779,771.0 779.5,773.7 780,767.9 780.5,774.2 781,771.9 781.5,774.5 782,761.3 782.5,768.4 783,757.1 783.5,759.4 784,747.9 784.5,757.8 785,753.8 785.5,760.8 786,760.2 786.5,775.2 787,776.7 787.5,788.8 788,789.5 788.5,797.7 789,787.8 789.5,784.1 790,774.0 790.5,772.5 791,759.0 791.5,763.5 792,756.1 792.5,763.9 793,764.5 793.5,768.5 794,750.0 794.5,749.0 795,732.8 795.5,729.8 796,730.1 796.5,747.8 797,745.4 797.5,758.0 798,754.1 798.5,767.8 799,763.5 799.5,774.8 800,776.4 800.5,783.4 801,772.8 801.5,777.0 802,762.8 802.5,773.6 803,767.5 803.5,775.3 804,772.2 804.5,774.7 805,773.9 805.5,782.0 806,775.9 806.5,782.6 807,780.2 807.5,785.3 808,784.8 808.5,788.5 809,788.5 809.5,786.7 810,777.2 810.5,776.8 811,757.4 811.5,767.2 812,764.1 812.5,772.0 813,762.8 813.5,762.9 814,745.2 814.5,751.4 815,749.8 815.5,764.4 816,767.8 816.5,780.0 817,776.0 817.5,794.2 818,791.5 818.5,796.1 819,791.4 819.5,795.8 820,785.6 820.5,796.2 821,787.4 821.5,799.1 822,788.1 822.5,785.5 823,766.2 823.5,765.1 824,745.7 824.5,748.0 825,750.4 825.5,765.8 826,764.9 826.5,774.2 827,773.5 827.5,781.8 828,769.9 828.5,765.5 829,748.7 829.5,736.7 830,715.5 830.5,728.3 831,738.6 831.5,758.9 832,768.7 832.5,781.5 833,782.0 833.5,782.7 834,775.5 834.5,782.5 835,772.9 835.5,780.3 836,780.4 836.5,788.4 837,782.4 837.5,797.0 838,795.5 838.5,800.2 839,789.6 839.5,785.5 840,769.1 840.5,758.7 841,738.0 841.5,728.6 842,715.0 842.5,734.8 843,737.3 843.5,755.4 844,753.5 844.5,764.4 845,767.4 845.5,781.5 846,779.8 846.5,793.8 847,786.5 847.5,801.0 848,786.0 848.5,784.4 849,767.1 849.5,774.3 850,768.9 850.5,781.9 851,781.7 851.5,790.2 852,793.6 852.5,800.9 853,799.7 853.5,810.0 854,805.9 854.5,811.0 855,805.8 855.5,812.0 856,808.8 856.5,814.7 857,801.8 857.5,809.5 858,792.2 858.5,793.9 859,776.3 859.5,773.6 860,768.6 860.5,777.1 861,777.9 861.5,783.6 862,781.0 862.5,790.4 863,790.5 863.5,794.9 864,777.8 864.5,777.9 865,762.6 865.5,765.1 866,765.7 866.5,773.1 867,769.5 867.5,774.3 868,769.6 868.5,773.8 869,769.2 869.5,771.8 870,769.5 870.5,770.8 871,764.4 871.5,767.9 872,759.6 872.5,761.0 873,754.4 873.5,757.4 874,752.1 874.5,751.4 875,741.6 875.5,737.4 876,716.8 876.5,713.4 877,697.6 877.5,695.7 878,676.2 878.5,696.9 879,705.9 879.5,726.3 880,716.7 880.5,739.6 881,715.6 881.5,734.1 882,689.7 882.5,686.4 883,675.5 883.5,719.2 884,718.5 884.5,757.4 885,744.1 885.5,755.2 886,718.1 886.5,728.9 887,685.5 887.5,666.9 888,622.7 888.5,616.8 889,627.6 889.5,672.1 890,677.9 890.5,703.2 891,711.4 891.5,745.2 892,697.6 892.5,680.0 893,628.2 893.5,595.7 894,520.0 894.5,484.1 895,513.6 895.5,585.6 896,613.7 896.5,660.3 897,687.4 897.5,733.1 898,729.5 898.5,773.8 899,785.4 899.5,817.2 900,800.0 900.5,811.3 901,775.2 901.5,782.8 902,733.6 902.5,714.3 903,674.3 903.5,642.1 904,582.5 904.5,617.7 905,622.7 905.5,652.4 906,664.2 906.5,697.1 907,684.9 907.5,700.5 908,702.7 908.5,730.3 909,723.7 909.5,766.7 910,747.1 910.5,812.8 911,773.6 911.5,804.7 912,780.5 912.5,768.8 913,724.3 913.5,718.8 914,679.3 914.5,671.3 915,676.2 915.5,723.6 916,699.7 916.5,720.9 917,723.6 917.5,755.1 918,738.5 918.5,756.6 919,749.9 919.5,769.1 920,755.6 920.5,744.2 921,707.7 921.5,696.0 922,637.9 922.5,659.2 923,623.7 923.5,670.2 924,659.0 924.5,681.4 925,700.4 925.5,737.4 926,745.8 926.5,763.7 927,759.8 927.5,772.1 928,775.8 928.5,818.6 929,790.3 929.5,792.6 930,765.1 930.5,748.2 931,693.7 931.5,688.9 932,659.4 932.5,693.7 933,645.0 933.5,643.8 934,614.1 934.5,605.6 935,568.7 935.5,567.2 936,524.0 936.5,516.6 937,483.2 937.5,486.4 938,437.5 938.5,433.1 939,392.9 939.5,388.3 940,339.2 940.5,337.9 941,353.1 941.5,399.6 942,397.3 942.5,439.4 943,445.2 943.5,487.8 944,499.0 944.5,536.7 945,548.9 945.5,592.4 946,588.4 946.5,633.2 947,632.5 947.5,672.3 948,672.8 948.5,699.6 949,679.0 949.5,677.6 950,648.8 950.5,661.5 951,651.8 951.5,679.3 952,653.7 952.5,698.2 953,678.5 953.5,694.9 954,675.0 954.5,724.7 955,703.6 955.5,718.5 956,707.4 956.5,730.9 957,709.9 957.5,727.9 958,726.1 958.5,724.3 959,704.1 959.5,713.6 960,707.6 960.5,719.5 961,708.9 961.5,709.9 962,704.6 962.5,706.2 963,709.9 963.5,725.8 964,732.5 964.5,748.8 965,752.0 965.5,766.6 966,757.2 966.5,757.1 967,751.2 967.5,750.9 968,741.1 968.5,739.9 969,731.5 969.5,728.0 970,726.1 970.5,731.5 971,726.8 971.5,737.3 972,718.2 972.5,739.0 973,740.4 973.5,753.2 974,746.9 974.5,765.4 975,704.2 975.5,688.7 976,637.5 976.5,612.6 977,557.5 977.5,553.1 978,580.7 978.5,634.8 979,635.1 979.5,694.3 980,695.3 980.5,720.8 981,718.3 981.5,742.6 982,732.9 982.5,775.7 983,760.0 983.5,784.7 984,779.2 984.5,789.4 985,800.1 985.5,820.5 986,808.4 986.5,822.3 987,789.7 987.5,769.2 988,726.0 988.5,724.6 989,679.7 989.5,671.2 990,627.2 990.5,664.7 991,674.9 991.5,704.4 992,712.8 992.5,739.0 993,756.0 993.5,787.0 994,807.5 994.5,835.4 995,854.6 995.5,834.8 996,776.3 996.5,759.9 997,717.1 997.5,697.0 998,655.3 998.5,682.2 999,685.0 999.5,730.3 1000,751.3 1000.5,774.9 1001,744.7 1001.5,783.4 1002,768.7 1002.5,780.6 1003,737.1 1003.5,724.8 1004,688.9 1004.5,690.4 1005,646.9 1005.5,672.6 1006,654.5 1006.5,697.3 1007,681.9 1007.5,728.6 1008,702.9 1008.5,731.7 1009,738.9 1009.5,770.7 1010,784.2 1010.5,805.1 1011,791.0 1011.5,815.4 1012,779.0 1012.5,803.5 1013,763.7 1013.5,786.8 1014,726.5 1014.5,712.4 1015,675.8 1015.5,676.1 1016,673.3 1016.5,696.6 1017,698.2 1017.5,716.9 1018,710.3 1018.5,740.2 1019,734.4 1019.5,787.0 1020,784.1 1020.5,820.1 1021,813.2 1021.5,843.9 1022,811.9 1022.5,824.1 1023,804.1 1023.5,817.5 1024,788.7 1024.5,796.8 1025,753.5 1025.5,753.9 1026,700.0 1026.5,691.2 1027,656.9 1027.5,640.8 1028,589.8 1028.5,562.1 1029,502.2 1029.5,483.9 1030,465.5 1030.5,512.4 1031,518.7 1031.5,567.2 1032,586.6 1032.5,640.8 1033,647.8 1033.5,689.0 1034,698.2 1034.5,730.1 1035,740.0 1035.5,786.9 1036,787.8 1036.5,799.8 1037,772.8 1037.5,796.1 1038,778.1 1038.5,773.8 1039,739.1 1039.5,721.4 1040,679.7 1040.5,659.4 1041,598.8 1041.5,589.8 1042,607.8 1042.5,654.2 1043,674.6 1043.5,706.5 1044,720.5 1044.5,739.4 1045,718.6 1045.5,708.6 1046,690.9 1046.5,686.9 1047,713.0 1047.5,751.8 1048,736.4 1048.5,772.6 1049,703.5 1049.5,684.4 1050,616.1 1050.5,650.4 1051,662.5 1051.5,699.5 1052,693.0 1052.5,720.1 1053,727.8 1053.5,747.6 1054,741.9 1054.5,743.6 1055,698.5 1055.5,702.0 1056,703.7 1056.5,757.6 1057,739.8 1057.5,736.5 1058,712.1 1058.5,728.2 1059,719.7 1059.5,744.6 1060,740.6 1060.5,761.9 1061,752.9 1061.5,801.1 1062,803.5 1062.5,806.3 1063,799.3 1063.5,805.1 1064,736.7 1064.5,736.5 1065,691.7 1065.5,697.5 1066,671.0 1066.5,718.6 1067,689.7 1067.5,732.5 1068,696.2 1068.5,709.0 1069,671.4 1069.5,699.7 1070,691.2 1070.5,733.7 1071,701.9 1071.5,736.7 1072,728.4 1072.5,747.9 1073,733.8 1073.5,766.1 1074,748.2 1074.5,781.7 1075,772.8 1075.5,791.1 1076,741.4 1076.5,739.9 1077,701.5 1077.5,688.0 1078,668.5 1078.5,686.4 1079,689.9 1079.5,698.3 1080,671.0 1080.5,686.7 1081,680.8 1081.5,679.1 1082,657.1 1082.5,662.0 1083,649.8 1083.5,682.8 1084,683.4 1084.5,709.8 1085,692.3 1085.5,710.1 1086,709.7 1086.5,728.1 1087,724.1 1087.5,730.0 1088,721.7 1088.5,726.2 1089,714.3 1089.5,720.0 1090,703.8 1090.5,701.5 1091,695.6 1091.5,704.0 1092,708.5 1092.5,716.5 1093,717.4 1093.5,724.3 1094,724.4 1094.5,730.2 1095,727.0 1095.5,734.8 1096,732.9 1096.5,742.4 1097,741.5 1097.5,746.7 1098,747.2 1098.5,746.2 1099,741.0 1099.5,742.7 1100,739.0 1100.5,741.4 1101,740.1 1101.5,738.3 1102,729.7 1102.5,730.4 1103,719.7 1103.5,719.5 1104,714.0 1104.5,712.7 1105,716.2 1105.5,725.6 1106,729.3 1106.5,738.0 1107,737.4 1107.5,742.6 1108,744.0 1108.5,750.5 1109,753.7 1109.5,763.6 1110,757.5 1110.5,761.6 1111,750.0 1111.5,745.9 1112,736.4 1112.5,734.6 1113,722.9 1113.5,729.1 1114,729.5 1114.5,746.3 1115,742.9 1115.5,759.2 1116,759.8 1116.5,766.8 1117,772.6 1117.5,782.8 1118,775.8 1118.5,787.4 1119,781.5 1119.5,787.8 1120,785.1 1120.5,803.3 1121,797.2 1121.5,805.0 1122,801.0 1122.5,813.4 1123,806.4 1123.5,819.3 1124,815.3 1124.5,816.1 1125,808.7 1125.5,813.9 1126,815.8 1126.5,822.5 1127,814.9 1127.5,828.0 1128,821.6 1128.5,827.4 1129,805.9 1129.5,827.2 1130,818.7 1130.5,825.7 1131,816.5 1131.5,827.8 1132,813.1 1132.5,822.8 1133,819.9 1133.5,822.6 1134,813.2 1134.5,814.5 1135,809.5 1135.5,814.6 1136,794.4 1136.5,810.7 1137,799.3 1137.5,803.1 1138,783.4 1138.5,794.7 1139,783.6 1139.5,793.0 1140,781.7 1140.5,791.9 1141,777.3 1141.5,779.0 1142,768.7 1142.5,771.1 1143,761.6 1143.5,766.3 1144,760.6 1144.5,764.1 1145,760.0 1145.5,760.4 1146,751.7 1146.5,758.9 1147,755.2 1147.5,760.5 1148,760.1 1148.5,763.4 1149,759.7 1149.5,765.1 1150,768.9 1150.5,766.3 1151,766.7 1151.5,768.2 1152,769.8 1152.5,769.7 1153,765.1 1153.5,761.7 1154,762.6 1154.5,756.0 1155,755.2 1155.5,751.7 1156,749.9 1156.5,749.2 1157,744.5 1157.5,751.3 1158,742.0 1158.5,743.5 1159,740.2 1159.5,735.4 1160,738.3 1160.5,734.2 1161,727.9 1161.5,734.7 1162,735.6 1162.5,731.1 1163,731.8 1163.5,727.7 1164,732.0 1164.5,727.8 1165,728.6 1165.5,725.1 1166,724.3 1166.5,726.9 1167,723.3 1167.5,722.2 1168,719.1 1168.5,722.3 1169,722.0 1169.5,719.8 1170,724.0 1170.5,720.1 1171,721.3 1171.5,718.1 1172,725.7 1172.5,720.5 1173,720.6 1173.5,719.5 1174,721.2 1174.5,719.1 1175,715.5 1175.5,719.7 1176,719.2 1176.5,718.8 1177,717.9 1177.5,719.5 1178,723.6 1178.5,712.9 1179,717.6 1179.5,717.7 1180,720.5 1180.5,721.6 1181,716.6 1181.5,715.1 1182,717.7 1182.5,715.8 1183,710.0 1183.5,714.5 1184,715.5 1184.5,718.9 1185,720.6 1185.5,718.6 1186,721.0 1186.5,716.5 1187,714.5 1187.5,715.7 1188,716.7 1188.5,715.8 1189,716.6 1189.5,715.7 1190,718.0 1190.5,714.2 1191,714.3 1191.5,717.8 1192,715.1 1192.5,717.1 1193,714.3 1193.5,714.9 1194,717.9 1194.5,716.1 1195,715.5 1195.5,715.7 1196,711.1 1196.5,719.9 1197,716.5 1197.5,714.0 1198,715.6 1198.5,718.1 1199,714.6 1199.5,715.6 1200,716.9 1200.5,714.3 1201,716.6 1201.5,713.6 1202,714.8 1202.5,711.9 1203,710.7 1203.5,710.6 1204,715.7 1204.5,713.8 1205,714.3 1205.5,712.6 1206,714.7 1206.5,711.9 1207,711.9 1207.5,714.6 1208,708.9 1208.5,712.5 1209,713.3 1209.5,711.5 1210,717.1 1210.5,711.1 1211,713.5 1211.5,713.2 1212,712.2 1212.5,715.1 1213,706.2 1213.5,712.6 1214,715.2 1214.5,712.0 1215,709.4 1215.5,708.4 1216,708.4 1216.5,710.3 1217,710.1 1217.5,710.7 1218,712.6 1218.5,711.3 1219,718.3 1219.5,712.3 1220,707.9 1220.5,711.0 1221,710.6 1221.5,712.2 1222,707.5 1222.5,707.8 1223,707.7 1223.5,712.1 1224,712.6 1224.5,708.6 1225,709.9 1225.5,710.7 1226,712.1 1226.5,710.0 1227,709.6 1227.5,709.3 1228,708.5 1228.5,711.4 1229,708.8 1229.5,713.2 1230,708.0 1230.5,708.8 1231,707.4 1231.5,708.3 1232,707.2 1232.5,710.1 1233,708.2 1233.5,705.1 1234,710.2 1234.5,712.9 1235,706.3 1235.5,709.3 1236,708.8 1236.5,708.3 1237,708.2 1237.5,709.1 1238,708.5 1238.5,706.8 1239,706.3 1239.5,709.5 1240,706.4 1240.5,707.3 1241,711.1 1241.5,707.0 1242,709.1 1242.5,708.6 1243,707.0 1243.5,709.1 1244,704.8 1244.5,706.2 1245,712.4 1245.5,710.9 1246,706.6 1246.5,706.7 1247,703.2 1247.5,707.3 1248,703.2 1248.5,710.4 1249,707.9 1249.5,710.3 1250,704.7 1250.5,708.1 1251,706.6 1251.5,700.6 1252,706.7 1252.5,705.5 1253,709.2 1253.5,711.1 1254,701.7 1254.5,710.2 1255,707.4 1255.5,709.2 1256,706.9 1256.5,707.5 1257,705.3 1257.5,705.2 1258,702.0 1258.5,701.5 1259,707.5 1259.5,709.8 1260,704.4 1260.5,701.9 1261,707.8 1261.5,704.9 1262,709.4 1262.5,708.2 1263,704.4 1263.5,703.3 1264,700.0 1264.5,708.0 1265,704.8 1265.5,703.4 1266,707.0 1266.5,705.1 1267,704.1 1267.5,704.3 1268,702.2 1268.5,703.0 1269,700.0 1269.5,707.6 1270,705.1 1270.5,701.7 1271,703.7 1271.5,701.4 1272,701.8" fill="none" stroke="#f0f020" stroke-width="1.35" stroke-linejoin="round" shape-rendering="crispEdges"/>
<polyline points="65,659.8 65.5,660.0 66,658.1 66.5,658.2 67,659.6 67.5,662.6 68,660.5 68.5,665.2 69,661.3 69.5,665.2 70,664.9 70.5,674.6 71,672.0 71.5,673.2 72,668.6 72.5,668.2 73,665.8 73.5,665.8 74,663.9 74.5,669.6 75,669.7 75.5,669.9 76,666.3 76.5,667.1 77,666.8 77.5,668.3 78,666.3 78.5,666.6 79,665.5 79.5,667.3 80,666.6 80.5,672.6 81,671.3 81.5,676.1 82,670.8 82.5,672.8 83,667.7 83.5,670.9 84,669.2 84.5,669.8 85,663.9 85.5,667.0 86,663.9 86.5,667.1 87,664.1 87.5,664.7 88,659.2 88.5,661.2 89,658.4 89.5,658.1 90,650.6 90.5,653.1 91,654.6 91.5,659.7 92,659.8 92.5,663.0 93,661.8 93.5,665.9 94,662.5 94.5,664.0 95,661.8 95.5,662.6 96,656.3 96.5,654.3 97,646.2 97.5,650.3 98,653.0 98.5,650.2 99,638.1 99.5,627.2 100,611.9 100.5,621.3 101,627.7 101.5,639.9 102,646.4 102.5,657.7 103,663.2 103.5,669.5 104,671.6 104.5,677.6 105,677.8 105.5,684.2 106,682.9 106.5,692.7 107,687.1 107.5,688.4 108,686.9 108.5,688.2 109,686.1 109.5,693.8 110,691.0 110.5,690.5 111,682.6 111.5,683.1 112,682.3 112.5,683.9 113,683.5 113.5,684.2 114,680.2 114.5,679.3 115,675.0 115.5,671.8 116,662.2 116.5,662.3 117,662.4 117.5,668.4 118,671.9 118.5,676.6 119,675.7 119.5,681.3 120,680.5 120.5,686.5 121,685.7 121.5,692.4 122,687.7 122.5,689.8 123,687.3 123.5,688.0 124,682.6 124.5,686.6 125,682.5 125.5,688.9 126,689.3 126.5,691.3 127,690.6 127.5,689.6 128,687.3 128.5,689.3 129,686.1 129.5,686.8 130,680.5 130.5,680.3 131,673.5 131.5,668.8 132,666.9 132.5,678.0 133,679.9 133.5,688.7 134,685.9 134.5,689.1 135,673.7 135.5,668.1 136,655.7 136.5,657.2 137,643.2 137.5,633.7 138,618.8 138.5,644.7 139,661.9 139.5,685.0 140,703.5 140.5,727.5 141,731.5 141.5,735.9 142,733.8 142.5,733.4 143,729.0 143.5,723.1 144,713.7 144.5,719.6 145,710.7 145.5,715.2 146,714.2 146.5,716.4 147,714.9 147.5,718.6 148,716.9 148.5,715.8 149,710.6 149.5,714.6 150,706.9 150.5,709.1 151,703.8 151.5,702.9 152,695.7 152.5,699.7 153,695.5 153.5,700.3 154,694.8 154.5,685.5 155,663.6 155.5,639.6 156,605.1 156.5,577.5 157,541.7 157.5,567.8 158,585.1 158.5,604.6 159,612.8 159.5,630.7 160,633.6 160.5,650.0 161,654.0 161.5,664.3 162,661.7 162.5,666.1 163,663.3 163.5,667.7 164,665.8 164.5,671.6 165,666.8 165.5,666.4 166,663.0 166.5,648.2 167,603.4 167.5,567.2 168,520.9 168.5,482.5 169,433.6 169.5,393.6 170,348.8 170.5,379.0 171,399.8 171.5,428.1 172,443.5 172.5,468.5 173,444.9 173.5,395.8 174,341.1 174.5,378.7 175,402.2 175.5,436.7 176,462.6 176.5,484.9 177,437.9 177.5,396.1 178,345.0 178.5,387.7 179,419.8 179.5,458.2 180,488.0 180.5,527.5 181,557.7 181.5,550.1 182,497.6 182.5,448.4 183,396.1 183.5,438.0 184,474.5 184.5,519.8 185,556.8 185.5,606.2 186,641.8 186.5,683.6 187,685.8 187.5,702.1 188,696.5 188.5,706.3 189,702.3 189.5,706.7 190,698.7 190.5,699.9 191,683.3 191.5,674.2 192,656.3 192.5,647.5 193,628.0 193.5,616.9 194,600.5 194.5,588.6 195,571.5 195.5,560.4 196,538.9 196.5,523.9 197,504.5 197.5,490.7 198,473.2 198.5,458.2 199,437.6 199.5,426.4 200,409.6 200.5,394.2 201,370.1 201.5,375.6 202,344.4 202.5,331.1 203,310.9 203.5,298.7 204,278.7 204.5,268.5 205,243.1 205.5,235.5 206,212.6 206.5,203.6 207,174.8 207.5,261.7 208,326.9 208.5,415.0 209,459.8 209.5,536.1 210,594.4 210.5,652.0 211,687.9 211.5,698.4 212,691.8 212.5,696.9 213,695.9 213.5,698.2 214,691.2 214.5,706.7 215,693.6 215.5,696.4 216,693.7 216.5,696.8 217,682.6 217.5,696.9 218,694.1 218.5,688.2 219,663.2 219.5,656.9 220,628.1 220.5,607.3 221,575.3 221.5,556.8 222,521.2 222.5,565.8 223,591.8 223.5,624.2 224,643.9 224.5,671.3 225,676.3 225.5,698.0 226,687.8 226.5,711.0 227,689.2 227.5,692.5 228,665.4 228.5,678.1 229,658.3 229.5,663.0 230,648.2 230.5,655.3 231,638.5 231.5,646.4 232,635.2 232.5,655.6 233,648.1 233.5,663.0 234,652.2 234.5,666.5 235,661.4 235.5,673.4 236,679.0 236.5,691.5 237,682.2 237.5,692.4 238,670.0 238.5,665.3 239,630.4 239.5,613.2 240,577.5 240.5,551.6 241,508.3 241.5,540.7 242,563.2 242.5,596.6 243,604.8 243.5,629.4 244,610.1 244.5,596.6 245,579.1 245.5,567.5 246,554.9 246.5,585.4 247,588.9 247.5,615.5 248,603.6 248.5,638.7 249,634.9 249.5,658.3 250,652.9 250.5,671.1 251,668.9 251.5,691.2 252,673.8 252.5,689.2 253,692.2 253.5,701.7 254,696.5 254.5,707.5 255,694.3 255.5,703.2 256,688.9 256.5,704.3 257,690.0 257.5,700.9 258,673.5 258.5,679.0 259,665.8 259.5,663.5 260,655.0 260.5,658.1 261,658.0 261.5,672.6 262,667.2 262.5,684.2 263,683.0 263.5,698.8 264,697.4 264.5,704.1 265,670.2 265.5,649.2 266,605.1 266.5,589.0 267,518.3 267.5,560.8 268,566.2 268.5,600.0 269,601.8 269.5,632.3 270,636.4 270.5,659.8 271,651.8 271.5,680.6 272,674.0 272.5,699.2 273,690.5 273.5,681.5 274,657.1 274.5,634.6 275,592.0 275.5,563.4 276,504.7 276.5,543.7 277,556.6 277.5,580.6 278,588.5 278.5,624.7 279,588.5 279.5,595.9 280,587.9 280.5,618.6 281,627.4 281.5,655.6 282,664.1 282.5,676.9 283,631.0 283.5,641.0 284,636.1 284.5,655.5 285,660.1 285.5,675.1 286,668.3 286.5,691.7 287,669.1 287.5,656.0 288,620.6 288.5,599.5 289,560.9 289.5,537.6 290,478.0 290.5,526.3 291,557.8 291.5,602.6 292,616.1 292.5,653.9 293,655.5 293.5,688.7 294,694.8 294.5,716.9 295,703.9 295.5,722.5 296,713.8 296.5,726.0 297,712.3 297.5,707.0 298,647.4 298.5,622.8 299,561.0 299.5,521.3 300,466.6 300.5,429.0 301,371.0 301.5,425.0 302,450.2 302.5,491.0 303,516.8 303.5,553.6 304,577.5 304.5,589.4 305,543.4 305.5,537.0 306,486.5 306.5,566.3 307,623.8 307.5,680.0 308,692.5 308.5,722.8 309,722.2 309.5,706.2 310,681.9 310.5,691.3 311,696.8 311.5,718.4 312,709.2 312.5,710.0 313,670.3 313.5,668.2 314,587.1 314.5,577.5 315,519.4 315.5,556.3 316,576.1 316.5,608.2 317,592.1 317.5,560.2 318,508.2 318.5,480.2 319,430.0 319.5,471.5 320,479.7 320.5,520.0 321,522.3 321.5,568.2 322,564.9 322.5,613.1 323,626.0 323.5,652.1 324,653.5 324.5,690.1 325,698.3 325.5,717.6 326,725.9 326.5,741.2 327,722.2 327.5,723.6 328,654.2 328.5,615.0 329,553.2 329.5,508.2 330,440.5 330.5,472.7 331,492.6 331.5,528.7 332,547.2 332.5,582.5 333,594.1 333.5,626.2 334,629.6 334.5,638.7 335,588.2 335.5,555.2 336,501.0 336.5,472.6 337,406.2 337.5,472.8 338,506.2 338.5,558.9 339,580.9 339.5,629.2 340,621.8 340.5,640.0 341,610.8 341.5,583.7 342,530.7 342.5,593.3 343,608.3 343.5,650.8 344,658.1 344.5,686.1 345,693.3 345.5,718.9 346,716.9 346.5,732.4 347,718.2 347.5,755.1 348,738.9 348.5,759.4 349,750.9 349.5,754.4 350,737.2 350.5,737.3 351,707.6 351.5,703.0 352,674.1 352.5,663.5 353,637.0 353.5,623.4 354,631.0 354.5,665.7 355,630.8 355.5,615.9 356,579.4 356.5,607.5 357,610.9 357.5,648.8 358,659.5 358.5,679.7 359,681.8 359.5,722.8 360,715.9 360.5,721.7 361,684.2 361.5,674.0 362,633.4 362.5,622.0 363,588.6 363.5,625.8 364,644.9 364.5,676.6 365,675.8 365.5,717.4 366,677.0 366.5,677.7 367,619.7 367.5,665.2 368,688.5 368.5,721.7 369,724.2 369.5,762.2 370,744.2 370.5,749.5 371,704.0 371.5,685.6 372,632.6 372.5,605.0 373,525.8 373.5,591.3 374,602.5 374.5,673.6 375,669.2 375.5,706.8 376,723.3 376.5,739.7 377,724.9 377.5,730.0 378,699.5 378.5,733.3 379,722.2 379.5,751.6 380,708.2 380.5,701.7 381,669.6 381.5,649.8 382,600.8 382.5,579.0 383,518.8 383.5,575.0 384,601.7 384.5,657.1 385,666.4 385.5,709.9 386,722.9 386.5,747.8 387,742.2 387.5,750.7 388,740.9 388.5,744.7 389,721.8 389.5,718.2 390,692.5 390.5,679.2 391,649.1 391.5,637.1 392,582.3 392.5,547.5 393,457.8 393.5,516.3 394,542.5 394.5,599.0 395,617.8 395.5,651.3 396,652.5 396.5,696.0 397,703.1 397.5,735.2 398,743.5 398.5,775.0 399,745.4 399.5,736.7 400,688.7 400.5,672.8 401,602.3 401.5,641.7 402,651.8 402.5,682.2 403,696.0 403.5,725.1 404,696.2 404.5,689.5 405,666.3 405.5,649.7 406,656.3 406.5,684.1 407,696.6 407.5,726.1 408,689.3 408.5,661.9 409,590.0 409.5,544.8 410,463.6 410.5,548.6 411,609.6 411.5,650.8 412,665.2 412.5,703.7 413,686.6 413.5,716.8 414,684.6 414.5,672.8 415,645.7 415.5,644.4 416,650.6 416.5,668.7 417,674.9 417.5,710.6 418,691.6 418.5,715.6 419,712.4 419.5,734.2 420,732.2 420.5,744.3 421,749.6 421.5,758.4 422,723.9 422.5,720.8 423,681.7 423.5,671.4 424,621.4 424.5,646.9 425,648.0 425.5,635.9 426,591.4 426.5,628.4 427,633.4 427.5,669.4 428,666.8 428.5,711.8 429,697.1 429.5,718.8 430,703.0 430.5,739.3 431,729.9 431.5,752.6 432,742.3 432.5,758.4 433,747.9 433.5,765.6 434,760.2 434.5,764.0 435,761.4 435.5,769.7 436,757.9 436.5,764.2 437,724.0 437.5,718.8 438,696.5 438.5,704.4 439,645.0 439.5,623.7 440,586.1 440.5,611.9 441,621.1 441.5,658.1 442,671.8 442.5,654.7 443,599.3 443.5,627.7 444,641.4 444.5,670.4 445,679.5 445.5,675.0 446,680.4 446.5,702.8 447,695.0 447.5,721.3 448,706.8 448.5,703.7 449,665.3 449.5,657.4 450,617.5 450.5,608.9 451,591.6 451.5,634.2 452,634.0 452.5,669.7 453,679.3 453.5,704.9 454,712.6 454.5,735.1 455,741.1 455.5,759.6 456,743.4 456.5,780.4 457,758.5 457.5,765.2 458,758.7 458.5,776.6 459,761.4 459.5,795.8 460,801.3 460.5,803.4 461,773.1 461.5,771.7 462,753.7 462.5,760.0 463,754.6 463.5,746.4 464,709.9 464.5,710.3 465,670.5 465.5,659.1 466,631.5 466.5,667.5 467,668.5 467.5,693.5 468,686.7 468.5,704.2 469,692.6 469.5,725.9 470,714.7 470.5,723.7 471,704.4 471.5,727.6 472,726.3 472.5,746.9 473,745.5 473.5,754.0 474,736.8 474.5,748.6 475,732.9 475.5,730.6 476,714.0 476.5,727.4 477,692.8 477.5,688.8 478,659.1 478.5,688.4 479,699.5 479.5,715.4 480,711.4 480.5,745.4 481,733.9 481.5,736.0 482,698.5 482.5,728.6 483,677.3 483.5,672.8 484,641.9 484.5,665.9 485,665.8 485.5,683.1 486,671.5 486.5,669.8 487,647.7 487.5,677.9 488,671.2 488.5,702.5 489,702.9 489.5,724.0 490,714.6 490.5,747.5 491,735.8 491.5,748.7 492,742.9 492.5,756.4 493,750.1 493.5,767.0 494,753.1 494.5,787.4 495,755.9 495.5,800.7 496,797.8 496.5,800.9 497,757.5 497.5,731.2 498,672.0 498.5,636.0 499,566.5 499.5,619.7 500,638.1 500.5,629.5 501,633.2 501.5,672.5 502,680.3 502.5,712.6 503,725.4 503.5,746.8 504,731.9 504.5,759.9 505,732.2 505.5,715.9 506,681.6 506.5,664.3 507,615.4 507.5,619.2 508,631.9 508.5,659.7 509,664.6 509.5,698.2 510,700.6 510.5,722.6 511,714.7 511.5,731.6 512,732.6 512.5,750.9 513,736.7 513.5,761.7 514,734.5 514.5,710.4 515,648.9 515.5,625.7 516,569.3 516.5,532.9 517,518.4 517.5,576.4 518,588.6 518.5,640.3 519,664.1 519.5,699.8 520,707.7 520.5,730.8 521,730.5 521.5,740.4 522,707.0 522.5,691.2 523,654.4 523.5,649.4 524,602.0 524.5,590.2 525,547.5 525.5,544.7 526,491.5 526.5,470.2 527,479.5 527.5,533.5 528,534.6 528.5,568.2 529,582.4 529.5,609.8 530,611.7 530.5,656.7 531,659.5 531.5,697.8 532,701.5 532.5,734.3 533,734.4 533.5,752.5 534,733.9 534.5,757.3 535,755.2 535.5,766.9 536,758.9 536.5,765.0 537,748.4 537.5,739.4 538,712.6 538.5,693.7 539,691.8 539.5,744.8 540,747.1 540.5,772.3 541,748.6 541.5,766.1 542,743.1 542.5,752.2 543,725.9 543.5,726.7 544,703.5 544.5,711.8 545,701.9 545.5,723.7 546,719.1 546.5,739.9 547,736.5 547.5,745.0 548,735.4 548.5,755.4 549,743.5 549.5,765.3 550,745.4 550.5,762.6 551,754.0 551.5,761.2 552,755.9 552.5,766.3 553,745.1 553.5,752.8 554,721.8 554.5,705.6 555,668.5 555.5,654.7 556,599.4 556.5,575.3 557,531.1 557.5,499.9 558,438.9 558.5,473.7 559,478.3 559.5,517.5 560,514.5 560.5,592.8 561,582.3 561.5,625.2 562,629.4 562.5,652.1 563,669.1 563.5,690.9 564,694.7 564.5,717.3 565,652.3 565.5,621.6 566,546.5 566.5,507.9 567,439.2 567.5,487.6 568,509.2 568.5,543.5 569,569.2 569.5,614.6 570,640.0 570.5,693.4 571,716.5 571.5,733.9 572,719.0 572.5,700.4 573,646.1 573.5,614.1 574,575.9 574.5,552.4 575,559.1 575.5,603.8 576,611.7 576.5,650.1 577,652.4 577.5,677.9 578,691.1 578.5,730.5 579,713.5 579.5,747.6 580,744.6 580.5,755.7 581,759.9 581.5,759.3 582,740.4 582.5,774.3 583,755.6 583.5,778.3 584,768.9 584.5,766.7 585,730.2 585.5,728.8 586,698.8 586.5,687.9 587,653.6 587.5,641.9 588,634.4 588.5,679.6 589,680.8 589.5,703.5 590,713.4 590.5,728.2 591,732.5 591.5,754.7 592,746.6 592.5,763.5 593,741.0 593.5,738.4 594,709.2 594.5,707.3 595,663.6 595.5,654.7 596,608.2 596.5,659.0 597,682.8 597.5,710.9 598,721.6 598.5,756.1 599,761.6 599.5,775.9 600,756.0 600.5,782.2 601,769.3 601.5,793.6 602,773.8 602.5,778.6 603,766.7 603.5,772.6 604,746.5 604.5,753.0 605,714.4 605.5,738.4 606,711.9 606.5,727.8 607,692.1 607.5,681.9 608,657.8 608.5,643.7 609,606.5 609.5,642.8 610,634.2 610.5,679.7 611,665.8 611.5,720.2 612,713.9 612.5,743.1 613,734.2 613.5,761.0 614,732.4 614.5,736.0 615,690.7 615.5,666.0 616,625.8 616.5,601.7 617,551.1 617.5,514.1 618,455.1 618.5,485.5 619,505.6 619.5,565.2 620,569.7 620.5,604.3 621,627.0 621.5,675.1 622,682.8 622.5,716.8 623,710.8 623.5,710.4 624,676.3 624.5,668.0 625,635.1 625.5,663.5 626,603.2 626.5,556.1 627,498.8 627.5,469.3 628,398.1 628.5,451.4 629,475.3 629.5,523.6 630,546.1 630.5,584.2 631,608.1 631.5,649.1 632,653.2 632.5,697.2 633,709.0 633.5,707.2 634,672.7 634.5,684.0 635,694.4 635.5,717.5 636,727.0 636.5,749.7 637,743.5 637.5,784.8 638,779.8 638.5,799.4 639,799.3 639.5,811.5 640,794.6 640.5,774.5 641,743.9 641.5,751.7 642,691.9 642.5,685.9 643,665.0 643.5,654.8 644,631.2 644.5,619.9 645,596.0 645.5,599.1 646,560.2 646.5,560.4 647,527.0 647.5,509.3 648,485.8 648.5,468.9 649,449.2 649.5,433.0 650,397.0 650.5,385.5 651,344.9 651.5,351.4 652,345.3 652.5,390.8 653,404.5 653.5,429.5 654,441.0 654.5,475.2 655,488.2 655.5,512.0 656,529.1 656.5,562.5 657,553.7 657.5,584.0 658,592.8 658.5,619.2 659,626.8 659.5,658.3 660,650.0 660.5,643.3 661,614.5 661.5,597.8 662,612.7 662.5,633.2 663,644.5 663.5,676.4 664,669.0 664.5,693.7 665,696.3 665.5,719.3 666,688.2 666.5,667.8 667,622.9 667.5,659.6 668,675.8 668.5,701.2 669,693.7 669.5,683.2 670,657.9 670.5,641.5 671,612.1 671.5,622.9 672,620.3 672.5,643.3 673,644.5 673.5,662.9 674,662.5 674.5,698.3 675,693.2 675.5,701.1 676,704.4 676.5,711.4 677,698.3 677.5,727.7 678,714.5 678.5,725.2 679,717.7 679.5,721.4 680,707.0 680.5,716.4 681,709.9 681.5,719.1 682,708.7 682.5,729.4 683,703.3 683.5,716.0 684,697.0 684.5,691.1 685,663.9 685.5,659.7 686,624.2 686.5,607.5 687,609.8 687.5,646.2 688,648.5 688.5,686.4 689,688.6 689.5,707.7 690,702.0 690.5,720.9 691,713.9 691.5,726.2 692,712.3 692.5,716.7 693,714.9 693.5,720.9 694,681.5 694.5,652.4 695,607.1 695.5,569.1 696,522.2 696.5,483.6 697,428.7 697.5,474.9 698,499.9 698.5,538.8 699,560.6 699.5,601.1 700,606.8 700.5,575.0 701,512.7 701.5,473.8 702,421.1 702.5,458.4 703,471.9 703.5,518.5 704,544.5 704.5,579.4 705,592.9 705.5,571.2 706,521.6 706.5,487.1 707,445.1 707.5,500.2 708,523.0 708.5,586.9 709,621.1 709.5,691.8 710,731.7 710.5,796.8 711,779.3 711.5,755.8 712,706.2 712.5,675.1 713,626.9 713.5,595.3 714,556.8 714.5,560.4 715,528.4 715.5,516.6 716,479.1 716.5,458.7 717,424.7 717.5,419.2 718,385.9 718.5,365.1 719,334.7 719.5,313.0 720,282.1 720.5,309.8 721,319.9 721.5,351.3 722,366.7 722.5,397.0 723,414.2 723.5,452.5 724,464.9 724.5,500.6 725,510.1 725.5,540.4 726,550.2 726.5,575.2 727,591.6 727.5,612.9 728,625.0 728.5,650.5 729,664.5 729.5,695.3 730,693.1 730.5,689.0 731,662.7 731.5,633.9 732,558.1 732.5,496.1 733,427.6 733.5,467.6 734,485.5 734.5,524.3 735,543.0 735.5,575.0 736,583.4 736.5,627.7 737,630.3 737.5,674.4 738,679.1 738.5,713.2 739,724.9 739.5,746.9 740,714.4 740.5,703.5 741,664.6 741.5,647.9 742,606.0 742.5,585.2 743,541.4 743.5,588.9 744,607.2 744.5,645.7 745,672.1 745.5,696.4 746,699.6 746.5,713.6 747,709.5 747.5,722.9 748,715.5 748.5,732.0 749,720.7 749.5,736.8 750,735.2 750.5,746.6 751,733.2 751.5,729.4 752,710.8 752.5,732.6 753,725.7 753.5,738.6 754,738.2 754.5,749.6 755,741.9 755.5,756.7 756,753.6 756.5,760.1 757,750.3 757.5,760.3 758,749.9 758.5,758.2 759,755.7 759.5,759.9 760,749.9 760.5,743.1 761,716.2 761.5,702.6 762,668.7 762.5,653.9 763,623.4 763.5,645.8 764,656.7 764.5,674.2 765,685.5 765.5,707.3 766,706.0 766.5,719.7 767,722.3 767.5,733.8 768,737.0 768.5,748.9 769,742.7 769.5,739.3 770,722.8 770.5,714.2 771,686.5 771.5,667.7 772,639.7 772.5,661.7 773,673.3 773.5,697.3 774,699.9 774.5,716.4 775,719.7 775.5,720.1 776,724.8 776.5,741.9 777,740.1 777.5,751.9 778,751.9 778.5,757.8 779,755.7 779.5,764.8 780,751.6 780.5,754.5 781,745.5 781.5,754.7 782,739.8 782.5,737.8 783,736.0 783.5,743.2 784,744.9 784.5,755.9 785,756.4 785.5,773.5 786,776.8 786.5,791.1 787,777.9 787.5,781.2 788,767.9 788.5,768.2 789,762.6 789.5,766.9 790,751.0 790.5,744.2 791,725.9 791.5,732.2 792,723.6 792.5,738.8 793,737.3 793.5,748.4 794,736.7 794.5,728.9 795,712.9 795.5,705.7 796,690.3 796.5,714.0 797,716.3 797.5,728.3 798,727.2 798.5,738.3 799,741.4 799.5,747.7 800,750.7 800.5,757.9 801,741.2 801.5,740.5 802,727.8 802.5,718.9 803,721.7 803.5,728.7 804,732.5 804.5,742.3 805,743.9 805.5,754.7 806,740.9 806.5,740.3 807,739.4 807.5,759.9 808,765.8 808.5,781.4 809,777.4 809.5,778.2 810,759.3 810.5,757.4 811,736.8 811.5,734.4 812,716.3 812.5,698.6 813,676.4 813.5,690.3 814,701.0 814.5,713.3 815,720.2 815.5,733.1 816,732.5 816.5,748.7 817,751.0 817.5,759.7 818,751.9 818.5,770.3 819,762.8 819.5,768.9 820,769.0 820.5,775.2 821,769.5 821.5,768.9 822,761.9 822.5,765.9 823,750.6 823.5,749.5 824,737.4 824.5,739.1 825,727.8 825.5,739.6 826,744.0 826.5,759.5 827,756.2 827.5,766.3 828,760.4 828.5,752.0 829,731.6 829.5,723.0 830,700.6 830.5,686.9 831,693.4 831.5,716.8 832,727.8 832.5,742.9 833,733.7 833.5,749.7 834,749.5 834.5,761.4 835,760.4 835.5,767.9 836,765.4 836.5,775.9 837,773.0 837.5,785.0 838,782.2 838.5,795.6 839,791.0 839.5,789.1 840,767.3 840.5,757.3 841,736.0 841.5,717.8 842,694.5 842.5,674.1 843,649.9 843.5,669.4 844,680.9 844.5,698.9 845,706.6 845.5,720.4 846,727.3 846.5,744.5 847,748.6 847.5,753.9 848,747.7 848.5,760.6 849,767.0 849.5,785.3 850,782.2 850.5,777.5 851,762.4 851.5,755.9 852,756.4 852.5,766.1 853,767.1 853.5,775.8 854,778.7 854.5,785.6 855,782.4 855.5,780.9 856,768.3 856.5,764.8 857,750.4 857.5,750.7 858,736.2 858.5,726.1 859,713.9 859.5,716.4 860,719.1 860.5,731.7 861,737.1 861.5,755.4 862,760.9 862.5,779.6 863,768.2 863.5,767.6 864,758.8 864.5,767.0 865,762.8 865.5,772.5 866,761.7 866.5,767.2 867,763.1 867.5,765.6 868,755.3 868.5,762.4 869,754.7 869.5,760.1 870,756.1 870.5,756.7 871,753.8 871.5,751.8 872,742.4 872.5,752.9 873,740.1 873.5,751.7 874,735.1 874.5,740.6 875,721.9 875.5,714.6 876,673.7 876.5,666.7 877,630.6 877.5,618.5 878,598.1 878.5,644.6 879,652.4 879.5,684.3 880,697.8 880.5,718.8 881,717.5 881.5,741.1 882,733.4 882.5,775.1 883,732.2 883.5,756.6 884,737.7 884.5,762.4 885,743.6 885.5,756.3 886,722.6 886.5,713.3 887,664.3 887.5,649.4 888,614.3 888.5,595.5 889,545.0 889.5,579.3 890,595.3 890.5,637.0 891,655.0 891.5,652.5 892,566.3 892.5,501.4 893,386.3 893.5,483.5 894,544.6 894.5,609.3 895,634.9 895.5,679.3 896,689.5 896.5,713.8 897,712.9 897.5,745.9 898,677.3 898.5,658.1 899,571.1 899.5,626.6 900,666.3 900.5,716.4 901,701.1 901.5,676.0 902,614.7 902.5,617.0 903,545.5 903.5,608.1 904,604.3 904.5,664.1 905,658.4 905.5,703.1 906,703.2 906.5,712.8 907,689.8 907.5,681.3 908,631.7 908.5,667.4 909,674.9 909.5,706.0 910,699.2 910.5,730.1 911,717.7 911.5,749.4 912,725.2 912.5,754.0 913,702.8 913.5,696.7 914,654.6 914.5,627.6 915,585.4 915.5,639.2 916,611.6 916.5,566.4 917,594.7 917.5,646.1 918,646.5 918.5,696.2 919,711.6 919.5,772.0 920,674.0 920.5,672.6 921,627.4 921.5,605.5 922,540.8 922.5,520.0 923,445.7 923.5,494.2 924,505.3 924.5,558.6 925,570.8 925.5,612.4 926,624.4 926.5,677.5 927,678.7 927.5,736.5 928,726.3 928.5,780.4 929,779.1 929.5,768.1 930,734.8 930.5,728.1 931,663.4 931.5,695.4 932,674.4 932.5,692.1 933,629.7 933.5,637.6 934,593.2 934.5,609.5 935,564.3 935.5,560.3 936,530.2 936.5,545.1 937,475.2 937.5,471.7 938,435.1 938.5,451.3 939,392.6 939.5,396.6 940,342.7 940.5,330.9 941,301.6 941.5,331.6 942,343.2 942.5,387.2 943,391.1 943.5,434.3 944,440.2 944.5,467.2 945,481.0 945.5,513.2 946,519.4 946.5,554.2 947,569.5 947.5,594.4 948,604.2 948.5,630.2 949,640.6 949.5,674.4 950,670.6 950.5,683.2 951,640.1 951.5,651.8 952,606.3 952.5,631.3 953,639.7 953.5,657.9 954,645.5 954.5,683.4 955,668.1 955.5,695.6 956,687.1 956.5,726.4 957,696.2 957.5,713.8 958,697.7 958.5,715.6 959,711.5 959.5,712.9 960,713.5 960.5,711.5 961,704.0 961.5,700.5 962,689.9 962.5,683.3 963,676.4 963.5,686.0 964,702.2 964.5,730.7 965,740.2 965.5,762.0 966,750.3 966.5,746.2 967,739.6 967.5,737.1 968,728.1 968.5,720.8 969,712.7 969.5,716.4 970,706.1 970.5,715.1 971,710.4 971.5,724.6 972,720.2 972.5,729.4 973,723.1 973.5,722.2 974,674.2 974.5,645.7 975,574.1 975.5,524.3 976,423.7 976.5,502.1 977,533.9 977.5,593.1 978,614.6 978.5,604.1 979,592.9 979.5,631.3 980,644.9 980.5,679.5 981,681.4 981.5,724.2 982,725.4 982.5,780.8 983,768.3 983.5,794.6 984,767.4 984.5,778.1 985,770.3 985.5,799.3 986,736.4 986.5,712.4 987,662.6 987.5,624.8 988,563.6 988.5,551.7 989,459.9 989.5,525.7 990,564.8 990.5,624.6 991,633.9 991.5,681.8 992,689.1 992.5,727.9 993,694.5 993.5,720.0 994,764.5 994.5,832.4 995,844.9 995.5,873.7 996,825.7 996.5,787.5 997,734.8 997.5,699.9 998,628.6 998.5,623.0 999,570.6 999.5,611.0 1000,623.6 1000.5,655.4 1001,667.7 1001.5,689.1 1002,628.4 1002.5,584.5 1003,522.6 1003.5,487.4 1004,424.3 1004.5,468.4 1005,476.5 1005.5,509.0 1006,529.5 1006.5,555.7 1007,569.3 1007.5,610.1 1008,617.9 1008.5,676.3 1009,681.8 1009.5,720.7 1010,732.3 1010.5,777.4 1011,757.6 1011.5,774.9 1012,745.8 1012.5,740.8 1013,683.2 1013.5,652.6 1014,608.8 1014.5,578.7 1015,529.1 1015.5,516.0 1016,449.3 1016.5,487.5 1017,519.1 1017.5,554.7 1018,582.7 1018.5,621.1 1019,633.1 1019.5,689.4 1020,702.4 1020.5,760.4 1021,754.2 1021.5,789.9 1022,786.9 1022.5,794.9 1023,769.8 1023.5,787.5 1024,777.6 1024.5,808.5 1025,760.4 1025.5,753.7 1026,724.2 1026.5,709.9 1027,671.4 1027.5,647.4 1028,605.9 1028.5,586.6 1029,534.4 1029.5,520.4 1030,483.5 1030.5,492.7 1031,530.4 1031.5,569.3 1032,601.9 1032.5,645.2 1033,663.7 1033.5,701.8 1034,712.1 1034.5,760.8 1035,763.9 1035.5,778.0 1036,719.1 1036.5,725.0 1037,693.7 1037.5,724.9 1038,698.7 1038.5,675.7 1039,617.1 1039.5,615.1 1040,562.0 1040.5,532.4 1041,554.5 1041.5,609.7 1042,640.5 1042.5,688.8 1043,690.5 1043.5,655.2 1044,597.3 1044.5,583.4 1045,594.1 1045.5,655.4 1046,680.5 1046.5,727.7 1047,727.8 1047.5,740.0 1048,730.3 1048.5,717.8 1049,649.8 1049.5,644.6 1050,629.9 1050.5,677.9 1051,678.1 1051.5,704.1 1052,695.0 1052.5,727.2 1053,712.8 1053.5,746.1 1054,718.8 1054.5,728.5 1055,682.6 1055.5,638.6 1056,579.3 1056.5,549.6 1057,487.1 1057.5,533.1 1058,534.7 1058.5,560.0 1059,571.4 1059.5,603.8 1060,609.3 1060.5,656.7 1061,652.9 1061.5,686.5 1062,698.0 1062.5,757.7 1063,759.6 1063.5,785.3 1064,716.7 1064.5,677.4 1065,663.3 1065.5,679.3 1066,667.4 1066.5,707.1 1067,670.2 1067.5,671.1 1068,637.9 1068.5,638.2 1069,648.5 1069.5,669.1 1070,664.1 1070.5,713.6 1071,700.7 1071.5,729.6 1072,729.2 1072.5,749.1 1073,749.6 1073.5,772.4 1074,772.4 1074.5,810.6 1075,778.6 1075.5,782.0 1076,743.3 1076.5,721.5 1077,672.9 1077.5,652.6 1078,614.3 1078.5,596.5 1079,566.9 1079.5,606.2 1080,616.7 1080.5,645.6 1081,630.2 1081.5,615.1 1082,605.7 1082.5,627.5 1083,629.8 1083.5,661.6 1084,652.6 1084.5,692.5 1085,670.3 1085.5,699.4 1086,698.6 1086.5,698.8 1087,683.5 1087.5,695.8 1088,687.8 1088.5,704.8 1089,704.2 1089.5,712.9 1090,698.6 1090.5,696.2 1091,685.0 1091.5,686.6 1092,682.5 1092.5,697.4 1093,701.9 1093.5,712.7 1094,718.2 1094.5,725.3 1095,728.1 1095.5,736.6 1096,733.1 1096.5,737.3 1097,736.9 1097.5,738.2 1098,736.8 1098.5,743.1 1099,744.4 1099.5,752.2 1100,752.2 1100.5,755.8 1101,747.7 1101.5,747.8 1102,743.4 1102.5,740.8 1103,722.0 1103.5,711.4 1104,694.8 1104.5,681.8 1105,665.1 1105.5,677.4 1106,682.2 1106.5,690.5 1107,695.8 1107.5,704.8 1108,705.4 1108.5,714.2 1109,719.6 1109.5,727.4 1110,713.5 1110.5,696.0 1111,673.2 1111.5,658.2 1112,634.9 1112.5,654.4 1113,660.1 1113.5,681.4 1114,690.7 1114.5,721.6 1115,721.2 1115.5,754.8 1116,752.1 1116.5,759.3 1117,749.2 1117.5,763.0 1118,751.9 1118.5,763.4 1119,744.4 1119.5,759.2 1120,746.7 1120.5,753.5 1121,737.0 1121.5,759.6 1122,749.1 1122.5,761.6 1123,758.6 1123.5,772.2 1124,765.2 1124.5,769.2 1125,758.9 1125.5,789.1 1126,767.1 1126.5,780.5 1127,765.6 1127.5,777.2 1128,769.1 1128.5,778.8 1129,765.1 1129.5,773.3 1130,770.5 1130.5,783.7 1131,762.4 1131.5,780.6 1132,769.5 1132.5,782.3 1133,770.4 1133.5,780.9 1134,768.5 1134.5,774.4 1135,764.0 1135.5,782.6 1136,752.7 1136.5,766.4 1137,761.2 1137.5,766.3 1138,753.2 1138.5,760.2 1139,755.5 1139.5,764.2 1140,749.7 1140.5,750.7 1141,746.1 1141.5,754.8 1142,740.4 1142.5,744.2 1143,736.7 1143.5,743.6 1144,731.7 1144.5,740.2 1145,731.0 1145.5,740.4 1146,738.0 1146.5,742.4 1147,734.4 1147.5,741.7 1148,741.4 1148.5,743.0 1149,743.6 1149.5,748.9 1150,749.8 1150.5,750.3 1151,751.5 1151.5,754.2 1152,750.6 1152.5,748.1 1153,744.8 1153.5,745.9 1154,740.4 1154.5,740.5 1155,734.0 1155.5,735.7 1156,729.4 1156.5,725.6 1157,727.1 1157.5,724.4 1158,725.0 1158.5,724.7 1159,718.2 1159.5,712.2 1160,708.9 1160.5,713.6 1161,711.8 1161.5,710.5 1162,706.0 1162.5,712.7 1163,710.0 1163.5,709.5 1164,708.4 1164.5,708.3 1165,703.7 1165.5,707.7 1166,706.0 1166.5,706.9 1167,705.0 1167.5,701.7 1168,702.6 1168.5,705.0 1169,703.0 1169.5,704.4 1170,698.9 1170.5,700.7 1171,703.1 1171.5,702.0 1172,701.4 1172.5,699.9 1173,702.2 1173.5,700.1 1174,703.3 1174.5,701.5 1175,700.8 1175.5,699.8 1176,700.6 1176.5,701.1 1177,700.9 1177.5,699.0 1178,698.8 1178.5,695.7 1179,697.6 1179.5,698.4 1180,697.2 1180.5,698.5 1181,699.7 1181.5,696.0 1182,699.8 1182.5,695.5 1183,695.8 1183.5,697.7 1184,698.9 1184.5,696.9 1185,695.8 1185.5,696.2 1186,696.6 1186.5,699.0 1187,697.7 1187.5,696.1 1188,693.1 1188.5,696.4 1189,695.8 1189.5,697.5 1190,692.5 1190.5,698.5 1191,694.2 1191.5,692.0 1192,692.3 1192.5,693.4 1193,692.7 1193.5,692.8 1194,695.7 1194.5,697.4 1195,694.0 1195.5,692.1 1196,692.1 1196.5,692.9 1197,693.9 1197.5,692.4 1198,693.7 1198.5,693.9 1199,696.1 1199.5,691.6 1200,691.7 1200.5,691.9 1201,693.1 1201.5,692.1 1202,689.1 1202.5,693.9 1203,691.8 1203.5,688.0 1204,692.3 1204.5,691.8 1205,691.7 1205.5,690.2 1206,691.4 1206.5,691.4 1207,689.8 1207.5,689.3 1208,688.3 1208.5,691.1 1209,687.7 1209.5,693.8 1210,689.7 1210.5,688.6 1211,691.5 1211.5,692.9 1212,690.9 1212.5,690.0 1213,687.8 1213.5,689.8 1214,690.7 1214.5,687.1 1215,692.3 1215.5,692.1 1216,687.0 1216.5,691.7 1217,689.3 1217.5,688.6 1218,687.5 1218.5,685.5 1219,686.3 1219.5,686.1 1220,688.0 1220.5,686.0 1221,688.8 1221.5,687.0 1222,691.4 1222.5,691.8 1223,691.4 1223.5,685.2 1224,686.3 1224.5,689.0 1225,690.1 1225.5,687.9 1226,688.9 1226.5,689.9 1227,690.4 1227.5,685.5 1228,691.7 1228.5,688.2 1229,688.8 1229.5,686.5 1230,685.6 1230.5,688.1 1231,686.9 1231.5,686.0 1232,690.6 1232.5,690.8 1233,687.9 1233.5,686.1 1234,687.7 1234.5,687.8 1235,689.7 1235.5,684.5 1236,690.9 1236.5,685.1 1237,685.7 1237.5,686.3 1238,687.4 1238.5,687.4 1239,686.0 1239.5,691.3 1240,687.8 1240.5,684.6 1241,687.6 1241.5,685.4 1242,686.7 1242.5,684.8 1243,685.8 1243.5,688.0 1244,687.4 1244.5,689.5 1245,684.3 1245.5,688.2 1246,686.5 1246.5,683.9 1247,683.4 1247.5,684.0 1248,684.2 1248.5,687.9 1249,686.3 1249.5,685.4 1250,684.5 1250.5,684.2 1251,684.2 1251.5,685.4 1252,686.1 1252.5,682.3 1253,685.1 1253.5,687.1 1254,681.5 1254.5,683.8 1255,685.3 1255.5,684.3 1256,684.3 1256.5,687.1 1257,690.5 1257.5,683.6 1258,684.2 1258.5,679.3 1259,683.9 1259.5,683.0 1260,681.1 1260.5,683.6 1261,686.8 1261.5,686.4 1262,680.2 1262.5,686.3 1263,683.1 1263.5,684.0 1264,683.6 1264.5,683.0 1265,683.3 1265.5,685.9 1266,685.8 1266.5,682.4 1267,682.5 1267.5,682.5 1268,683.9 1268.5,684.8 1269,683.3 1269.5,683.9 1270,685.7 1270.5,683.4 1271,683.4 1271.5,682.2 1272,684.5" fill="none" stroke="#9a9a9a" stroke-width="1.35" stroke-linejoin="round" shape-rendering="crispEdges"/>
<polyline points="65,659.8 65.5,663.5 66,664.1 66.5,672.8 67,671.9 67.5,677.0 68,671.3 68.5,670.9 69,665.3 69.5,666.0 70,663.9 70.5,669.7 71,669.0 71.5,672.5 72,671.5 72.5,675.4 73,671.7 73.5,675.6 74,673.7 74.5,675.9 75,673.9 75.5,676.3 76,674.7 76.5,677.0 77,674.6 77.5,676.5 78,673.6 78.5,674.0 79,671.7 79.5,677.9 80,678.8 80.5,682.2 81,679.9 81.5,683.7 82,679.9 82.5,682.0 83,677.8 83.5,681.7 84,677.8 84.5,681.2 85,678.1 85.5,683.4 86,682.4 86.5,687.0 87,683.0 87.5,682.4 88,676.8 88.5,674.7 89,669.9 89.5,673.1 90,668.7 90.5,671.2 91,667.9 91.5,673.0 92,669.0 92.5,673.8 93,670.9 93.5,672.8 94,672.5 94.5,675.4 95,669.1 95.5,671.1 96,667.9 96.5,668.1 97,661.3 97.5,660.1 98,652.6 98.5,649.9 99,641.3 99.5,640.0 100,637.2 100.5,649.9 101,654.9 101.5,665.9 102,668.3 102.5,673.1 103,676.9 103.5,681.7 104,684.7 104.5,688.8 105,687.2 105.5,690.9 106,689.3 106.5,693.5 107,689.9 107.5,696.0 108,693.0 108.5,698.4 109,696.1 109.5,702.2 110,698.9 110.5,702.8 111,697.8 111.5,699.0 112,691.9 112.5,692.0 113,686.2 113.5,686.2 114,676.5 114.5,676.1 115,676.4 115.5,679.2 116,680.9 116.5,686.0 117,682.3 117.5,688.5 118,684.0 118.5,688.6 119,688.7 119.5,697.0 120,694.7 120.5,696.0 121,694.2 121.5,699.8 122,693.9 122.5,698.7 123,698.2 123.5,703.1 124,701.1 124.5,701.4 125,699.1 125.5,701.6 126,695.9 126.5,703.2 127,701.2 127.5,704.6 128,699.5 128.5,696.9 129,689.5 129.5,694.5 130,690.7 130.5,694.5 131,690.5 131.5,689.1 132,684.6 132.5,690.1 133,689.0 133.5,694.6 134,694.9 134.5,701.2 135,695.9 135.5,691.9 136,681.2 136.5,683.2 137,676.8 137.5,674.9 138,669.4 138.5,670.1 139,682.1 139.5,701.1 140,710.2 140.5,726.1 141,734.7 141.5,743.6 142,746.5 142.5,748.7 143,745.5 143.5,746.1 144,737.4 144.5,734.2 145,729.0 145.5,729.5 146,726.9 146.5,732.2 147,725.5 147.5,730.4 148,730.0 148.5,731.8 149,727.4 149.5,729.3 150,724.2 150.5,724.0 151,718.9 151.5,723.3 152,717.8 152.5,722.5 153,715.1 153.5,712.3 154,697.9 154.5,695.6 155,679.0 155.5,675.2 156,655.9 156.5,647.1 157,631.3 157.5,651.3 158,662.1 158.5,675.2 159,681.6 159.5,693.4 160,682.8 160.5,685.0 161,672.1 161.5,673.2 162,668.3 162.5,678.2 163,678.1 163.5,681.0 164,678.1 164.5,679.5 165,670.2 165.5,669.3 166,656.0 166.5,654.9 167,640.4 167.5,639.6 168,624.7 168.5,622.5 169,600.1 169.5,595.6 170,580.1 170.5,570.4 171,572.1 171.5,568.4 172,553.9 172.5,553.5 173,523.3 173.5,517.5 174,528.8 174.5,546.8 175,550.0 175.5,567.5 176,577.0 176.5,590.1 177,597.0 177.5,587.4 178,562.4 178.5,550.5 179,543.7 179.5,563.3 180,578.9 180.5,596.4 181,593.4 181.5,575.8 182,573.8 182.5,592.6 183,604.5 183.5,621.8 184,638.2 184.5,667.0 185,689.5 185.5,719.8 186,732.8 186.5,756.8 187,760.6 187.5,761.2 188,748.8 188.5,741.0 189,728.9 189.5,723.0 190,707.2 190.5,715.3 191,707.2 191.5,707.9 192,704.3 192.5,708.9 193,682.3 193.5,665.7 194,640.8 194.5,626.5 195,606.0 195.5,594.7 196,574.1 196.5,561.3 197,535.7 197.5,521.2 198,500.1 198.5,486.8 199,463.7 199.5,447.7 200,419.3 200.5,411.0 201,386.7 201.5,374.4 202,348.4 202.5,347.0 203,321.9 203.5,312.3 204,287.8 204.5,277.6 205,251.3 205.5,239.5 206,220.6 206.5,205.2 207,263.5 207.5,332.4 208,394.9 208.5,464.3 209,523.2 209.5,588.8 210,629.0 210.5,690.3 211,710.9 211.5,718.1 212,712.3 212.5,720.2 213,717.5 213.5,722.6 214,712.6 214.5,723.4 215,714.1 215.5,720.7 216,704.8 216.5,718.2 217,712.6 217.5,718.8 218,715.9 218.5,719.4 219,715.3 219.5,712.6 220,698.5 220.5,693.6 221,664.2 221.5,654.1 222,621.8 222.5,618.0 223,622.1 223.5,653.2 224,658.1 224.5,681.0 225,679.3 225.5,701.4 226,699.3 226.5,717.5 227,714.3 227.5,729.4 228,714.0 228.5,731.4 229,714.4 229.5,735.6 230,723.5 230.5,732.3 231,723.2 231.5,715.7 232,690.0 232.5,673.2 233,635.7 233.5,627.1 234,620.7 234.5,643.8 235,646.3 235.5,668.5 236,660.5 236.5,681.9 237,666.2 237.5,695.1 238,696.9 238.5,704.6 239,704.6 239.5,711.5 240,679.8 240.5,658.8 241,617.1 241.5,589.9 242,571.1 242.5,612.8 243,617.6 243.5,641.6 244,645.2 244.5,640.7 245,631.3 245.5,653.2 246,650.2 246.5,669.3 247,669.6 247.5,687.0 248,692.0 248.5,702.4 249,698.9 249.5,708.9 250,696.7 250.5,707.2 251,706.7 251.5,714.8 252,715.2 252.5,720.0 253,698.8 253.5,714.0 254,699.9 254.5,721.8 255,706.0 255.5,734.5 256,710.5 256.5,728.5 257,714.5 257.5,720.0 258,706.3 258.5,708.6 259,702.1 259.5,703.5 260,679.8 260.5,696.5 261,691.2 261.5,708.8 262,693.1 262.5,706.8 263,698.6 263.5,704.7 264,690.5 264.5,686.8 265,661.8 265.5,652.8 266,629.9 266.5,638.1 267,646.0 267.5,660.9 268,654.6 268.5,684.2 269,686.9 269.5,706.8 270,695.6 270.5,687.5 271,670.6 271.5,685.4 272,675.5 272.5,681.0 273,650.7 273.5,655.6 274,622.5 274.5,627.4 275,637.7 275.5,668.8 276,672.4 276.5,693.1 277,689.7 277.5,714.5 278,702.5 278.5,698.8 279,656.7 279.5,649.0 280,642.2 280.5,646.2 281,648.4 281.5,673.5 282,677.5 282.5,695.3 283,694.6 283.5,709.0 284,706.3 284.5,716.5 285,709.5 285.5,710.0 286,695.3 286.5,691.3 287,657.2 287.5,656.9 288,623.0 288.5,633.2 289,615.3 289.5,649.1 290,632.3 290.5,663.8 291,666.9 291.5,688.4 292,688.4 292.5,702.3 293,704.7 293.5,722.2 294,718.0 294.5,731.2 295,727.7 295.5,747.1 296,726.8 296.5,725.0 297,694.0 297.5,692.9 298,661.3 298.5,657.8 299,632.9 299.5,616.9 300,598.3 300.5,628.2 301,625.9 301.5,640.8 302,649.2 302.5,634.8 303,607.0 303.5,628.5 304,634.5 304.5,669.9 305,687.1 305.5,697.9 306,677.8 306.5,686.4 307,664.8 307.5,680.9 308,666.5 308.5,682.6 309,681.6 309.5,701.5 310,684.5 310.5,702.2 311,704.9 311.5,719.4 312,714.3 312.5,732.7 313,726.4 313.5,729.5 314,704.1 314.5,697.1 315,666.6 315.5,666.4 316,630.6 316.5,630.8 317,629.5 317.5,621.0 318,573.0 318.5,600.5 319,608.0 319.5,627.1 320,634.5 320.5,656.0 321,647.5 321.5,675.6 322,674.2 322.5,697.3 323,690.4 323.5,709.1 324,709.8 324.5,727.4 325,722.6 325.5,742.5 326,739.4 326.5,763.4 327,759.2 327.5,766.4 328,751.3 328.5,752.1 329,716.1 329.5,708.7 330,661.9 330.5,671.7 331,621.5 331.5,670.2 332,665.0 332.5,682.8 333,685.5 333.5,702.0 334,694.5 334.5,721.8 335,713.4 335.5,727.2 336,694.1 336.5,694.6 337,646.4 337.5,674.6 338,633.5 338.5,647.4 339,629.4 339.5,660.6 340,664.8 340.5,680.5 341,686.2 341.5,696.5 342,664.2 342.5,641.2 343,593.8 343.5,601.5 344,617.7 344.5,650.2 345,672.1 345.5,698.5 346,699.4 346.5,732.0 347,734.7 347.5,750.6 348,760.1 348.5,788.6 349,783.5 349.5,806.0 350,797.0 350.5,789.2 351,756.6 351.5,754.6 352,719.4 352.5,738.9 353,719.4 353.5,704.2 354,651.8 354.5,656.5 355,637.8 355.5,676.3 356,675.2 356.5,697.5 357,703.1 357.5,717.5 358,715.4 358.5,735.6 359,736.2 359.5,746.5 360,751.3 360.5,757.5 361,758.3 361.5,770.4 362,732.6 362.5,726.7 363,689.6 363.5,674.5 364,667.0 364.5,690.4 365,666.5 365.5,707.3 366,699.8 366.5,737.0 367,721.7 367.5,744.8 368,729.4 368.5,759.3 369,750.6 369.5,759.4 370,757.7 370.5,763.7 371,756.3 371.5,754.0 372,716.9 372.5,715.3 373,682.8 373.5,657.0 374,657.8 374.5,693.1 375,687.8 375.5,702.3 376,711.3 376.5,732.2 377,722.5 377.5,753.1 378,753.4 378.5,768.0 379,761.9 379.5,751.7 380,723.4 380.5,732.1 381,688.1 381.5,680.8 382,642.7 382.5,626.9 383,597.5 383.5,640.0 384,655.9 384.5,677.8 385,685.3 385.5,707.9 386,671.9 386.5,708.4 387,713.2 387.5,737.8 388,727.6 388.5,752.0 389,748.8 389.5,764.5 390,741.7 390.5,725.6 391,674.5 391.5,638.9 392,577.6 392.5,587.7 393,584.0 393.5,623.6 394,622.6 394.5,666.3 395,663.4 395.5,701.2 396,700.6 396.5,722.4 397,716.8 397.5,741.4 398,740.3 398.5,746.9 399,697.0 399.5,686.1 400,638.9 400.5,616.8 401,632.8 401.5,662.9 402,667.5 402.5,697.4 403,692.4 403.5,708.0 404,674.5 404.5,677.6 405,645.1 405.5,694.9 406,693.8 406.5,713.1 407,723.6 407.5,744.2 408,745.5 408.5,765.1 409,737.5 409.5,715.1 410,662.8 410.5,645.8 411,602.8 411.5,641.4 412,646.4 412.5,675.5 413,688.2 413.5,709.0 414,685.9 414.5,677.6 415,643.4 415.5,634.4 416,634.3 416.5,656.5 417,662.6 417.5,679.5 418,679.1 418.5,701.3 419,705.5 419.5,719.8 420,710.4 420.5,738.0 421,741.0 421.5,758.3 422,743.3 422.5,732.9 423,697.7 423.5,703.8 424,671.3 424.5,652.5 425,641.0 425.5,665.2 426,678.1 426.5,697.0 427,697.3 427.5,727.4 428,719.9 428.5,741.5 429,740.2 429.5,752.9 430,717.1 430.5,718.6 431,704.8 431.5,723.4 432,722.3 432.5,750.2 433,753.8 433.5,777.2 434,774.5 434.5,800.9 435,795.1 435.5,805.3 436,786.5 436.5,789.2 437,761.6 437.5,785.8 438,758.9 438.5,747.8 439,721.2 439.5,719.9 440,687.4 440.5,681.5 441,639.0 441.5,618.0 442,633.6 442.5,677.6 443,678.6 443.5,662.7 444,661.0 444.5,683.5 445,685.8 445.5,707.7 446,708.1 446.5,728.3 447,727.9 447.5,754.2 448,721.8 448.5,729.9 449,722.0 449.5,733.4 450,715.3 450.5,732.8 451,732.6 451.5,751.0 452,745.6 452.5,750.6 453,737.8 453.5,765.5 454,761.4 454.5,782.5 455,768.9 455.5,780.3 456,769.8 456.5,776.5 457,770.6 457.5,780.9 458,774.6 458.5,787.6 459,762.7 459.5,774.5 460,751.4 460.5,744.1 461,718.2 461.5,715.4 462,674.6 462.5,693.6 463,697.9 463.5,733.9 464,723.0 464.5,731.6 465,675.3 465.5,683.4 466,682.1 466.5,695.1 467,673.2 467.5,714.7 468,717.3 468.5,738.0 469,726.2 469.5,752.5 470,737.4 470.5,756.7 471,739.9 471.5,763.8 472,755.4 472.5,774.1 473,753.1 473.5,771.0 474,761.6 474.5,782.5 475,761.8 475.5,780.1 476,745.3 476.5,762.3 477,722.2 477.5,724.7 478,706.4 478.5,726.1 479,705.2 479.5,714.7 480,654.2 480.5,711.3 481,722.6 481.5,734.5 482,702.8 482.5,722.2 483,699.9 483.5,712.1 484,709.8 484.5,739.7 485,714.2 485.5,742.3 486,722.2 486.5,724.4 487,711.9 487.5,737.9 488,728.1 488.5,753.3 489,723.5 489.5,755.8 490,748.2 490.5,765.6 491,760.9 491.5,777.5 492,762.4 492.5,770.8 493,759.7 493.5,787.7 494,764.7 494.5,781.6 495,764.0 495.5,762.3 496,742.0 496.5,745.1 497,704.6 497.5,699.6 498,683.3 498.5,720.3 499,710.0 499.5,707.7 500,676.6 500.5,668.6 501,667.2 501.5,713.5 502,734.0 502.5,754.0 503,755.6 503.5,767.5 504,763.2 504.5,767.3 505,751.7 505.5,757.4 506,733.6 506.5,723.0 507,688.5 507.5,687.4 508,653.2 508.5,699.9 509,680.9 509.5,708.7 510,697.1 510.5,730.4 511,727.6 511.5,740.4 512,741.6 512.5,767.1 513,762.7 513.5,774.9 514,769.2 514.5,775.5 515,746.2 515.5,722.1 516,688.7 516.5,671.4 517,618.4 517.5,640.8 518,644.9 518.5,677.6 519,692.7 519.5,711.2 520,723.9 520.5,742.7 521,695.9 521.5,720.5 522,719.8 522.5,740.2 523,736.8 523.5,729.4 524,692.0 524.5,702.5 525,661.0 525.5,655.2 526,613.0 526.5,606.1 527,567.0 527.5,561.5 528,552.8 528.5,590.4 529,594.9 529.5,636.7 530,637.4 530.5,659.0 531,673.5 531.5,709.7 532,723.4 532.5,766.3 533,744.6 533.5,770.4 534,762.9 534.5,787.8 535,763.4 535.5,773.7 536,763.6 536.5,777.7 537,772.7 537.5,798.0 538,795.0 538.5,817.9 539,799.2 539.5,796.1 540,769.3 540.5,788.2 541,770.6 541.5,772.0 542,760.4 542.5,768.8 543,743.4 543.5,749.8 544,731.3 544.5,727.8 545,713.4 545.5,735.4 546,722.5 546.5,751.1 547,743.6 547.5,779.3 548,757.6 548.5,782.6 549,759.6 549.5,788.3 550,745.5 550.5,783.8 551,766.2 551.5,780.7 552,773.9 552.5,793.5 553,763.9 553.5,770.5 554,743.7 554.5,746.7 555,718.8 555.5,743.3 556,706.1 556.5,681.7 557,623.0 557.5,622.8 558,617.2 558.5,657.5 559,612.7 559.5,639.3 560,628.2 560.5,652.3 561,657.1 561.5,680.3 562,678.2 562.5,703.5 563,700.8 563.5,720.1 564,718.9 564.5,726.2 565,709.1 565.5,697.4 566,672.5 566.5,668.9 567,658.4 567.5,675.6 568,672.0 568.5,707.4 569,693.6 569.5,720.9 570,733.0 570.5,759.5 571,756.1 571.5,784.7 572,710.1 572.5,705.9 573,661.7 573.5,681.7 574,690.7 574.5,708.5 575,707.6 575.5,732.2 576,733.5 576.5,746.1 577,741.1 577.5,762.4 578,761.4 578.5,777.9 579,768.1 579.5,780.5 580,766.8 580.5,794.9 581,789.5 581.5,807.0 582,801.1 582.5,819.0 583,793.8 583.5,793.8 584,719.6 584.5,712.2 585,677.9 585.5,705.5 586,717.9 586.5,728.1 587,722.4 587.5,756.7 588,738.2 588.5,754.7 589,747.8 589.5,771.0 590,765.2 590.5,776.6 591,777.0 591.5,791.5 592,778.6 592.5,791.2 593,783.3 593.5,797.7 594,774.1 594.5,778.1 595,762.0 595.5,756.9 596,737.6 596.5,729.4 597,724.9 597.5,752.1 598,755.5 598.5,734.1 599,732.9 599.5,762.1 600,773.5 600.5,790.3 601,788.8 601.5,797.8 602,786.1 602.5,797.5 603,793.2 603.5,801.1 604,782.9 604.5,797.3 605,761.3 605.5,762.8 606,735.9 606.5,722.4 607,704.3 607.5,727.6 608,698.5 608.5,689.9 609,662.8 609.5,649.0 610,664.3 610.5,702.8 611,695.4 611.5,733.8 612,729.3 612.5,759.3 613,752.6 613.5,791.8 614,774.3 614.5,797.9 615,786.1 615.5,794.1 616,744.8 616.5,739.5 617,699.0 617.5,691.1 618,651.4 618.5,640.3 619,615.4 619.5,634.1 620,629.1 620.5,675.1 621,672.9 621.5,698.5 622,699.7 622.5,725.2 623,727.4 623.5,749.3 624,717.6 624.5,702.0 625,670.9 625.5,667.3 626,666.0 626.5,649.0 627,617.1 627.5,669.4 628,654.7 628.5,690.4 629,686.1 629.5,712.7 630,701.8 630.5,740.8 631,736.8 631.5,760.5 632,734.9 632.5,723.5 633,707.5 633.5,704.4 634,698.2 634.5,736.4 635,741.9 635.5,763.2 636,771.7 636.5,809.5 637,786.0 637.5,797.1 638,775.3 638.5,778.1 639,746.5 639.5,748.4 640,728.7 640.5,729.5 641,696.9 641.5,700.6 642,660.8 642.5,676.1 643,645.3 643.5,633.5 644,602.5 644.5,604.9 645,574.5 645.5,567.9 646,528.2 646.5,531.2 647,497.0 647.5,497.2 648,454.2 648.5,458.2 649,422.7 649.5,414.7 650,387.2 650.5,375.2 651,388.6 651.5,416.3 652,426.2 652.5,455.6 653,465.9 653.5,510.1 654,521.6 654.5,554.0 655,565.9 655.5,592.0 656,592.2 656.5,626.9 657,634.6 657.5,662.0 658,656.0 658.5,681.3 659,687.8 659.5,719.1 660,704.8 660.5,702.4 661,671.0 661.5,669.0 662,639.2 662.5,628.5 663,618.8 663.5,675.4 664,677.0 664.5,701.6 665,704.5 665.5,729.8 666,723.9 666.5,740.1 667,718.1 667.5,709.4 668,678.0 668.5,681.0 669,647.6 669.5,690.7 670,689.2 670.5,711.3 671,718.2 671.5,721.4 672,707.8 672.5,722.4 673,708.5 673.5,724.8 674,719.0 674.5,727.8 675,720.7 675.5,740.4 676,730.4 676.5,747.6 677,726.5 677.5,740.7 678,734.8 678.5,741.0 679,735.1 679.5,745.3 680,733.9 680.5,755.2 681,750.2 681.5,759.6 682,752.2 682.5,765.6 683,736.7 683.5,733.2 684,709.1 684.5,697.7 685,672.0 685.5,671.0 686,642.4 686.5,673.5 687,675.3 687.5,689.5 688,685.6 688.5,714.2 689,714.0 689.5,733.9 690,717.2 690.5,731.2 691,716.1 691.5,730.4 692,717.6 692.5,730.3 693,715.4 693.5,709.7 694,697.4 694.5,694.3 695,667.2 695.5,665.2 696,641.0 696.5,644.3 697,648.9 697.5,665.0 698,657.3 698.5,681.2 699,681.9 699.5,703.4 700,699.1 700.5,693.1 701,665.6 701.5,656.4 702,632.6 702.5,618.0 703,589.0 703.5,611.4 704,615.6 704.5,639.4 705,645.2 705.5,663.0 706,658.9 706.5,646.1 707,619.5 707.5,617.7 708,638.3 708.5,682.2 709,704.2 709.5,749.8 710,765.6 710.5,769.5 711,740.0 711.5,712.1 712,667.2 712.5,639.5 713,608.7 713.5,594.4 714,568.2 714.5,558.9 715,536.7 715.5,528.7 716,490.5 716.5,478.9 717,439.4 717.5,434.1 718,401.6 718.5,385.0 719,353.0 719.5,342.2 720,322.6 720.5,350.3 721,369.0 721.5,407.6 722,414.4 722.5,450.4 723,456.9 723.5,485.6 724,493.1 724.5,536.2 725,539.1 725.5,562.6 726,577.7 726.5,611.0 727,617.3 727.5,650.7 728,645.4 728.5,676.5 729,676.7 729.5,710.2 730,689.2 730.5,720.1 731,709.5 731.5,711.8 732,665.6 732.5,662.4 733,634.0 733.5,616.4 734,589.4 734.5,606.3 735,614.3 735.5,643.2 736,644.3 736.5,678.0 737,671.3 737.5,698.0 738,704.3 738.5,721.6 739,711.8 739.5,700.9 740,662.4 740.5,652.0 741,622.5 741.5,597.6 742,615.3 742.5,658.5 743,665.1 743.5,704.8 744,716.1 744.5,733.7 745,745.4 745.5,740.5 746,725.1 746.5,719.3 747,720.4 747.5,737.6 748,735.8 748.5,750.3 749,749.2 749.5,758.9 750,751.9 750.5,765.5 751,764.8 751.5,768.5 752,770.3 752.5,775.7 753,777.1 753.5,781.2 754,780.3 754.5,788.1 755,781.0 755.5,784.0 756,782.6 756.5,784.4 757,782.0 757.5,784.8 758,777.8 758.5,785.7 759,781.2 759.5,788.6 760,784.3 760.5,786.3 761,766.9 761.5,761.0 762,727.8 762.5,716.4 763,685.1 763.5,665.4 764,669.2 764.5,696.8 765,694.9 765.5,714.8 766,725.6 766.5,737.6 767,744.5 767.5,754.1 768,760.5 768.5,776.2 769,764.0 769.5,762.9 770,745.3 770.5,744.1 771,723.9 771.5,715.4 772,718.4 772.5,734.7 773,745.8 773.5,761.4 774,770.0 774.5,780.1 775,768.7 775.5,773.5 776,764.7 776.5,781.1 777,777.7 777.5,788.2 778,777.5 778.5,775.8 779,768.1 779.5,776.5 780,771.0 780.5,787.7 781,787.7 781.5,795.4 782,784.3 782.5,784.2 783,777.7 783.5,775.0 784,763.5 784.5,768.8 785,765.1 785.5,776.8 786,779.6 786.5,788.6 787,787.9 787.5,794.5 788,792.3 788.5,798.4 789,793.8 789.5,798.6 790,798.2 790.5,806.0 791,800.9 791.5,808.3 792,791.3 792.5,778.5 793,758.7 793.5,741.5 794,722.1 794.5,717.9 795,728.8 795.5,751.5 796,756.7 796.5,777.3 797,779.9 797.5,790.3 798,789.2 798.5,799.2 799,800.0 799.5,804.7 800,796.4 800.5,802.4 801,791.3 801.5,789.4 802,777.2 802.5,769.4 803,752.9 803.5,746.0 804,750.4 804.5,757.8 805,762.0 805.5,773.4 806,768.4 806.5,780.1 807,779.6 807.5,787.0 808,788.6 808.5,794.3 809,791.7 809.5,796.8 810,788.4 810.5,780.8 811,766.2 811.5,761.8 812,740.6 812.5,736.4 813,729.2 813.5,744.8 814,746.1 814.5,765.4 815,771.3 815.5,780.6 816,784.8 816.5,792.2 817,794.7 817.5,808.7 818,801.5 818.5,812.6 819,815.1 819.5,830.0 820,814.9 820.5,814.7 821,801.7 821.5,794.9 822,784.6 822.5,778.1 823,759.7 823.5,771.8 824,770.5 824.5,781.6 825,782.8 825.5,793.4 826,792.4 826.5,799.6 827,794.9 827.5,803.5 828,791.3 828.5,786.0 829,774.4 829.5,763.0 830,765.8 830.5,778.4 831,776.7 831.5,777.1 832,762.1 832.5,766.8 833,770.2 833.5,788.8 834,786.3 834.5,800.4 835,799.7 835.5,810.9 836,803.7 836.5,817.8 837,812.0 837.5,820.7 838,814.2 838.5,820.5 839,814.6 839.5,816.0 840,815.9 840.5,820.4 841,814.9 841.5,822.0 842,799.8 842.5,787.7 843,768.2 843.5,752.4 844,723.2 844.5,716.6 845,732.1 845.5,755.4 846,769.4 846.5,790.3 847,794.9 847.5,813.3 848,812.6 848.5,817.2 849,797.9 849.5,788.0 850,771.5 850.5,769.5 851,766.5 851.5,785.7 852,782.9 852.5,796.5 853,795.8 853.5,807.5 854,809.1 854.5,813.3 855,812.2 855.5,823.0 856,814.1 856.5,814.3 857,797.6 857.5,794.5 858,783.0 858.5,776.3 859,770.0 859.5,785.7 860,784.5 860.5,791.4 861,792.2 861.5,797.4 862,790.8 862.5,804.1 863,798.3 863.5,807.7 864,802.2 864.5,810.8 865,799.4 865.5,802.0 866,795.7 866.5,798.8 867,791.6 867.5,792.4 868,784.2 868.5,787.4 869,778.9 869.5,783.2 870,778.7 870.5,782.8 871,770.7 871.5,774.9 872,771.3 872.5,771.3 873,764.0 873.5,768.3 874,763.1 874.5,761.1 875,753.8 875.5,760.4 876,735.8 876.5,746.6 877,723.9 877.5,726.3 878,690.5 878.5,693.9 879,674.9 879.5,684.3 880,680.3 880.5,716.3 881,703.2 881.5,750.8 882,729.5 882.5,763.9 883,743.4 883.5,760.7 884,711.0 884.5,722.9 885,696.7 885.5,747.1 886,734.4 886.5,759.1 887,720.2 887.5,709.4 888,666.4 888.5,658.0 889,601.6 889.5,595.6 890,578.7 890.5,632.6 891,625.4 891.5,628.8 892,634.3 892.5,679.6 893,700.2 893.5,741.2 894,740.1 894.5,759.0 895,734.8 895.5,744.1 896,710.0 896.5,735.3 897,717.8 897.5,770.1 898,760.1 898.5,802.1 899,781.7 899.5,824.5 900,813.0 900.5,813.7 901,795.1 901.5,791.4 902,734.4 902.5,709.9 903,653.1 903.5,613.1 904,555.7 904.5,596.5 905,615.8 905.5,649.7 906,655.5 906.5,691.9 907,695.7 907.5,722.9 908,704.9 908.5,686.0 909,671.4 909.5,708.2 910,723.2 910.5,747.6 911,744.0 911.5,770.6 912,757.8 912.5,789.4 913,776.9 913.5,781.6 914,734.8 914.5,735.0 915,676.7 915.5,702.3 916,715.3 916.5,733.5 917,743.8 917.5,769.9 918,756.1 918.5,778.4 919,767.2 919.5,778.1 920,752.3 920.5,770.8 921,757.5 921.5,757.2 922,716.3 922.5,714.4 923,678.0 923.5,665.7 924,624.9 924.5,637.9 925,625.8 925.5,688.2 926,678.2 926.5,700.9 927,698.7 927.5,756.5 928,750.2 928.5,801.5 929,799.9 929.5,829.8 930,787.2 930.5,784.6 931,724.3 931.5,712.4 932,679.2 932.5,662.1 933,622.5 933.5,626.9 934,583.1 934.5,606.1 935,557.3 935.5,566.8 936,504.7 936.5,507.3 937,448.7 937.5,463.6 938,409.2 938.5,413.9 939,359.5 939.5,370.5 940,334.2 940.5,381.4 941,386.3 941.5,430.2 942,428.4 942.5,492.3 943,493.4 943.5,534.7 944,522.3 944.5,571.2 945,565.5 945.5,594.1 946,603.4 946.5,630.2 947,633.7 947.5,667.1 948,672.1 948.5,711.6 949,704.9 949.5,740.9 950,730.0 950.5,718.8 951,691.8 951.5,686.3 952,655.0 952.5,673.5 953,665.7 953.5,693.2 954,691.9 954.5,711.5 955,701.8 955.5,714.0 956,714.2 956.5,729.8 957,722.6 957.5,733.1 958,725.9 958.5,740.1 959,724.4 959.5,734.6 960,714.1 960.5,715.9 961,709.2 961.5,705.8 962,701.2 962.5,713.9 963,719.4 963.5,734.9 964,741.0 964.5,758.5 965,768.8 965.5,778.7 966,764.2 966.5,763.8 967,757.5 967.5,757.4 968,744.3 968.5,748.8 969,745.4 969.5,753.8 970,738.1 970.5,742.7 971,734.9 971.5,729.1 972,703.2 972.5,736.1 973,721.4 973.5,752.9 974,736.5 974.5,733.0 975,674.9 975.5,659.2 976,586.5 976.5,576.5 977,513.0 977.5,571.2 978,594.5 978.5,633.5 979,653.1 979.5,696.7 980,689.4 980.5,670.5 981,683.9 981.5,716.0 982,717.0 982.5,757.4 983,737.6 983.5,764.8 984,768.0 984.5,791.7 985,778.5 985.5,795.5 986,757.2 986.5,785.5 987,746.6 987.5,745.0 988,712.8 988.5,708.8 989,663.6 989.5,655.8 990,647.0 990.5,699.0 991,711.1 991.5,753.1 992,742.1 992.5,809.4 993,793.7 993.5,836.9 994,851.6 994.5,891.5 995,866.0 995.5,854.2 996,820.2 996.5,836.1 997,776.7 997.5,760.1 998,685.2 998.5,677.4 999,706.6 999.5,692.9 1000,639.4 1000.5,626.6 1001,642.0 1001.5,680.6 1002,687.8 1002.5,726.5 1003,709.7 1003.5,715.1 1004,680.8 1004.5,668.7 1005,628.7 1005.5,659.1 1006,667.7 1006.5,710.0 1007,721.1 1007.5,762.2 1008,748.6 1008.5,758.6 1009,730.3 1009.5,783.4 1010,745.7 1010.5,791.3 1011,796.9 1011.5,808.2 1012,796.7 1012.5,820.2 1013,785.7 1013.5,783.1 1014,746.4 1014.5,737.5 1015,686.7 1015.5,701.7 1016,681.1 1016.5,698.2 1017,703.0 1017.5,728.5 1018,695.7 1018.5,724.8 1019,718.6 1019.5,746.7 1020,739.7 1020.5,773.2 1021,787.4 1021.5,820.9 1022,818.5 1022.5,829.0 1023,794.7 1023.5,822.8 1024,807.6 1024.5,826.2 1025,778.9 1025.5,791.8 1026,741.9 1026.5,741.8 1027,709.7 1027.5,705.9 1028,650.0 1028.5,651.8 1029,600.4 1029.5,606.0 1030,559.8 1030.5,552.5 1031,535.7 1031.5,585.2 1032,598.7 1032.5,639.0 1033,655.1 1033.5,690.0 1034,695.9 1034.5,731.4 1035,747.6 1035.5,773.8 1036,780.6 1036.5,807.3 1037,797.3 1037.5,804.7 1038,796.7 1038.5,803.7 1039,768.1 1039.5,741.7 1040,696.5 1040.5,673.2 1041,613.1 1041.5,660.1 1042,680.7 1042.5,720.1 1043,722.7 1043.5,745.9 1044,701.0 1044.5,702.3 1045,663.2 1045.5,651.7 1046,624.4 1046.5,703.9 1047,721.9 1047.5,736.7 1048,722.1 1048.5,764.7 1049,742.2 1049.5,716.3 1050,685.1 1050.5,707.6 1051,712.8 1051.5,750.5 1052,730.2 1052.5,752.1 1053,752.2 1053.5,772.0 1054,774.5 1054.5,788.8 1055,765.3 1055.5,764.3 1056,724.6 1056.5,717.0 1057,683.6 1057.5,670.7 1058,643.4 1058.5,672.3 1059,663.1 1059.5,702.7 1060,698.8 1060.5,731.6 1061,745.8 1061.5,788.5 1062,788.1 1062.5,831.6 1063,831.7 1063.5,803.0 1064,756.9 1064.5,732.5 1065,667.2 1065.5,660.6 1066,650.4 1066.5,674.4 1067,683.1 1067.5,709.1 1068,689.2 1068.5,714.4 1069,718.9 1069.5,747.1 1070,724.8 1070.5,754.1 1071,738.9 1071.5,770.4 1072,753.7 1072.5,767.4 1073,739.5 1073.5,750.4 1074,742.7 1074.5,785.1 1075,777.6 1075.5,791.0 1076,757.3 1076.5,747.0 1077,702.0 1077.5,681.0 1078,671.5 1078.5,706.9 1079,705.7 1079.5,699.1 1080,654.1 1080.5,662.0 1081,638.1 1081.5,673.0 1082,677.4 1082.5,708.7 1083,684.3 1083.5,701.6 1084,699.4 1084.5,721.3 1085,714.5 1085.5,742.6 1086,719.7 1086.5,733.9 1087,725.3 1087.5,739.1 1088,728.3 1088.5,738.9 1089,731.1 1089.5,732.2 1090,714.7 1090.5,726.8 1091,712.8 1091.5,714.4 1092,710.5 1092.5,721.1 1093,723.5 1093.5,732.2 1094,735.5 1094.5,742.8 1095,742.0 1095.5,750.0 1096,747.1 1096.5,752.9 1097,751.3 1097.5,757.2 1098,753.4 1098.5,756.2 1099,754.2 1099.5,753.5 1100,747.9 1100.5,750.7 1101,749.1 1101.5,753.5 1102,746.3 1102.5,740.0 1103,730.8 1103.5,724.2 1104,724.2 1104.5,734.1 1105,736.9 1105.5,743.6 1106,745.0 1106.5,754.3 1107,760.0 1107.5,772.1 1108,774.7 1108.5,774.4 1109,754.8 1109.5,749.9 1110,738.4 1110.5,732.7 1111,733.6 1111.5,744.0 1112,736.2 1112.5,745.4 1113,737.5 1113.5,746.1 1114,742.0 1114.5,759.0 1115,751.0 1115.5,763.4 1116,763.9 1116.5,776.2 1117,766.9 1117.5,773.9 1118,772.7 1118.5,780.1 1119,766.7 1119.5,783.9 1120,778.6 1120.5,792.0 1121,786.0 1121.5,796.2 1122,791.8 1122.5,804.7 1123,784.9 1123.5,810.7 1124,798.1 1124.5,804.6 1125,797.2 1125.5,804.7 1126,799.1 1126.5,801.8 1127,799.3 1127.5,810.4 1128,795.0 1128.5,809.1 1129,798.6 1129.5,805.3 1130,796.4 1130.5,804.8 1131,794.5 1131.5,815.5 1132,802.5 1132.5,812.1 1133,794.8 1133.5,804.1 1134,796.8 1134.5,813.5 1135,796.3 1135.5,808.9 1136,796.2 1136.5,807.3 1137,791.6 1137.5,798.9 1138,780.4 1138.5,799.1 1139,778.4 1139.5,795.0 1140,781.6 1140.5,784.8 1141,768.6 1141.5,781.1 1142,773.9 1142.5,782.6 1143,766.1 1143.5,773.6 1144,769.4 1144.5,773.9 1145,759.4 1145.5,770.5 1146,763.9 1146.5,763.3 1147,765.8 1147.5,765.4 1148,767.2 1148.5,769.6 1149,770.7 1149.5,771.8 1150,773.3 1150.5,776.9 1151,778.4 1151.5,775.6 1152,774.8 1152.5,771.2 1153,763.1 1153.5,765.0 1154,765.0 1154.5,764.6 1155,764.1 1155.5,761.4 1156,758.8 1156.5,757.8 1157,758.3 1157.5,754.7 1158,757.8 1158.5,751.3 1159,751.1 1159.5,745.9 1160,748.2 1160.5,742.6 1161,738.4 1161.5,750.4 1162,744.0 1162.5,742.1 1163,743.7 1163.5,744.7 1164,742.8 1164.5,737.8 1165,746.6 1165.5,742.8 1166,739.0 1166.5,737.4 1167,737.8 1167.5,737.1 1168,739.4 1168.5,738.0 1169,745.7 1169.5,740.1 1170,744.2 1170.5,737.5 1171,734.7 1171.5,739.1 1172,742.6 1172.5,734.8 1173,740.1 1173.5,739.8 1174,733.7 1174.5,740.4 1175,735.4 1175.5,735.3 1176,733.8 1176.5,742.3 1177,733.4 1177.5,738.1 1178,734.6 1178.5,735.0 1179,734.4 1179.5,733.6 1180,732.6 1180.5,730.3 1181,735.7 1181.5,733.9 1182,737.7 1182.5,736.3 1183,735.0 1183.5,737.9 1184,729.8 1184.5,734.4 1185,736.1 1185.5,737.2 1186,735.0 1186.5,734.0 1187,733.7 1187.5,730.4 1188,742.0 1188.5,734.7 1189,731.0 1189.5,735.9 1190,736.6 1190.5,731.0 1191,734.4 1191.5,731.8 1192,725.6 1192.5,732.1 1193,730.9 1193.5,728.9 1194,725.2 1194.5,728.8 1195,736.4 1195.5,730.2 1196,730.3 1196.5,726.5 1197,727.2 1197.5,727.9 1198,732.4 1198.5,726.3 1199,731.1 1199.5,726.8 1200,729.4 1200.5,731.2 1201,728.2 1201.5,733.6 1202,728.0 1202.5,721.6 1203,729.7 1203.5,735.0 1204,728.9 1204.5,727.6 1205,728.3 1205.5,725.9 1206,726.6 1206.5,731.7 1207,728.1 1207.5,726.9 1208,726.5 1208.5,726.9 1209,728.9 1209.5,723.4 1210,726.9 1210.5,723.2 1211,730.4 1211.5,727.9 1212,722.4 1212.5,725.1 1213,726.5 1213.5,724.1 1214,731.3 1214.5,728.7 1215,726.6 1215.5,722.1 1216,726.5 1216.5,727.4 1217,729.2 1217.5,725.6 1218,726.1 1218.5,729.9 1219,726.2 1219.5,723.8 1220,725.2 1220.5,725.1 1221,725.9 1221.5,721.1 1222,724.8 1222.5,727.9 1223,728.0 1223.5,723.1 1224,726.1 1224.5,727.0 1225,727.2 1225.5,729.7 1226,725.3 1226.5,727.1 1227,726.3 1227.5,726.9 1228,724.7 1228.5,731.9 1229,721.6 1229.5,724.6 1230,723.9 1230.5,726.6 1231,723.9 1231.5,722.0 1232,725.3 1232.5,722.2 1233,725.6 1233.5,724.2 1234,717.8 1234.5,723.2 1235,726.7 1235.5,723.4 1236,722.8 1236.5,722.3 1237,721.7 1237.5,723.6 1238,723.1 1238.5,720.5 1239,719.5 1239.5,726.8 1240,724.4 1240.5,721.6 1241,720.1 1241.5,726.1 1242,724.5 1242.5,721.5 1243,722.0 1243.5,720.0 1244,721.3 1244.5,721.3 1245,718.6 1245.5,714.7 1246,720.1 1246.5,720.0 1247,718.4 1247.5,719.7 1248,715.9 1248.5,720.5 1249,720.8 1249.5,716.7 1250,721.6 1250.5,719.3 1251,722.9 1251.5,722.9 1252,722.2 1252.5,725.0 1253,720.5 1253.5,718.8 1254,723.7 1254.5,717.1 1255,722.9 1255.5,724.0 1256,724.4 1256.5,718.7 1257,720.6 1257.5,720.6 1258,721.3 1258.5,721.8 1259,720.3 1259.5,721.0 1260,721.0 1260.5,715.4 1261,724.3 1261.5,718.7 1262,725.5 1262.5,716.4 1263,721.2 1263.5,720.7 1264,723.0 1264.5,722.3 1265,725.2 1265.5,724.8 1266,724.0 1266.5,720.5 1267,719.9 1267.5,714.6 1268,723.2 1268.5,719.6 1269,720.1 1269.5,716.8 1270,722.5 1270.5,721.7 1271,717.3 1271.5,720.6 1272,721.7" fill="none" stroke="#dcdcdc" stroke-width="1.35" stroke-linejoin="round" shape-rendering="crispEdges"/>
<polyline points="65,660.7 65.5,662.5 66,663.1 66.5,665.3 67,664.7 67.5,665.7 68,664.4 68.5,665.7 69,665.5 69.5,668.4 70,667.9 70.5,670.9 71,671.0 71.5,671.5 72,670.3 72.5,670.0 73,669.0 73.5,671.9 74,670.8 74.5,672.2 75,670.8 75.5,671.0 76,667.0 76.5,667.7 77,664.3 77.5,663.2 78,661.9 78.5,666.1 79,666.0 79.5,670.1 80,672.9 80.5,675.2 81,673.3 81.5,673.0 82,671.3 82.5,673.6 83,671.4 83.5,673.6 84,673.1 84.5,674.8 85,672.5 85.5,671.3 86,669.7 86.5,670.2 87,669.9 87.5,671.0 88,670.5 88.5,670.8 89,667.6 89.5,666.6 90,660.7 90.5,660.8 91,659.8 91.5,662.3 92,659.4 92.5,660.2 93,659.5 93.5,660.8 94,662.9 94.5,665.9 95,663.9 95.5,663.6 96,660.3 96.5,661.1 97,657.8 97.5,660.1 98,655.6 98.5,651.2 99,644.0 99.5,640.5 100,630.5 100.5,625.7 101,631.8 101.5,643.6 102,652.0 102.5,660.1 103,664.0 103.5,671.4 104,674.1 104.5,680.7 105,680.3 105.5,685.4 106,684.2 106.5,687.8 107,686.2 107.5,684.8 108,683.8 108.5,683.8 109,681.9 109.5,687.2 110,684.9 110.5,685.3 111,680.6 111.5,680.8 112,679.6 112.5,680.8 113,677.2 113.5,677.3 114,669.9 114.5,669.2 115,662.2 115.5,663.4 116,657.3 116.5,663.3 117,664.8 117.5,671.8 118,672.5 118.5,678.2 119,679.3 119.5,683.6 120,682.8 120.5,686.9 121,686.8 121.5,690.0 122,688.9 122.5,688.8 123,685.0 123.5,689.1 124,688.7 124.5,693.9 125,692.1 125.5,693.6 126,690.0 126.5,689.9 127,688.1 127.5,689.7 128,687.3 128.5,692.2 129,692.3 129.5,696.7 130,689.4 130.5,686.8 131,680.5 131.5,677.4 132,678.6 132.5,684.9 133,687.0 133.5,692.5 134,690.1 134.5,682.4 135,670.8 135.5,662.7 136,649.0 136.5,637.1 137,622.8 137.5,625.2 138,643.7 138.5,666.3 139,681.5 139.5,698.1 140,710.0 140.5,723.9 141,732.4 141.5,741.1 142,741.4 142.5,738.7 143,732.3 143.5,728.6 144,721.3 144.5,723.4 145,720.4 145.5,722.2 146,720.1 146.5,721.7 147,720.4 147.5,722.3 148,719.6 148.5,720.1 149,715.2 149.5,716.8 150,713.0 150.5,711.9 151,709.8 151.5,709.5 152,708.0 152.5,710.9 153,705.3 153.5,706.3 154,697.2 154.5,688.9 155,671.2 155.5,658.4 156,639.1 156.5,622.8 157,598.7 157.5,579.6 158,567.9 158.5,587.0 159,599.1 159.5,614.4 160,624.3 160.5,637.9 161,643.8 161.5,652.0 162,654.5 162.5,659.7 163,663.3 163.5,670.3 164,670.8 164.5,676.3 165,672.3 165.5,669.6 166,658.3 166.5,644.8 167,621.5 167.5,603.3 168,579.5 168.5,562.4 169,545.2 169.5,568.3 170,574.1 170.5,574.2 171,571.3 171.5,590.8 172,590.1 172.5,577.2 173,561.2 173.5,546.8 174,554.9 174.5,567.0 175,572.0 175.5,587.1 176,591.7 176.5,603.7 177,610.9 177.5,619.2 178,596.1 178.5,574.6 179,565.7 179.5,581.5 180,580.2 180.5,574.4 181,582.9 181.5,593.2 182,576.6 182.5,588.7 183,593.0 183.5,610.1 184,613.4 184.5,635.7 185,647.8 185.5,667.3 186,671.7 186.5,676.9 187,679.0 187.5,667.6 188,646.9 188.5,635.0 189,613.3 189.5,601.9 190,583.8 190.5,579.9 191,565.9 191.5,555.1 192,539.4 192.5,533.1 193,518.0 193.5,508.1 194,490.0 194.5,485.5 195,468.5 195.5,462.6 196,448.4 196.5,444.9 197,427.2 197.5,417.7 198,403.1 198.5,394.0 199,379.0 199.5,367.5 200,351.0 200.5,345.7 201,328.6 201.5,322.4 202,301.5 202.5,296.7 203,281.2 203.5,273.6 204,253.7 204.5,250.7 205,230.7 205.5,224.1 206,209.2 206.5,204.2 207,255.9 207.5,316.0 208,369.4 208.5,424.8 209,469.8 209.5,530.5 210,578.4 210.5,628.9 211,668.0 211.5,701.8 212,693.1 212.5,702.8 213,699.5 213.5,706.3 214,699.8 214.5,708.0 215,702.3 215.5,705.7 216,700.3 216.5,714.4 217,697.5 217.5,701.3 218,695.5 218.5,699.4 219,690.2 219.5,680.4 220,657.1 220.5,638.6 221,606.0 221.5,597.1 222,559.6 222.5,571.1 223,587.2 223.5,613.6 224,625.4 224.5,644.2 225,654.5 225.5,673.5 226,674.6 226.5,691.1 227,690.6 227.5,695.5 228,689.5 228.5,691.3 229,670.6 229.5,670.4 230,668.8 230.5,672.7 231,660.3 231.5,663.8 232,651.6 232.5,651.2 233,648.3 233.5,660.7 234,656.4 234.5,663.4 235,655.6 235.5,668.0 236,667.7 236.5,679.6 237,678.4 237.5,690.3 238,682.8 238.5,694.8 239,683.9 239.5,686.8 240,671.4 240.5,657.8 241,639.4 241.5,629.1 242,599.1 242.5,590.8 243,599.8 243.5,616.7 244,622.1 244.5,645.5 245,647.5 245.5,649.1 246,625.1 246.5,639.2 247,644.2 247.5,653.3 248,650.7 248.5,662.5 249,666.7 249.5,683.7 250,673.1 250.5,688.1 251,685.0 251.5,679.9 252,650.1 252.5,624.8 253,633.0 253.5,658.2 254,670.5 254.5,686.6 255,689.9 255.5,699.8 256,695.5 256.5,700.3 257,690.3 257.5,694.6 258,678.2 258.5,685.8 259,669.7 259.5,670.7 260,655.8 260.5,661.1 261,662.2 261.5,673.9 262,656.3 262.5,643.5 263,637.8 263.5,667.6 264,662.7 264.5,682.2 265,676.5 265.5,681.0 266,651.6 266.5,642.3 267,618.9 267.5,633.9 268,649.7 268.5,669.4 269,673.6 269.5,686.9 270,686.7 270.5,702.2 271,692.6 271.5,701.8 272,701.1 272.5,710.2 273,701.6 273.5,699.4 274,674.8 274.5,664.1 275,629.7 275.5,613.2 276,578.4 276.5,609.2 277,617.3 277.5,637.3 278,644.8 278.5,663.6 279,661.6 279.5,651.3 280,611.7 280.5,608.9 281,607.7 281.5,633.7 282,626.3 282.5,649.0 283,655.4 283.5,674.8 284,673.5 284.5,684.1 285,684.3 285.5,693.2 286,691.2 286.5,691.9 287,655.2 287.5,629.7 288,586.9 288.5,551.0 289,557.6 289.5,590.9 290,605.5 290.5,640.7 291,648.1 291.5,677.7 292,677.4 292.5,693.3 293,698.9 293.5,707.9 294,709.6 294.5,715.9 295,711.1 295.5,721.7 296,717.4 296.5,723.4 297,716.2 297.5,700.3 298,676.8 298.5,659.2 299,629.7 299.5,614.0 300,587.2 300.5,574.3 301,535.2 301.5,563.6 302,566.6 302.5,587.9 303,595.0 303.5,621.9 304,627.1 304.5,638.4 305,602.1 305.5,564.0 306,517.4 306.5,571.2 307,616.2 307.5,656.0 308,674.9 308.5,701.5 309,708.6 309.5,712.4 310,694.5 310.5,707.6 311,685.0 311.5,697.8 312,694.8 312.5,716.3 313,706.5 313.5,699.9 314,668.4 314.5,641.7 315,599.1 315.5,568.1 316,567.5 316.5,607.0 317,622.9 317.5,648.6 318,608.5 318.5,596.2 319,579.3 319.5,605.5 320,606.1 320.5,632.8 321,629.4 321.5,650.4 322,652.9 322.5,669.6 323,675.3 323.5,697.2 324,702.1 324.5,713.3 325,712.4 325.5,721.9 326,706.9 326.5,730.8 327,720.5 327.5,707.9 328,668.1 328.5,648.4 329,614.7 329.5,598.9 330,597.8 330.5,626.0 331,618.8 331.5,657.8 332,666.4 332.5,685.1 333,690.3 333.5,712.1 334,707.4 334.5,710.6 335,690.9 335.5,686.7 336,665.5 336.5,659.8 337,664.0 337.5,676.2 338,674.0 338.5,686.5 339,682.4 339.5,700.9 340,689.4 340.5,695.0 341,676.0 341.5,662.5 342,633.0 342.5,629.0 343,634.7 343.5,660.9 344,665.0 344.5,689.1 345,688.7 345.5,713.3 346,712.3 346.5,724.7 347,717.5 347.5,744.7 348,736.7 348.5,754.2 349,742.1 349.5,753.4 350,744.4 350.5,744.5 351,718.7 351.5,711.4 352,692.7 352.5,676.2 353,647.5 353.5,647.7 354,607.5 354.5,613.8 355,595.1 355.5,591.2 356,601.6 356.5,643.0 357,651.5 357.5,678.7 358,682.6 358.5,704.9 359,714.6 359.5,727.2 360,726.7 360.5,734.7 361,710.7 361.5,709.5 362,682.1 362.5,680.3 363,659.9 363.5,648.8 364,635.8 364.5,664.4 365,670.6 365.5,688.2 366,697.9 366.5,716.1 367,714.8 367.5,739.2 368,734.2 368.5,756.5 369,755.5 369.5,753.0 370,728.0 370.5,710.7 371,668.5 371.5,671.8 372,626.9 372.5,613.5 373,604.1 373.5,633.2 374,642.8 374.5,664.5 375,675.2 375.5,700.1 376,699.4 376.5,715.7 377,723.2 377.5,740.2 378,732.2 378.5,744.1 379,740.9 379.5,752.7 380,738.6 380.5,745.2 381,727.8 381.5,717.8 382,697.1 382.5,679.5 383,647.0 383.5,638.0 384,630.8 384.5,657.6 385,672.4 385.5,694.8 386,703.1 386.5,723.7 387,716.0 387.5,742.7 388,731.6 388.5,745.3 389,725.3 389.5,760.8 390,737.8 390.5,728.3 391,686.2 391.5,670.8 392,639.1 392.5,631.5 393,613.0 393.5,596.9 394,544.4 394.5,544.5 395,551.1 395.5,605.9 396,621.6 396.5,654.8 397,671.1 397.5,702.0 398,707.9 398.5,721.6 399,697.6 399.5,686.3 400,628.1 400.5,604.5 401,576.1 401.5,618.9 402,621.5 402.5,674.3 403,677.3 403.5,698.6 404,684.9 404.5,680.2 405,666.8 405.5,687.6 406,692.3 406.5,701.2 407,661.9 407.5,649.2 408,617.6 408.5,595.8 409,552.4 409.5,554.1 410,564.9 410.5,608.8 411,615.7 411.5,639.3 412,650.6 412.5,668.7 413,679.2 413.5,699.4 414,701.7 414.5,698.6 415,679.4 415.5,668.4 416,672.4 416.5,687.4 417,688.4 417.5,704.7 418,691.4 418.5,719.0 419,723.8 419.5,736.7 420,734.4 420.5,749.7 421,736.6 421.5,748.1 422,739.8 422.5,736.4 423,716.0 423.5,703.3 424,678.4 424.5,671.8 425,648.7 425.5,667.1 426,662.3 426.5,650.7 427,658.0 427.5,683.7 428,677.8 428.5,706.9 429,707.0 429.5,727.6 430,723.9 430.5,737.1 431,739.3 431.5,754.3 432,745.8 432.5,756.1 433,745.0 433.5,755.3 434,752.4 434.5,762.3 435,756.4 435.5,762.8 436,751.8 436.5,742.9 437,721.9 437.5,708.3 438,680.0 438.5,679.4 439,636.6 439.5,628.4 440,602.0 440.5,631.3 441,639.7 441.5,679.5 442,697.2 442.5,723.5 443,705.2 443.5,692.9 444,660.2 444.5,651.2 445,657.9 445.5,688.5 446,698.8 446.5,718.4 447,713.2 447.5,713.2 448,676.8 448.5,682.5 449,676.3 449.5,696.4 450,698.6 450.5,732.5 451,722.6 451.5,737.6 452,735.3 452.5,753.7 453,741.5 453.5,747.9 454,745.8 454.5,753.5 455,748.0 455.5,761.0 456,750.2 456.5,758.2 457,752.5 457.5,757.7 458,747.6 458.5,756.0 459,742.7 459.5,729.9 460,706.8 460.5,688.9 461,651.5 461.5,650.5 462,666.1 462.5,697.6 463,706.4 463.5,735.4 464,729.6 464.5,738.4 465,726.6 465.5,725.4 466,709.8 466.5,702.9 467,684.5 467.5,688.1 468,692.6 468.5,706.9 469,700.0 469.5,723.8 470,715.6 470.5,732.1 471,723.6 471.5,739.0 472,729.3 472.5,748.5 473,740.8 473.5,749.1 474,741.2 474.5,763.7 475,743.6 475.5,752.3 476,725.6 476.5,717.2 477,682.8 477.5,689.8 478,665.0 478.5,656.8 479,664.8 479.5,670.4 480,683.6 480.5,707.2 481,704.4 481.5,720.3 482,716.3 482.5,710.4 483,688.4 483.5,670.3 484,633.9 484.5,623.1 485,632.4 485.5,667.2 486,682.0 486.5,700.1 487,690.7 487.5,714.8 488,695.3 488.5,720.7 489,723.9 489.5,733.6 490,732.0 490.5,744.5 491,727.4 491.5,752.7 492,741.1 492.5,749.1 493,735.6 493.5,753.2 494,740.9 494.5,751.2 495,732.2 495.5,737.0 496,707.2 496.5,704.4 497,682.7 497.5,665.6 498,635.9 498.5,614.5 499,584.8 499.5,606.1 500,621.2 500.5,646.1 501,644.7 501.5,680.4 502,675.2 502.5,701.0 503,708.4 503.5,725.3 504,725.8 504.5,738.0 505,728.3 505.5,725.2 506,693.2 506.5,679.8 507,642.5 507.5,626.1 508,597.8 508.5,631.8 509,637.7 509.5,667.3 510,675.4 510.5,701.0 511,694.1 511.5,715.0 512,720.1 512.5,733.0 513,730.2 513.5,745.1 514,707.6 514.5,696.2 515,666.3 515.5,646.3 516,622.8 516.5,647.9 517,652.8 517.5,686.0 518,684.3 518.5,708.5 519,713.4 519.5,728.1 520,726.5 520.5,744.8 521,735.4 521.5,739.3 522,701.1 522.5,689.2 523,658.0 523.5,651.5 524,619.2 524.5,606.6 525,579.1 525.5,559.1 526,530.7 526.5,516.1 527,490.2 527.5,530.7 528,530.8 528.5,559.7 529,569.2 529.5,605.0 530,619.4 530.5,642.5 531,652.3 531.5,679.8 532,693.4 532.5,716.3 533,719.2 533.5,735.8 534,740.3 534.5,750.6 535,745.8 535.5,750.4 536,742.6 536.5,756.9 537,740.2 537.5,755.4 538,741.7 538.5,751.7 539,743.5 539.5,759.5 540,746.4 540.5,753.3 541,746.2 541.5,745.0 542,731.2 542.5,745.7 543,723.8 543.5,725.7 544,710.6 544.5,716.7 545,717.0 545.5,728.8 546,718.5 546.5,727.8 547,727.3 547.5,742.1 548,734.5 548.5,746.7 549,743.6 549.5,752.9 550,751.3 550.5,761.1 551,755.0 551.5,765.0 552,750.4 552.5,758.3 553,727.3 553.5,726.3 554,708.7 554.5,701.6 555,682.5 555.5,673.1 556,642.9 556.5,646.1 557,610.4 557.5,631.7 558,640.6 558.5,662.0 559,666.3 559.5,691.3 560,703.1 560.5,718.8 561,722.0 561.5,742.6 562,744.6 562.5,756.7 563,744.0 563.5,739.0 564,705.9 564.5,693.0 565,658.0 565.5,650.3 566,621.5 566.5,624.0 567,638.3 567.5,658.2 568,671.3 568.5,694.9 569,703.6 569.5,719.6 570,709.4 570.5,752.7 571,738.1 571.5,714.3 572,678.4 572.5,656.2 573,614.1 573.5,617.3 574,612.1 574.5,641.0 575,649.9 575.5,670.7 576,672.1 576.5,639.9 577,660.0 577.5,682.0 578,699.6 578.5,722.9 579,730.0 579.5,756.2 580,745.1 580.5,752.8 581,755.9 581.5,772.8 582,757.9 582.5,776.0 583,759.6 583.5,771.3 584,746.7 584.5,745.7 585,713.9 585.5,698.8 586,695.7 586.5,713.6 587,703.1 587.5,731.7 588,724.0 588.5,750.3 589,740.0 589.5,759.8 590,754.0 590.5,762.1 591,758.9 591.5,768.8 592,758.6 592.5,774.4 593,747.0 593.5,736.5 594,701.2 594.5,688.0 595,652.3 595.5,684.1 596,682.9 596.5,705.4 597,702.2 597.5,723.5 598,728.1 598.5,744.6 599,747.3 599.5,762.2 600,752.2 600.5,768.1 601,757.4 601.5,776.6 602,764.9 602.5,777.0 603,765.1 603.5,763.7 604,753.9 604.5,746.9 605,730.5 605.5,746.5 606,735.9 606.5,738.3 607,714.7 607.5,707.7 608,658.7 608.5,646.8 609,619.3 609.5,641.4 610,666.3 610.5,698.0 611,713.2 611.5,746.0 612,747.1 612.5,772.2 613,773.3 613.5,783.5 614,765.5 614.5,752.9 615,713.3 615.5,707.4 616,672.9 616.5,663.3 617,635.8 617.5,623.1 618,618.6 618.5,646.5 619,654.4 619.5,680.8 620,690.6 620.5,716.8 621,707.5 621.5,740.5 622,748.6 622.5,761.9 623,739.8 623.5,730.8 624,705.9 624.5,689.8 625,659.4 625.5,657.7 626,618.8 626.5,648.4 627,643.1 627.5,617.0 628,619.4 628.5,657.4 629,652.8 629.5,686.4 630,679.0 630.5,704.9 631,710.1 631.5,735.7 632,713.4 632.5,723.3 633,701.7 633.5,697.0 634,673.4 634.5,707.6 635,707.0 635.5,736.6 636,727.0 636.5,752.8 637,745.5 637.5,762.4 638,752.9 638.5,768.6 639,740.7 639.5,736.3 640,712.7 640.5,712.2 641,695.9 641.5,687.7 642,651.6 642.5,666.6 643,642.0 643.5,626.5 644,608.3 644.5,603.8 645,563.4 645.5,560.0 646,539.6 646.5,529.7 647,504.0 647.5,495.6 648,464.9 648.5,459.9 649,430.0 649.5,413.2 650,380.1 650.5,369.2 651,345.9 651.5,346.2 652,366.8 652.5,400.0 653,421.4 653.5,450.8 654,468.1 654.5,504.9 655,515.9 655.5,552.2 656,570.7 656.5,607.4 657,617.2 657.5,641.2 658,637.3 658.5,674.9 659,671.9 659.5,690.4 660,699.7 660.5,717.0 661,698.3 661.5,688.3 662,672.6 662.5,669.9 663,650.2 663.5,643.6 664,652.0 664.5,681.7 665,685.0 665.5,699.6 666,691.8 666.5,709.9 667,705.5 667.5,699.6 668,667.2 668.5,656.4 669,642.2 669.5,657.4 670,662.8 670.5,671.2 671,673.6 671.5,679.0 672,676.1 672.5,690.3 673,681.6 673.5,688.7 674,687.9 674.5,699.3 675,700.6 675.5,711.4 676,708.2 676.5,719.8 677,718.1 677.5,736.0 678,717.7 678.5,723.0 679,716.8 679.5,718.1 680,709.8 680.5,719.5 681,709.5 681.5,714.9 682,713.5 682.5,712.2 683,701.9 683.5,701.4 684,687.4 684.5,686.0 685,666.4 685.5,667.9 686,650.0 686.5,647.5 687,648.0 687.5,670.2 688,673.9 688.5,693.4 689,688.4 689.5,699.3 690,699.8 690.5,709.1 691,705.1 691.5,726.0 692,718.7 692.5,725.0 693,720.0 693.5,723.5 694,718.9 694.5,727.6 695,714.8 695.5,708.9 696,685.6 696.5,670.5 697,644.3 697.5,634.4 698,619.2 698.5,633.1 699,640.9 699.5,657.1 700,660.4 700.5,676.9 701,666.5 701.5,669.0 702,637.9 702.5,625.4 703,606.7 703.5,626.4 704,635.6 704.5,657.5 705,658.3 705.5,656.8 706,632.9 706.5,636.4 707,639.3 707.5,664.9 708,680.8 708.5,709.8 709,728.1 709.5,754.1 710,743.7 710.5,719.9 711,683.1 711.5,652.3 712,612.6 712.5,590.2 713,551.7 713.5,542.9 714,515.0 714.5,506.9 715,474.4 715.5,464.5 716,440.5 716.5,426.9 717,402.3 717.5,388.7 718,359.7 718.5,340.5 719,317.9 719.5,307.2 720,323.4 720.5,360.0 721,379.8 721.5,412.6 722,425.8 722.5,466.9 723,484.7 723.5,509.9 724,527.7 724.5,559.1 725,579.6 725.5,606.6 726,625.8 726.5,652.7 727,661.2 727.5,690.3 728,698.6 728.5,716.2 729,694.3 729.5,679.5 730,658.0 730.5,644.7 731,615.0 731.5,602.3 732,597.8 732.5,631.1 733,631.9 733.5,649.8 734,656.0 734.5,673.8 735,676.1 735.5,693.1 736,696.7 736.5,711.2 737,714.7 737.5,726.5 738,728.9 738.5,744.9 739,745.9 739.5,754.2 740,753.6 740.5,757.8 741,739.6 741.5,732.1 742,707.7 742.5,695.8 743,664.5 743.5,649.2 744,621.6 744.5,636.0 745,651.8 745.5,671.6 746,679.0 746.5,695.8 747,697.6 747.5,714.5 748,720.2 748.5,730.5 749,736.1 749.5,743.5 750,746.3 750.5,750.0 751,747.6 751.5,755.1 752,749.0 752.5,758.1 753,756.8 753.5,758.9 754,754.4 754.5,758.4 755,752.5 755.5,754.7 756,749.1 756.5,755.7 757,755.0 757.5,762.6 758,756.1 758.5,767.3 759,756.4 759.5,762.4 760,760.9 760.5,763.8 761,759.4 761.5,749.3 762,723.5 762.5,705.5 763,675.8 763.5,650.5 764,640.0 764.5,668.1 765,680.1 765.5,699.5 766,706.5 766.5,712.2 767,717.3 767.5,728.5 768,735.0 768.5,747.7 769,750.7 769.5,757.6 770,735.6 770.5,722.0 771,685.2 771.5,664.0 772,645.8 772.5,668.2 773,683.8 773.5,704.2 774,712.8 774.5,724.7 775,731.3 775.5,742.6 776,739.4 776.5,754.9 777,757.5 777.5,762.6 778,760.1 778.5,770.4 779,766.0 779.5,772.1 780,766.5 780.5,768.2 781,763.7 781.5,763.0 782,755.6 782.5,759.7 783,746.5 783.5,748.7 784,748.4 784.5,759.6 785,757.4 785.5,761.9 786,756.7 786.5,766.0 787,764.8 787.5,771.7 788,765.6 788.5,773.0 789,772.0 789.5,770.4 790,763.2 790.5,770.3 791,755.4 791.5,753.0 792,743.7 792.5,748.9 793,732.0 793.5,736.4 794,737.7 794.5,744.6 795,725.8 795.5,719.3 796,711.5 796.5,726.3 797,736.7 797.5,750.6 798,748.3 798.5,763.5 799,763.9 799.5,770.7 800,763.7 800.5,759.4 801,754.5 801.5,753.2 802,742.6 802.5,757.4 803,756.3 803.5,762.3 804,760.5 804.5,767.2 805,758.9 805.5,768.3 806,766.1 806.5,771.4 807,770.0 807.5,777.4 808,774.3 808.5,777.9 809,774.7 809.5,772.4 810,758.9 810.5,753.3 811,733.7 811.5,723.7 812,705.4 812.5,717.1 813,722.7 813.5,739.1 814,739.4 814.5,750.3 815,752.0 815.5,761.1 816,760.9 816.5,773.4 817,768.0 817.5,776.5 818,776.9 818.5,782.8 819,779.0 819.5,785.0 820,775.4 820.5,782.8 821,776.4 821.5,777.3 822,765.4 822.5,762.3 823,752.5 823.5,749.8 824,746.4 824.5,758.6 825,762.4 825.5,769.2 826,769.9 826.5,764.0 827,751.0 827.5,742.4 828,727.0 828.5,718.6 829,700.4 829.5,699.6 830,706.9 830.5,720.7 831,726.0 831.5,738.4 832,741.6 832.5,754.9 833,756.3 833.5,756.7 834,741.4 834.5,750.5 835,756.2 835.5,768.9 836,774.7 836.5,780.6 837,780.6 837.5,787.7 838,783.9 838.5,785.3 839,782.7 839.5,788.5 840,785.6 840.5,787.0 841,775.8 841.5,769.9 842,755.9 842.5,746.5 843,729.0 843.5,715.9 844,708.4 844.5,725.8 845,734.2 845.5,752.0 846,753.9 846.5,763.4 847,768.3 847.5,776.6 848,779.2 848.5,779.7 849,767.3 849.5,761.3 850,748.0 850.5,746.4 851,739.9 851.5,751.9 852,756.5 852.5,773.0 853,767.9 853.5,777.8 854,778.5 854.5,787.1 855,786.2 855.5,788.9 856,781.4 856.5,781.4 857,770.5 857.5,770.0 858,763.1 858.5,760.5 859,756.8 859.5,764.7 860,766.5 860.5,770.6 861,771.9 861.5,780.7 862,776.1 862.5,781.0 863,777.9 863.5,781.2 864,777.9 864.5,780.3 865,777.3 865.5,776.5 866,772.1 866.5,773.7 867,767.9 867.5,771.5 868,761.2 868.5,767.9 869,762.1 869.5,762.9 870,759.3 870.5,759.7 871,751.9 871.5,760.7 872,752.2 872.5,757.1 873,742.5 873.5,746.8 874,741.2 874.5,743.7 875,733.9 875.5,734.7 876,713.6 876.5,715.1 877,691.2 877.5,689.3 878,663.1 878.5,658.4 879,634.9 879.5,674.2 880,670.4 880.5,709.7 881,688.4 881.5,695.8 882,640.9 882.5,704.1 883,711.8 883.5,734.2 884,739.0 884.5,752.6 885,755.4 885.5,756.0 886,730.2 886.5,708.8 887,664.7 887.5,643.6 888,594.2 888.5,566.8 889,591.2 889.5,645.6 890,646.0 890.5,673.8 891,655.1 891.5,637.2 892,583.6 892.5,567.6 893,595.2 893.5,633.2 894,637.0 894.5,683.1 895,697.3 895.5,734.4 896,743.7 896.5,735.4 897,705.2 897.5,725.9 898,731.0 898.5,758.8 899,751.6 899.5,764.2 900,728.5 900.5,711.6 901,669.4 901.5,638.2 902,652.9 902.5,675.6 903,686.8 903.5,703.2 904,707.4 904.5,748.2 905,734.1 905.5,732.0 906,708.3 906.5,707.3 907,673.6 907.5,691.2 908,700.4 908.5,725.8 909,721.5 909.5,743.8 910,749.8 910.5,758.2 911,748.6 911.5,774.8 912,768.4 912.5,756.4 913,726.6 913.5,706.6 914,666.5 914.5,651.8 915,611.2 915.5,659.4 916,679.4 916.5,706.0 917,712.8 917.5,752.1 918,714.0 918.5,687.6 919,628.1 919.5,673.2 920,668.4 920.5,696.3 921,660.9 921.5,642.9 922,602.9 922.5,609.3 923,616.2 923.5,650.0 924,668.7 924.5,697.5 925,689.1 925.5,724.4 926,732.0 926.5,751.5 927,745.4 927.5,763.5 928,772.5 928.5,808.1 929,773.1 929.5,795.6 930,744.1 930.5,731.5 931,688.0 931.5,680.9 932,681.3 932.5,687.6 933,660.8 933.5,648.6 934,608.0 934.5,603.0 935,575.1 935.5,563.7 936,535.8 936.5,524.2 937,491.8 937.5,478.4 938,450.3 938.5,442.0 939,406.8 939.5,394.5 940,356.0 940.5,342.3 941,309.1 941.5,350.0 942,363.7 942.5,409.5 943,419.9 943.5,452.1 944,448.4 944.5,490.3 945,502.0 945.5,534.0 946,548.1 946.5,578.3 947,574.4 947.5,615.5 948,607.5 948.5,643.5 949,658.7 949.5,682.2 950,692.1 950.5,703.8 951,674.4 951.5,662.4 952,622.0 952.5,655.2 953,644.5 953.5,666.0 954,648.6 954.5,664.3 955,661.9 955.5,689.6 956,673.2 956.5,695.7 957,689.9 957.5,707.5 958,705.9 958.5,714.1 959,712.6 959.5,718.3 960,710.9 960.5,707.9 961,696.7 961.5,689.1 962,687.7 962.5,706.9 963,710.6 963.5,727.9 964,740.8 964.5,752.6 965,746.1 965.5,744.1 966,733.9 966.5,732.0 967,725.4 967.5,732.8 968,734.1 968.5,736.0 969,726.9 969.5,726.3 970,718.5 970.5,720.3 971,721.9 971.5,732.5 972,730.7 972.5,740.2 973,739.1 973.5,746.7 974,739.4 974.5,759.3 975,703.3 975.5,682.7 976,642.0 976.5,604.4 977,535.2 977.5,540.2 978,555.0 978.5,608.7 979,631.2 979.5,662.9 980,657.3 980.5,655.0 981,641.2 981.5,679.5 982,688.8 982.5,719.2 983,716.9 983.5,748.8 984,756.9 984.5,772.9 985,770.8 985.5,767.1 986,732.9 986.5,711.4 987,666.1 987.5,634.1 988,644.0 988.5,673.7 989,668.2 989.5,706.0 990,712.6 990.5,743.4 991,742.0 991.5,756.4 992,759.3 992.5,783.1 993,772.6 993.5,806.8 994,812.9 994.5,823.2 995,813.4 995.5,800.7 996,764.6 996.5,781.9 997,768.4 997.5,778.5 998,743.3 998.5,734.9 999,683.3 999.5,666.4 1000,626.9 1000.5,603.8 1001,641.2 1001.5,680.5 1002,698.8 1002.5,731.8 1003,734.0 1003.5,713.6 1004,667.2 1004.5,644.7 1005,608.5 1005.5,604.8 1006,611.1 1006.5,632.6 1007,642.4 1007.5,672.6 1008,667.8 1008.5,691.3 1009,705.7 1009.5,730.0 1010,740.9 1010.5,770.9 1011,778.2 1011.5,775.7 1012,761.3 1012.5,764.8 1013,753.9 1013.5,768.9 1014,751.5 1014.5,743.6 1015,716.9 1015.5,713.8 1016,683.1 1016.5,684.1 1017,637.7 1017.5,642.7 1018,647.4 1018.5,670.4 1019,676.5 1019.5,707.5 1020,717.3 1020.5,747.3 1021,760.2 1021.5,789.5 1022,791.1 1022.5,793.1 1023,770.5 1023.5,795.4 1024,782.3 1024.5,791.2 1025,759.3 1025.5,741.1 1026,710.6 1026.5,706.2 1027,649.5 1027.5,645.5 1028,600.3 1028.5,585.9 1029,543.0 1029.5,516.5 1030,477.3 1030.5,511.4 1031,521.4 1031.5,582.4 1032,579.8 1032.5,620.0 1033,632.1 1033.5,665.7 1034,681.0 1034.5,704.0 1035,717.9 1035.5,757.8 1036,757.0 1036.5,754.3 1037,722.4 1037.5,708.0 1038,679.2 1038.5,658.3 1039,623.8 1039.5,600.9 1040,591.3 1040.5,629.8 1041,633.7 1041.5,680.6 1042,679.7 1042.5,704.6 1043,703.0 1043.5,680.7 1044,639.4 1044.5,619.4 1045,615.6 1045.5,654.4 1046,671.8 1046.5,715.3 1047,737.9 1047.5,761.0 1048,750.7 1048.5,757.0 1049,711.7 1049.5,683.0 1050,638.5 1050.5,621.4 1051,607.2 1051.5,640.1 1052,647.7 1052.5,673.5 1053,674.6 1053.5,698.2 1054,696.4 1054.5,728.5 1055,707.3 1055.5,702.5 1056,714.5 1056.5,707.4 1057,666.7 1057.5,656.5 1058,623.5 1058.5,644.9 1059,659.0 1059.5,686.1 1060,702.1 1060.5,741.4 1061,751.6 1061.5,785.9 1062,753.6 1062.5,746.2 1063,702.7 1063.5,673.7 1064,652.1 1064.5,668.3 1065,672.8 1065.5,694.3 1066,696.1 1066.5,714.4 1067,706.3 1067.5,737.5 1068,718.4 1068.5,709.6 1069,682.3 1069.5,693.8 1070,692.0 1070.5,726.0 1071,721.1 1071.5,731.1 1072,735.7 1072.5,754.2 1073,748.5 1073.5,766.9 1074,768.1 1074.5,788.7 1075,792.0 1075.5,799.6 1076,780.8 1076.5,772.1 1077,749.0 1077.5,739.3 1078,706.5 1078.5,680.5 1079,640.0 1079.5,607.7 1080,585.3 1080.5,608.1 1081,620.1 1081.5,647.0 1082,610.0 1082.5,638.6 1083,635.9 1083.5,657.6 1084,665.4 1084.5,682.5 1085,677.5 1085.5,708.4 1086,693.8 1086.5,707.6 1087,693.1 1087.5,711.6 1088,699.0 1088.5,694.5 1089,682.2 1089.5,677.7 1090,666.9 1090.5,665.6 1091,669.7 1091.5,679.7 1092,681.1 1092.5,687.7 1093,690.1 1093.5,695.7 1094,696.9 1094.5,702.5 1095,699.7 1095.5,701.6 1096,701.2 1096.5,704.7 1097,703.8 1097.5,708.1 1098,705.4 1098.5,706.5 1099,704.7 1099.5,706.9 1100,706.9 1100.5,711.0 1101,710.3 1101.5,711.9 1102,712.5 1102.5,710.3 1103,703.4 1103.5,700.9 1104,691.2 1104.5,691.4 1105,682.3 1105.5,679.7 1106,673.2 1106.5,679.3 1107,684.2 1107.5,692.9 1108,698.1 1108.5,707.5 1109,711.5 1109.5,718.5 1110,722.3 1110.5,723.2 1111,708.2 1111.5,706.1 1112,693.8 1112.5,690.2 1113,680.5 1113.5,678.5 1114,685.9 1114.5,696.0 1115,700.4 1115.5,712.3 1116,716.5 1116.5,732.3 1117,739.1 1117.5,751.3 1118,753.8 1118.5,765.3 1119,757.6 1119.5,773.2 1120,770.1 1120.5,783.9 1121,776.3 1121.5,782.6 1122,783.3 1122.5,789.0 1123,786.8 1123.5,800.0 1124,792.2 1124.5,805.2 1125,799.1 1125.5,807.9 1126,796.9 1126.5,809.2 1127,801.8 1127.5,813.5 1128,812.2 1128.5,814.2 1129,807.5 1129.5,814.8 1130,809.1 1130.5,815.7 1131,799.4 1131.5,815.3 1132,805.1 1132.5,808.8 1133,800.9 1133.5,804.6 1134,796.2 1134.5,797.8 1135,792.7 1135.5,797.8 1136,791.6 1136.5,795.3 1137,787.0 1137.5,788.0 1138,782.5 1138.5,783.1 1139,772.3 1139.5,783.3 1140,770.2 1140.5,777.0 1141,757.5 1141.5,766.7 1142,756.9 1142.5,759.0 1143,746.2 1143.5,750.6 1144,739.0 1144.5,737.2 1145,729.0 1145.5,725.3 1146,721.4 1146.5,720.7 1147,714.6 1147.5,715.6 1148,711.7 1148.5,714.8 1149,710.9 1149.5,710.6 1150,705.9 1150.5,707.4 1151,703.9 1151.5,702.8 1152,701.8 1152.5,699.2 1153,696.1 1153.5,695.6 1154,694.9 1154.5,687.8 1155,689.4 1155.5,690.8 1156,687.5 1156.5,687.2 1157,689.6 1157.5,683.2 1158,688.9 1158.5,685.2 1159,688.9 1159.5,684.8 1160,684.3 1160.5,685.4 1161,685.1 1161.5,685.5 1162,686.5 1162.5,687.3 1163,684.0 1163.5,685.0 1164,687.4 1164.5,687.2 1165,686.7 1165.5,687.6 1166,682.4 1166.5,685.9 1167,677.9 1167.5,686.8 1168,678.9 1168.5,682.9 1169,681.9 1169.5,683.9 1170,683.6 1170.5,685.3 1171,683.1 1171.5,683.1 1172,681.2 1172.5,690.8 1173,683.0 1173.5,685.3 1174,690.0 1174.5,685.1 1175,685.9 1175.5,681.3 1176,686.1 1176.5,689.3 1177,684.7 1177.5,686.7 1178,683.1 1178.5,684.6 1179,681.5 1179.5,687.8 1180,688.6 1180.5,690.7 1181,682.7 1181.5,684.2 1182,683.7 1182.5,681.9 1183,683.9 1183.5,684.6 1184,679.6 1184.5,680.9 1185,681.8 1185.5,683.2 1186,685.8 1186.5,687.2 1187,680.4 1187.5,683.7 1188,687.0 1188.5,681.5 1189,686.9 1189.5,686.3 1190,682.0 1190.5,685.4 1191,682.9 1191.5,686.1 1192,686.6 1192.5,684.9 1193,683.2 1193.5,682.5 1194,681.8 1194.5,684.5 1195,688.3 1195.5,680.5 1196,684.1 1196.5,684.8 1197,682.2 1197.5,682.9 1198,682.5 1198.5,683.9 1199,686.5 1199.5,683.3 1200,684.4 1200.5,683.8 1201,684.9 1201.5,687.3 1202,682.8 1202.5,684.2 1203,684.4 1203.5,683.4 1204,687.5 1204.5,686.6 1205,684.1 1205.5,686.6 1206,684.7 1206.5,682.7 1207,688.1 1207.5,689.5 1208,682.8 1208.5,682.5 1209,683.1 1209.5,681.4 1210,686.0 1210.5,681.5 1211,685.7 1211.5,686.5 1212,684.7 1212.5,684.1 1213,684.9 1213.5,683.2 1214,689.1 1214.5,684.8 1215,680.9 1215.5,687.7 1216,677.2 1216.5,687.5 1217,685.7 1217.5,679.7 1218,681.6 1218.5,679.5 1219,684.5 1219.5,687.9 1220,683.4 1220.5,684.1 1221,684.9 1221.5,686.8 1222,683.7 1222.5,685.5 1223,687.1 1223.5,683.4 1224,683.6 1224.5,683.1 1225,683.1 1225.5,680.3 1226,685.8 1226.5,681.4 1227,682.2 1227.5,681.7 1228,682.4 1228.5,682.5 1229,680.3 1229.5,685.7 1230,684.5 1230.5,685.0 1231,682.3 1231.5,681.2 1232,686.8 1232.5,679.9 1233,687.2 1233.5,682.0 1234,683.6 1234.5,684.2 1235,680.4 1235.5,681.3 1236,682.4 1236.5,685.3 1237,683.9 1237.5,685.2 1238,678.5 1238.5,685.9 1239,683.3 1239.5,687.0 1240,679.2 1240.5,681.9 1241,682.7 1241.5,684.0 1242,684.3 1242.5,684.5 1243,683.0 1243.5,683.1 1244,688.1 1244.5,683.2 1245,683.1 1245.5,682.7 1246,684.3 1246.5,688.6 1247,681.2 1247.5,682.1 1248,681.6 1248.5,682.1 1249,685.3 1249.5,687.1 1250,684.1 1250.5,682.7 1251,683.8 1251.5,686.9 1252,684.7 1252.5,679.6 1253,683.4 1253.5,683.8 1254,682.4 1254.5,685.0 1255,684.2 1255.5,688.0 1256,686.3 1256.5,680.2 1257,685.6 1257.5,681.8 1258,685.2 1258.5,679.8 1259,683.3 1259.5,677.4 1260,679.2 1260.5,687.0 1261,684.1 1261.5,676.1 1262,677.6 1262.5,686.2 1263,681.8 1263.5,679.1 1264,682.7 1264.5,680.3 1265,682.2 1265.5,684.4 1266,688.8 1266.5,680.3 1267,683.6 1267.5,683.8 1268,684.4 1268.5,682.2 1269,686.5 1269.5,684.0 1270,682.8 1270.5,683.8 1271,679.1 1271.5,679.7 1272,685.6" fill="none" stroke="#ff8010" stroke-width="2.0" stroke-linejoin="round" shape-rendering="crispEdges"/>
<rect x="471.3" y="113" width="2.3" height="828" fill="#c43cc4"/>
<rect x="474.0" y="114.5" width="7" height="13" fill="#fcfcf8"/>
<text x="474.5" y="125" font-size="11" fill="#000">1</text>
<rect x="876.8" y="113" width="2.3" height="828" fill="#c43cc4"/>
<rect x="869.5" y="114.5" width="7" height="13" fill="#fcfcf8"/>
<text x="870.0" y="125" font-size="11" fill="#000">2</text>
<rect x="54" y="113" width="1.4" height="829" fill="#f0a040"/>
<path d="M50 113.0H54 M52 129.6H54 M52 146.1H54 M52 162.7H54 M52 179.2H54 M50 195.8H54 M52 212.4H54 M52 228.9H54 M52 245.5H54 M52 262.0H54 M50 278.6H54 M52 295.2H54 M52 311.7H54 M52 328.3H54 M52 344.8H54 M50 361.4H54 M52 378.0H54 M52 394.5H54 M52 411.1H54 M52 427.6H54 M50 444.2H54 M52 460.8H54 M52 477.3H54 M52 493.9H54 M52 510.4H54 M50 527.0H54 M52 543.6H54 M52 560.1H54 M52 576.7H54 M52 593.2H54 M50 609.8H54 M52 626.4H54 M52 642.9H54 M52 659.5H54 M52 676.0H54 M50 692.6H54 M52 709.2H54 M52 725.7H54 M52 742.3H54 M52 758.8H54 M50 775.4H54 M52 792.0H54 M52 808.5H54 M52 825.1H54 M52 841.6H54 M50 858.2H54 M52 874.8H54 M52 891.3H54 M52 907.9H54 M52 924.4H54 M50 941.0H54" stroke="#8a98a4" stroke-width="1" fill="none"/>
<text x="49" y="117.0" font-size="11" text-anchor="end">54</text>
<text x="49" y="199.8" font-size="11" text-anchor="end">48</text>
<text x="49" y="282.6" font-size="11" text-anchor="end">42</text>
<text x="49" y="365.4" font-size="11" text-anchor="end">36</text>
<text x="49" y="448.2" font-size="11" text-anchor="end">30</text>
<text x="49" y="531.0" font-size="11" text-anchor="end">24</text>
<text x="49" y="613.8" font-size="11" text-anchor="end">18</text>
<text x="49" y="696.6" font-size="11" text-anchor="end">12</text>
<text x="49" y="779.4" font-size="11" text-anchor="end">6</text>
<text x="49" y="862.2" font-size="11" text-anchor="end">0</text>
<text x="49" y="945.0" font-size="11" text-anchor="end">-6</text>
<text transform="translate(13.5,610) rotate(-90)" font-size="11" fill="#1a1a6e" textLength="194" lengthAdjust="spacingAndGlyphs">[1] ES420_TH1_CH1\ES420 / Thermo:1</text>
<rect x="1275" y="113" width="1.3" height="831" fill="#101010"/>
<rect x="1273.5" y="950" width="1" height="57" fill="#b4b4b4"/>
<path d="M1276 113.0H1280 M1276 129.6H1278 M1276 146.2H1278 M1276 162.8H1278 M1276 179.4H1278 M1276 196.1H1280 M1276 212.7H1278 M1276 229.3H1278 M1276 245.9H1278 M1276 262.5H1278 M1276 279.1H1280 M1276 295.7H1278 M1276 312.3H1278 M1276 328.9H1278 M1276 345.5H1278 M1276 362.1H1280 M1276 378.8H1278 M1276 395.4H1278 M1276 412.0H1278 M1276 428.6H1278 M1276 445.2H1280 M1276 461.8H1278 M1276 478.4H1278 M1276 495.0H1278 M1276 511.6H1278 M1276 528.2H1280 M1276 544.9H1278 M1276 561.5H1278 M1276 578.1H1278 M1276 594.7H1278 M1276 611.3H1280 M1276 627.9H1278 M1276 644.5H1278 M1276 661.1H1278 M1276 677.7H1278 M1276 694.4H1280 M1276 711.0H1278 M1276 727.6H1278 M1276 744.2H1278 M1276 760.8H1278 M1276 777.4H1280 M1276 794.0H1278 M1276 810.6H1278 M1276 827.2H1278 M1276 843.8H1278 M1276 860.4H1280 M1276 877.1H1278 M1276 893.7H1278 M1276 910.3H1278 M1276 926.9H1278 M1276 943.5H1280" stroke="#303030" stroke-width="1" fill="none"/>
<text x="1282" y="117.0" font-size="11">10</text>
<text x="1282" y="200.1" font-size="11">9</text>
<text x="1282" y="283.1" font-size="11">8</text>
<text x="1282" y="366.1" font-size="11">7</text>
<text x="1282" y="449.2" font-size="11">6</text>
<text x="1282" y="532.2" font-size="11">5</text>
<text x="1282" y="615.3" font-size="11">4</text>
<text x="1282" y="698.4" font-size="11">3</text>
<text x="1282" y="781.4" font-size="11">2</text>
<text x="1282" y="864.4" font-size="11">1</text>
<text x="1282" y="947.5" font-size="11">0</text>
<rect x="65" y="962" width="1208" height="1.3" fill="#c83030"/>
<path d="M95.4 963V965 M125.9 963V965 M156.3 963V965 M186.8 963V965 M217.2 963V965 M247.6 963V965 M278.1 963V965 M308.5 963V965 M339.0 963V965 M369.4 963V965 M399.8 963V965 M430.3 963V965 M460.7 963V965 M491.2 963V965 M521.6 963V965 M552.0 963V965 M582.5 963V965 M612.9 963V965 M643.4 963V965 M673.8 963V965 M704.2 963V965 M734.7 963V965 M765.1 963V965 M795.6 963V965 M826.0 963V965 M856.4 963V965 M886.9 963V965 M917.3 963V965 M947.8 963V965 M978.2 963V965 M1008.6 963V965 M1039.1 963V965 M1069.5 963V965 M1100.0 963V965 M1130.4 963V965 M1160.8 963V965 M1191.3 963V965 M1221.7 963V965 M1252.2 963V965" stroke="#c83030" stroke-width="1" fill="none"/>
<text x="217.2" y="974" font-size="11" text-anchor="middle">100</text>
<text x="369.4" y="974" font-size="11" text-anchor="middle">200</text>
<text x="521.6" y="974" font-size="11" text-anchor="middle">300</text>
<text x="673.8" y="974" font-size="11" text-anchor="middle">400</text>
<text x="826.0" y="974" font-size="11" text-anchor="middle">500</text>
<text x="978.2" y="974" font-size="11" text-anchor="middle">600</text>
<text x="1130.4" y="974" font-size="11" text-anchor="middle">700</text>
<text x="654" y="984" font-size="11" font-weight="bold" fill="#e02020" textLength="30" lengthAdjust="spacingAndGlyphs">Zeit s</text>
<text x="50.5" y="972" font-size="11" fill="#1a1a6e" text-decoration="underline">A</text>
<rect x="50" y="973" width="6" height="1" fill="#1a1a6e"/>
</svg>

<!-- right panel -->
<div class="a" style="left:1295px;top:97px;width:2px;height:911px;background:#a0a0a0;border-right:1px solid #d8d8d8"></div>
<div class="a" style="left:1298px;top:99px;width:1616px;height:885px;background:#fff;border:1px solid #808080;border-left:2px solid #8c8c8c;border-right-color:#b8b8b8"></div>
<div class="a" style="left:1299px;top:100px;width:1614px;height:12px;background:#f0f0f0"></div>
<div class="a" style="left:1302px;top:103px;width:1599px;height:3px;border-top:1px solid #fff;border-bottom:1px solid #a0a0a0"></div>
<div class="a" style="left:1302px;top:107px;width:1599px;height:3px;border-top:1px solid #fff;border-bottom:1px solid #a0a0a0"></div>
<div class="a" style="left:1903px;top:100px;width:11px;height:11px;border:1px solid;border-color:#fff #808080 #808080 #fff"></div>
<svg class="a" style="left:1905px;top:102px" width="8" height="8" viewBox="0 0 8 8"><path d="M0.5 0.5 L7 7 M7 0.5 L0.5 7" stroke="#000" stroke-width="1.1"/></svg>
<div class="hd" style="left:1300px;width:21px"></div>
<svg class="a" style="left:1302px;top:115px" width="17" height="15" viewBox="0 0 17 15"><path d="M2 8 C3 4 6 2 10 2 L9 5 C7 5 6 6 5.5 8 L7 9 L4 12 L1.5 10 Z" fill="#b4b4b4" stroke="#8c8c8c" stroke-width=".8"/><path d="M11 2.5 H15 M11 5 H15 M10 7.5 H15 M9 10 H15 M9 12.5 H15" stroke="#707070" stroke-width="1.2" stroke-dasharray="1.6 .8"/></svg>
<div class="hd" style="left:1321px;width:29px">Linier</div>
<div class="hd" style="left:1350px;width:231px">Name</div>
<div class="hd" style="left:1581px;width:54px">Cursor 1</div>
<div class="hd" style="left:1635px;width:54px">Cursor 2</div>
<div class="hd" style="left:1689px;width:63px">Cursor-Diff.</div>
<div class="hd" style="left:1752px;width:55px">Einheiten</div>
<div class="hd" style="left:1807px;width:46px">Pro-Div</div>
<div class="hd" style="left:1853px;width:54px">Startwert</div>
<div class="rh" style="top:132px">1</div>
<div class="row" style="top:132px;"><i style="background:#c83232"></i><b><svg width="20" height="19" viewBox="0 0 20 19" style="position:static"><path d="M0 2.5 H4 M2.5 1 L4 2.5 L2.5 4 M4.5 .5 H10.5 V4.5 H4.5 Z M10.5 2.5 H14" stroke="#6a6a9a" fill="none" stroke-width="1"/><text x="4.5" y="15.5" font-family="Liberation Sans,sans-serif" font-weight="bold" font-size="11.5" fill="#1c5c1c">C</text></svg></b><span class="nm" style="left:55px;top:2px">[1]&nbsp; ES420_TH1_CH1\ES420 / Thermo:1</span><span style="left:263px">5,27309*</span><span style="left:317px">3,9057*</span><span style="left:371px">-1,36739</span><span style="left:434px">DegC</span><span style="left:489px">6</span><span style="left:535px">-6</span></div>
<div class="rh" style="top:151px">2</div>
<div class="row" style="top:151px;"><i style="background:#32c832"></i><b><svg width="20" height="19" viewBox="0 0 20 19" style="position:static"><path d="M0 2.5 H4 M2.5 1 L4 2.5 L2.5 4 M4.5 .5 H10.5 V4.5 H4.5 Z M10.5 2.5 H14" stroke="#6a6a9a" fill="none" stroke-width="1"/><text x="4.5" y="15.5" font-family="Liberation Sans,sans-serif" font-weight="bold" font-size="11.5" fill="#1c5c1c">C</text></svg></b><span class="nm" style="left:55px;top:2px">[1]&nbsp; ES420_TH1_CH2\ES420 / Thermo:1</span><span style="left:263px">4,93548*</span><span style="left:317px">6,92934*</span><span style="left:371px">1,99387</span><span style="left:434px">DegC</span><span style="left:489px">6</span><span style="left:535px">-6</span></div>
<div class="rh" style="top:170px">3</div>
<div class="row" style="top:170px;"><i style="background:#32dcdc"></i><b><svg width="20" height="19" viewBox="0 0 20 19" style="position:static"><path d="M0 2.5 H4 M2.5 1 L4 2.5 L2.5 4 M4.5 .5 H10.5 V4.5 H4.5 Z M10.5 2.5 H14" stroke="#6a6a9a" fill="none" stroke-width="1"/><text x="4.5" y="15.5" font-family="Liberation Sans,sans-serif" font-weight="bold" font-size="11.5" fill="#1c5c1c">C</text></svg></b><span class="nm" style="left:55px;top:2px">[1]&nbsp; ES420_TH1_CH3\ES420 / Thermo:1</span><span style="left:263px">4,98252*</span><span style="left:317px">7,90962*</span><span style="left:371px">2,92709</span><span style="left:434px">DegC</span><span style="left:489px">6</span><span style="left:535px">-6</span></div>
<div class="rh" style="top:189px">4</div>
<div class="row" style="top:189px;"><i style="background:#c832c8"></i><b><svg width="20" height="19" viewBox="0 0 20 19" style="position:static"><path d="M0 2.5 H4 M2.5 1 L4 2.5 L2.5 4 M4.5 .5 H10.5 V4.5 H4.5 Z M10.5 2.5 H14" stroke="#6a6a9a" fill="none" stroke-width="1"/><text x="4.5" y="15.5" font-family="Liberation Sans,sans-serif" font-weight="bold" font-size="11.5" fill="#1c5c1c">C</text></svg></b><span class="nm" style="left:55px;top:2px">[1]&nbsp; ES420_TH1_CH4\ES420 / Thermo:1</span><span style="left:263px">4,41544*</span><span style="left:317px">4,93045*</span><span style="left:371px">0,515009</span><span style="left:434px">DegC</span><span style="left:489px">6</span><span style="left:535px">-6</span></div>
<div class="rh" style="top:208px">5</div>
<div class="row" style="top:208px;"><i style="background:#f0f032"></i><b><svg width="20" height="19" viewBox="0 0 20 19" style="position:static"><path d="M0 2.5 H4 M2.5 1 L4 2.5 L2.5 4 M4.5 .5 H10.5 V4.5 H4.5 Z M10.5 2.5 H14" stroke="#6a6a9a" fill="none" stroke-width="1"/><text x="4.5" y="15.5" font-family="Liberation Sans,sans-serif" font-weight="bold" font-size="11.5" fill="#1c5c1c">C</text></svg></b><span class="nm" style="left:55px;top:2px">[1]&nbsp; ES420_TH1_CH5\ES420 / Thermo:1</span><span style="left:263px">7,06014*</span><span style="left:317px">7,23375*</span><span style="left:371px">0,173611</span><span style="left:434px">DegC</span><span style="left:489px">6</span><span style="left:535px">-6</span></div>
<div class="rh" style="top:227px">6</div>
<div class="row" style="top:227px;"><i style="background:#8c8c8c"></i><b><svg width="20" height="19" viewBox="0 0 20 19" style="position:static"><path d="M0 2.5 H4 M2.5 1 L4 2.5 L2.5 4 M4.5 .5 H10.5 V4.5 H4.5 Z M10.5 2.5 H14" stroke="#6a6a9a" fill="none" stroke-width="1"/><text x="4.5" y="15.5" font-family="Liberation Sans,sans-serif" font-weight="bold" font-size="11.5" fill="#1c5c1c">C</text></svg></b><span class="nm" style="left:55px;top:2px">[1]&nbsp; ES420_TH1_CH6\ES420 / Thermo:1</span><span style="left:263px">10,1362*</span><span style="left:317px">9,64011*</span><span style="left:371px">-0,496046</span><span style="left:434px">DegC</span><span style="left:489px">6</span><span style="left:535px">-6</span></div>
<div class="rh" style="top:246px">7</div>
<div class="row" style="top:246px;"><i style="background:#d2d2d2"></i><b><svg width="20" height="19" viewBox="0 0 20 19" style="position:static"><path d="M0 2.5 H4 M2.5 1 L4 2.5 L2.5 4 M4.5 .5 H10.5 V4.5 H4.5 Z M10.5 2.5 H14" stroke="#6a6a9a" fill="none" stroke-width="1"/><text x="4.5" y="15.5" font-family="Liberation Sans,sans-serif" font-weight="bold" font-size="11.5" fill="#1c5c1c">C</text></svg></b><span class="nm" style="left:55px;top:2px">[1]&nbsp; ES420_TH1_CH7\ES420 / Thermo:1</span><span style="left:263px">7,76509*</span><span style="left:317px">8,1945*</span><span style="left:371px">0,429413</span><span style="left:434px">DegC</span><span style="left:489px">6</span><span style="left:535px">-6</span></div>
<div class="rh" style="top:265px">8</div>
<div class="row" style="top:265px;background:#ff8000;color:#ffe0a0;border-bottom:1px dotted #000;border-top:1px dotted #000;"><i style="background:#ff8000"></i><b><svg width="20" height="19" viewBox="0 0 20 19" style="position:static"><path d="M0 2.5 H4 M2.5 1 L4 2.5 L2.5 4 M4.5 .5 H10.5 V4.5 H4.5 Z M10.5 2.5 H14" stroke="#6a6a9a" fill="none" stroke-width="1"/><text x="4.5" y="15.5" font-family="Liberation Sans,sans-serif" font-weight="bold" font-size="11.5" fill="#1c5c1c">C</text></svg></b><span class="nm" style="left:55px;top:2px">[1]&nbsp; ES420_TH1_CH8\ES420 / Thermo:1</span><span style="left:263px">8,02229*</span><span style="left:317px">10,0832*</span><span style="left:371px">2,06094</span><span style="left:434px">DegC</span><span style="left:489px">6</span><span style="left:535px">-6</span></div>
<div class="cl" style="left:1349px"></div>
<div class="cl" style="left:1580px"></div>
<div class="cl" style="left:1634px"></div>
<div class="cl" style="left:1688px"></div>
<div class="cl" style="left:1751px"></div>
<div class="cl" style="left:1806px"></div>
<div class="cl" style="left:1852px"></div>
<div class="cl" style="left:1906px"></div>
<div class="a" style="left:1298px;top:984px;width:1616px;height:1px;background:#a0a0a0"></div>
<div class="tab" style="left:1300px;width:48px;top:984px;height:25px;border-top-color:#fff;z-index:2;"><span style="left:7px;top:6px">Signale</span></div>
<div class="tab" style="left:1350px;width:64px;"><svg width="20" height="19" viewBox="0 0 20 19" style="left:4px;top:0px"><path d="M0 2.5 H4 M2.5 1 L4 2.5 L2.5 4 M4.5 .5 H10.5 V4.5 H4.5 Z M10.5 2.5 H14" stroke="#6a6a9a" fill="none" stroke-width="1"/><text x="4.5" y="15.5" font-family="Liberation Sans,sans-serif" font-weight="bold" font-size="11.5" fill="#1c5c1c">C</text></svg><span style="left:26px;top:4px">Analog</span></div>
<div class="tab" style="left:1417px;width:61px;"><svg width="20" height="19" viewBox="0 0 20 19" style="left:4px;top:0px"><path d="M0 2.5 H4 M2.5 1 L4 2.5 L2.5 4 M4.5 .5 H10.5 V4.5 H4.5 Z M10.5 2.5 H14" stroke="#6a6a9a" fill="none" stroke-width="1"/><text x="4.5" y="15.5" font-family="Liberation Sans,sans-serif" font-weight="bold" font-size="11.5" fill="#1c5c1c">L</text></svg><span style="left:26px;top:4px">Digital</span></div>
<div class="tab" style="left:1480px;width:64px;"><svg width="20" height="19" viewBox="0 0 20 19" style="left:4px;top:0px"><path d="M0 2.5 H4 M2.5 1 L4 2.5 L2.5 4 M4.5 .5 H10.5 V4.5 H4.5 Z M10.5 2.5 H14" stroke="#6a6a9a" fill="none" stroke-width="1"/><text x="4.5" y="15.5" font-family="Liberation Sans,sans-serif" font-weight="bold" font-size="11.5" fill="#1c5c1c">E</text></svg><span style="left:27px;top:4px">Events</span></div>
<div class="tab" style="left:1547px;width:48px;"><svg width="14" height="14" viewBox="0 0 14 14" style="left:5px;top:4px"><path d="M0 3.5 H4 M2.5 2 L4 3.5 L2.5 5 M0 9.5 H4 M2.5 8 L4 9.5 L2.5 11 M6.5 1.5 H11.5 V5.5 H6.5 Z M6.5 7.5 H11.5 V11.5 H6.5 Z M4.5 1 V12" stroke="#202020" fill="none" stroke-width="1"/></svg><span style="left:26px;top:4px">Alle</span></div>
<div class="tab" style="left:1598px;width:39px;"><span style="left:26px;top:4px">A</span></div>

<!-- status bar -->
<div class="a" style="left:0;top:1008px;width:1919px;height:1px;background:#a0a0a0"></div>
<div class="a" style="left:0;top:1009px;width:1919px;height:1px;background:#fff"></div>
<div class="pan" style="left:1px;top:1010px;width:97px"></div>
<div class="pan" style="left:102px;top:1010px;width:97px"></div>
<div class="pan" style="left:202px;top:1010px;width:97px"></div>
<div class="pan" style="left:302px;top:1010px;width:57px"></div>
<div class="pan" style="left:362px;top:1010px;width:298px"></div>
<div class="pan" style="left:661px;top:1010px;width:1254px;border-right:0"></div>
<div class="a" style="left:0;top:1028px;width:1919px;height:1px;background:#d0d0d0"></div>
<div class="pan" style="left:1px;top:1030px;width:298px"></div>
<div class="pan" style="left:302px;top:1030px;width:698px"></div>
<div class="pan" style="left:1002px;top:1030px;width:248px"></div>
<div class="pan" style="left:1252px;top:1030px;width:665px"></div>
<div class="t sb" id="s1" style="transform:scaleX(0.885);left:3px;top:1013px">DEFAULTGRP</div>
<div class="t sb" id="s2" style="transform:scaleX(0.889);left:105px;top:1013px">TIME</div>
<div class="t sb" id="s3" style="transform:scaleX(1.042);left:304px;top:1013px">MIN/MAX</div>
<div class="t sb" id="s4" style="transform:scaleX(0.938);left:364px;top:1013px">Aktiv:&nbsp; [1]&nbsp; ES420_TH1_CH8\ES420 / Thermo:1</div>
<div class="t sb" id="s5" style="transform:scaleX(0.937);left:664px;top:1013px">dt[s]: 0,001 t1 [s]: 266,849</div>
<div class="t sb" id="s6" style="transform:scaleX(0.934);left:1249px;top:1013px">t2 [s]: 534,299 *</div>
<div class="t sb" id="s7" style="transform:scaleX(0.947);left:1834px;top:1013px">t2-t1 [s]: 267,45</div>
<div class="t sb" id="s8" style="transform:scaleX(1.012);left:3px;top:1034px">Öffnen und konfigurieren</div>
<div class="t sb" id="s9" style="transform:scaleX(0.972);left:306px;top:1032px">[1]&nbsp; C:\Users\tea63ce\Desktop\20151105-MS-RDW-Q7-Rauchmessungen_referenz-02.mf4</div>
<div class="t sb" id="s10" style="transform:scaleX(0.988);left:1254px;top:1034px">Dateioptimierungs-Status 0/1 Dateien</div>
<div class="a" style="left:0;top:1049px;width:1919px;height:2px;background:#101010"></div>
<div class="a" style="left:14px;top:1045px;width:27px;height:12px;border-radius:50%;background:radial-gradient(#cfe4f4,#7aa0c0);border:1px solid #54708c"></div>

</body>
</html>
